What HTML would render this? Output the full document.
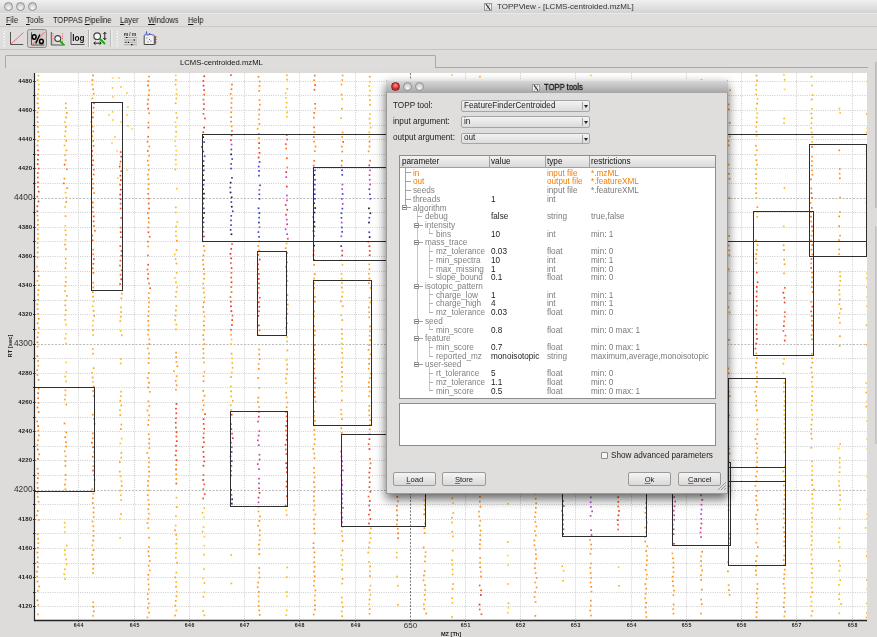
<!DOCTYPE html>
<html><head><meta charset="utf-8"><style>
*{margin:0;padding:0;box-sizing:border-box}
html,body{width:877px;height:637px;overflow:hidden;background:#dddcdb;font-family:"Liberation Sans",sans-serif;color:#222;position:relative}
.abs{position:absolute}
#titlebar{left:0;top:0;width:877px;height:13px;background:linear-gradient(#f0f0f0,#d3d3d3)}
.tl{position:absolute;width:9px;height:9px;border-radius:50%;background:radial-gradient(circle at 50% 75%,#f6f6f6 0,#dadada 45%,#bababa 100%);border:1px solid #929292}
#title{will-change:transform;left:497px;top:2px;font-size:8px;color:#333;white-space:pre}
#xicon{left:484px;top:2px;width:8px;height:8px;border:1px solid #777;background:#f4f4f4;font-size:8px;line-height:7px;text-align:center;font-family:"Liberation Serif",serif;color:#222}
#menubar{left:0;top:13px;width:877px;height:14px;background:#dfdedd;border-top:1px solid #e8e8e8;border-bottom:1px solid #c9c8c7}
.mi{position:absolute;will-change:transform;top:2.4px;font-size:8.2px;color:#151515;white-space:pre;transform:scaleX(0.915);transform-origin:0 0}
.mi u{text-decoration:underline}
#toolbar{left:0;top:27px;width:877px;height:23px;background:#dfdedd;border-bottom:1px solid #c4c3c2}
#tabarea{left:0;top:50px;width:877px;height:23px;background:#dddcdb}
.dt{position:absolute;will-change:transform;font-size:8.2px;color:#222;white-space:pre;line-height:10px}
.tlr{width:9px;height:9px;border-radius:50%;background:radial-gradient(circle at 50% 35%,#ff9b9b 0,#e23a3a 45%,#a51414 100%);border:1px solid #8a2020}
.xi{width:8px;height:8px;background:#f2f2f2;border:1px solid #888}
.combo{position:absolute;width:128.5px;height:11.5px;border:1px solid #a5a5a5;border-radius:2px;background:linear-gradient(#f3f3f3,#dcdcdc)}
.combo span{position:absolute;will-change:transform;font-size:8.2px;color:#222;white-space:pre;line-height:10px}
.combo i{position:absolute;left:119.5px;top:1px;width:1px;height:8px;background:#a5a5a5}
.combo b{position:absolute;left:121.5px;top:4px;width:0;height:0;border-left:2.5px solid transparent;border-right:2.5px solid transparent;border-top:3px solid #222}
.hdr{background:linear-gradient(#f2f2f2,#dadada);border-bottom:1px solid #a0a0a0}
.tb{width:5px;height:5px;border:1px solid #9a9a9a;background:#fff}
.tb:after{content:"";position:absolute;left:0;top:1px;width:3px;height:1px;background:#666}
.btn{position:absolute;border:1px solid #9a9a9a;border-radius:2px;background:linear-gradient(#f4f4f4,#d9d9d9)}
.btn span{position:absolute;will-change:transform;left:0;right:0;top:2.3px;text-align:center;font-size:7.6px;color:#222;line-height:10px}
.btn u{text-decoration:underline;text-decoration-color:#777}

#plot{will-change:transform}
.tabl{will-change:transform}

</style></head><body>
<div id="titlebar" class="abs">
 <div class="tl" style="left:4px;top:2px"></div>
 <div class="tl" style="left:16px;top:2px"></div>
 <div class="tl" style="left:28px;top:2px"></div>
 <svg class="abs" style="left:483.5px;top:2.5px" width="8" height="8"><rect x="0.5" y="0.5" width="7" height="7" fill="#f4f4f4" stroke="#9a9a9a"/><path d="M2 1.2 L6.2 6.8" stroke="#333" stroke-width="1.1"/><path d="M6 1.2 L2 6.8" stroke="#555" stroke-width="0.6"/></svg>
 <div id="title" class="abs">TOPPView - [LCMS-centroided.mzML]</div>
</div>
<div id="menubar" class="abs">
 <span class="mi" style="left:5.6px"><u>F</u>ile</span>
 <span class="mi" style="left:26.3px"><u>T</u>ools</span>
 <span class="mi" style="left:53.2px">TOPPAS <u>P</u>ipeline</span>
 <span class="mi" style="left:119.8px"><u>L</u>ayer</span>
 <span class="mi" style="left:147.8px"><u>W</u>indows</span>
 <span class="mi" style="left:187.8px"><u>H</u>elp</span>
</div>
<div id="toolbar" class="abs"></div>
<svg class="abs" style="left:0;top:0;will-change:transform" width="170" height="52">
 <path d="M4 31 l2 1.5 l-2 1.5 l2 1.5 l-2 1.5 l2 1.5 l-2 1.5 l2 1.5 l-2 1.5 l2 1.5 l-2 1.5 l2 1.5" fill="none" stroke="#fbfbfb" stroke-width="1.2"/><path d="M4.6 31.5 l2 1.5 l-2 1.5 l2 1.5 l-2 1.5 l2 1.5 l-2 1.5 l2 1.5 l-2 1.5 l2 1.5 l-2 1.5 l2 1.5" fill="none" stroke="#c4c4c4" stroke-width="0.6"/>
 <path d="M117 31 l2 1.5 l-2 1.5 l2 1.5 l-2 1.5 l2 1.5 l-2 1.5 l2 1.5 l-2 1.5 l2 1.5 l-2 1.5 l2 1.5" fill="none" stroke="#fbfbfb" stroke-width="1.2"/><path d="M117.6 31.5 l2 1.5 l-2 1.5 l2 1.5 l-2 1.5 l2 1.5 l-2 1.5 l2 1.5 l-2 1.5 l2 1.5 l-2 1.5 l2 1.5" fill="none" stroke="#c4c4c4" stroke-width="0.6"/>
 <!-- icon1 linear -->
 <path d="M10.5 32 V44.5 H23.3" stroke="#555" stroke-width="1" fill="none"/>
 <path d="M11 44 L23.5 32.5" stroke="#f06060" stroke-width="0.9"/>
 <!-- pressed button -->
 <rect x="27.5" y="29.5" width="19" height="18" rx="2" fill="#d1d0cf" stroke="#8e8e8e"/>
 <path d="M31.5 32.3 V45 H44.3" stroke="#555" stroke-width="1" fill="none"/>
 <path d="M32 44.8 L44.8 32" stroke="#f06060" stroke-width="0.9"/>
 <ellipse cx="34.2" cy="37" rx="1.9" ry="2.2" fill="none" stroke="#000" stroke-width="1.5"/>
 <ellipse cx="41.4" cy="41.4" rx="1.9" ry="2.2" fill="none" stroke="#000" stroke-width="1.5"/>
 <path d="M39.8 34.5 L35.8 43.5" stroke="#000" stroke-width="1.4"/>
 <!-- icon3 zoom axes -->
 <path d="M51.3 32 V45 H63" stroke="#555" stroke-width="1" fill="none"/>
 <path d="M53 33 V45 M62.5 33 V45" stroke="#f07070" stroke-width="0.9" stroke-dasharray="1.5 1"/>
 <circle cx="57.8" cy="38.6" r="3" fill="#f4f4f4" stroke="#444" stroke-width="1.1"/>
 <path d="M60.5 41.5 L64 44.8" stroke="#10b010" stroke-width="1.8" stroke-linecap="round"/>
 <!-- icon4 log -->
 <path d="M71 32 V44.5 H84.5" stroke="#555" stroke-width="1" fill="none"/>
 <text x="72.3" y="41.3" font-family="Liberation Sans" font-weight="bold" font-size="8.2" fill="#111">log</text>
 <!-- separators -->
 <path d="M88.5 30 V47 M110.8 30 V47" stroke="#b0b0b0"/>
 <path d="M89.5 30 V47 M111.8 30 V47" stroke="#f4f4f4"/>
 <!-- icon5 zoom -->
 <circle cx="97.2" cy="36.2" r="3.3" fill="#f6f6f6" stroke="#444" stroke-width="1.2"/>
 <path d="M100.5 39.5 L104.5 43.5" stroke="#10b010" stroke-width="1.9" stroke-linecap="round"/>
 <path d="M104.8 32.5 V39.5 M103.3 34 L104.8 32.3 L106.3 34 M103.3 38 L104.8 39.7 L106.3 38" stroke="#111" stroke-width="0.9" fill="none"/>
 <path d="M94 43.2 H101 M95.5 41.7 L93.8 43.2 L95.5 44.7 M99.5 41.7 L101.2 43.2 L99.5 44.7" stroke="#111" stroke-width="0.9" fill="none"/>
 <!-- icon6 m/m -->
 <text x="124" y="36" font-family="Liberation Sans" font-size="4.6" font-weight="bold" fill="#222" textLength="12">m/m</text>
 <path d="M124 37.5 H137 M124 40 H137 M124 42.3 H137 M124 44.7 H137" stroke="#888" stroke-width="0.6"/>
 <path d="M126 37.5 h1.5 M133.5 40 h1.5 M125.5 42.3 h1 M128 42.3 h1 M131 44.7 h1.5" stroke="#111" stroke-width="1.2"/>
 <!-- icon7 chart -->
 <path d="M144.2 35.5 V44.5 H154.3 V35.5" stroke="#444" fill="#f0f0f0" stroke-width="1"/>
 <path d="M144 35 L146 35 L146.5 31.5 L147 35 L149 35 L149.5 33 L150 35 L151 34 L152 35 L154 35" stroke="#4a5ad0" stroke-width="0.9" fill="none"/>
 <path d="M155.5 36 V44.5 M155.5 37 h1.2 M155.5 39.5 h1.2 M155.5 42 h1.2" stroke="#c04040" stroke-width="0.9"/>
 <path d="M146.5 38 h0.8 M149 39.5 h0.8 M150.5 41 h0.8 M147.5 42 h0.8" stroke="#333" stroke-width="0.9"/>
</svg>
<div id="tabarea" class="abs">
 <div class="abs" style="left:5px;top:5px;width:431px;height:13px;border:1px solid #a9a8a7;border-bottom:none;border-radius:2px 2px 0 0;background:#dedddc"></div>
 <div class="abs" style="left:435px;top:16.5px;width:433px;height:1px;background:#a9a8a7"></div>
 <div class="abs tabl" style="left:180px;top:8px;font-size:7.7px;color:#151515;white-space:pre">LCMS-centroided.mzML</div>
 <div class="abs" style="left:875px;top:12px;width:2px;height:146px;background:linear-gradient(90deg,#b4b3b2,#cfcecd)"></div><div class="abs" style="left:875px;top:176px;width:2px;height:218px;background:linear-gradient(90deg,#bdbcbb,#d3d2d1)"></div>
</div>

<svg id="plot" width="877" height="637" viewBox="0 0 877 637" style="position:absolute;left:0;top:0;font-family:'Liberation Sans',sans-serif"><rect x="34" y="73" width="833" height="547" fill="#fff"/><line x1="34" y1="81.5" x2="867" y2="81.5" stroke="#cdcdcd" stroke-width="1" stroke-dasharray="1 1.3"/><line x1="34" y1="95.5" x2="867" y2="95.5" stroke="#cdcdcd" stroke-width="1" stroke-dasharray="1 1.3"/><line x1="34" y1="110.5" x2="867" y2="110.5" stroke="#cdcdcd" stroke-width="1" stroke-dasharray="1 1.3"/><line x1="34" y1="125.5" x2="867" y2="125.5" stroke="#cdcdcd" stroke-width="1" stroke-dasharray="1 1.3"/><line x1="34" y1="139.5" x2="867" y2="139.5" stroke="#cdcdcd" stroke-width="1" stroke-dasharray="1 1.3"/><line x1="34" y1="154.5" x2="867" y2="154.5" stroke="#cdcdcd" stroke-width="1" stroke-dasharray="1 1.3"/><line x1="34" y1="168.5" x2="867" y2="168.5" stroke="#cdcdcd" stroke-width="1" stroke-dasharray="1 1.3"/><line x1="34" y1="183.5" x2="867" y2="183.5" stroke="#cdcdcd" stroke-width="1" stroke-dasharray="1 1.3"/><line x1="34" y1="198.5" x2="867" y2="198.5" stroke="#bababa" stroke-width="1" stroke-dasharray="2 1.5"/><line x1="34" y1="212.5" x2="867" y2="212.5" stroke="#cdcdcd" stroke-width="1" stroke-dasharray="1 1.3"/><line x1="34" y1="227.5" x2="867" y2="227.5" stroke="#cdcdcd" stroke-width="1" stroke-dasharray="1 1.3"/><line x1="34" y1="241.5" x2="867" y2="241.5" stroke="#cdcdcd" stroke-width="1" stroke-dasharray="1 1.3"/><line x1="34" y1="256.5" x2="867" y2="256.5" stroke="#cdcdcd" stroke-width="1" stroke-dasharray="1 1.3"/><line x1="34" y1="271.5" x2="867" y2="271.5" stroke="#cdcdcd" stroke-width="1" stroke-dasharray="1 1.3"/><line x1="34" y1="285.5" x2="867" y2="285.5" stroke="#cdcdcd" stroke-width="1" stroke-dasharray="1 1.3"/><line x1="34" y1="300.5" x2="867" y2="300.5" stroke="#cdcdcd" stroke-width="1" stroke-dasharray="1 1.3"/><line x1="34" y1="314.5" x2="867" y2="314.5" stroke="#cdcdcd" stroke-width="1" stroke-dasharray="1 1.3"/><line x1="34" y1="329.5" x2="867" y2="329.5" stroke="#cdcdcd" stroke-width="1" stroke-dasharray="1 1.3"/><line x1="34" y1="344.5" x2="867" y2="344.5" stroke="#bababa" stroke-width="1" stroke-dasharray="2 1.5"/><line x1="34" y1="358.5" x2="867" y2="358.5" stroke="#cdcdcd" stroke-width="1" stroke-dasharray="1 1.3"/><line x1="34" y1="373.5" x2="867" y2="373.5" stroke="#cdcdcd" stroke-width="1" stroke-dasharray="1 1.3"/><line x1="34" y1="387.5" x2="867" y2="387.5" stroke="#cdcdcd" stroke-width="1" stroke-dasharray="1 1.3"/><line x1="34" y1="402.5" x2="867" y2="402.5" stroke="#cdcdcd" stroke-width="1" stroke-dasharray="1 1.3"/><line x1="34" y1="417.5" x2="867" y2="417.5" stroke="#cdcdcd" stroke-width="1" stroke-dasharray="1 1.3"/><line x1="34" y1="431.5" x2="867" y2="431.5" stroke="#cdcdcd" stroke-width="1" stroke-dasharray="1 1.3"/><line x1="34" y1="446.5" x2="867" y2="446.5" stroke="#cdcdcd" stroke-width="1" stroke-dasharray="1 1.3"/><line x1="34" y1="460.5" x2="867" y2="460.5" stroke="#cdcdcd" stroke-width="1" stroke-dasharray="1 1.3"/><line x1="34" y1="475.5" x2="867" y2="475.5" stroke="#cdcdcd" stroke-width="1" stroke-dasharray="1 1.3"/><line x1="34" y1="490.5" x2="867" y2="490.5" stroke="#bababa" stroke-width="1" stroke-dasharray="2 1.5"/><line x1="34" y1="504.5" x2="867" y2="504.5" stroke="#cdcdcd" stroke-width="1" stroke-dasharray="1 1.3"/><line x1="34" y1="519.5" x2="867" y2="519.5" stroke="#cdcdcd" stroke-width="1" stroke-dasharray="1 1.3"/><line x1="34" y1="533.5" x2="867" y2="533.5" stroke="#cdcdcd" stroke-width="1" stroke-dasharray="1 1.3"/><line x1="34" y1="548.5" x2="867" y2="548.5" stroke="#cdcdcd" stroke-width="1" stroke-dasharray="1 1.3"/><line x1="34" y1="563.5" x2="867" y2="563.5" stroke="#cdcdcd" stroke-width="1" stroke-dasharray="1 1.3"/><line x1="34" y1="577.5" x2="867" y2="577.5" stroke="#cdcdcd" stroke-width="1" stroke-dasharray="1 1.3"/><line x1="34" y1="592.5" x2="867" y2="592.5" stroke="#cdcdcd" stroke-width="1" stroke-dasharray="1 1.3"/><line x1="34" y1="606.5" x2="867" y2="606.5" stroke="#cdcdcd" stroke-width="1" stroke-dasharray="1 1.3"/><line x1="78.5" y1="73" x2="78.5" y2="620" stroke="#cdcdcd" stroke-width="1" stroke-dasharray="1 1.3"/><line x1="134.5" y1="73" x2="134.5" y2="620" stroke="#cdcdcd" stroke-width="1" stroke-dasharray="1 1.3"/><line x1="189.5" y1="73" x2="189.5" y2="620" stroke="#cdcdcd" stroke-width="1" stroke-dasharray="1 1.3"/><line x1="244.5" y1="73" x2="244.5" y2="620" stroke="#cdcdcd" stroke-width="1" stroke-dasharray="1 1.3"/><line x1="299.5" y1="73" x2="299.5" y2="620" stroke="#cdcdcd" stroke-width="1" stroke-dasharray="1 1.3"/><line x1="355.5" y1="73" x2="355.5" y2="620" stroke="#cdcdcd" stroke-width="1" stroke-dasharray="1 1.3"/><line x1="410.5" y1="73" x2="410.5" y2="620" stroke="#7a7a7a" stroke-width="1" stroke-dasharray="2 1.5"/><line x1="465.5" y1="73" x2="465.5" y2="620" stroke="#cdcdcd" stroke-width="1" stroke-dasharray="1 1.3"/><line x1="520.5" y1="73" x2="520.5" y2="620" stroke="#cdcdcd" stroke-width="1" stroke-dasharray="1 1.3"/><line x1="575.5" y1="73" x2="575.5" y2="620" stroke="#cdcdcd" stroke-width="1" stroke-dasharray="1 1.3"/><line x1="631.5" y1="73" x2="631.5" y2="620" stroke="#cdcdcd" stroke-width="1" stroke-dasharray="1 1.3"/><line x1="686.5" y1="73" x2="686.5" y2="620" stroke="#cdcdcd" stroke-width="1" stroke-dasharray="1 1.3"/><line x1="741.5" y1="73" x2="741.5" y2="620" stroke="#cdcdcd" stroke-width="1" stroke-dasharray="1 1.3"/><line x1="796.5" y1="73" x2="796.5" y2="620" stroke="#cdcdcd" stroke-width="1" stroke-dasharray="1 1.3"/><line x1="852.5" y1="73" x2="852.5" y2="620" stroke="#cdcdcd" stroke-width="1" stroke-dasharray="1 1.3"/><defs><clipPath id="pc"><rect x="34" y="73" width="833" height="547"/></clipPath></defs><g clip-path="url(#pc)"><rect x="37.6" y="74.8" width="1.7" height="1.7" fill="#f9b915"/><rect x="36.8" y="79.3" width="1.7" height="1.7" fill="#f9b915"/><rect x="37.9" y="83.7" width="1.7" height="1.7" fill="#fcc41e"/><rect x="37.6" y="88.5" width="1.7" height="1.7" fill="#ffb81a"/><rect x="37.1" y="93.3" width="1.7" height="1.7" fill="#fcc41e"/><rect x="37.1" y="97.7" width="1.7" height="1.7" fill="#f9b915"/><rect x="36.7" y="102.5" width="1.7" height="1.7" fill="#ff8a12"/><rect x="37.7" y="107.2" width="1.7" height="1.7" fill="#ff9416"/><rect x="36.7" y="111.6" width="1.7" height="1.7" fill="#ff9c1a"/><rect x="36.6" y="116.4" width="1.7" height="1.7" fill="#ff8a12"/><rect x="36.8" y="121.1" width="1.7" height="1.7" fill="#ff9c1a"/><rect x="36.9" y="126.0" width="1.7" height="1.7" fill="#ff9c1a"/><rect x="37.4" y="131.0" width="1.7" height="1.7" fill="#ff9416"/><rect x="38.2" y="135.6" width="1.7" height="1.7" fill="#ff9416"/><rect x="37.1" y="140.0" width="1.7" height="1.7" fill="#ff9c1a"/><rect x="36.6" y="144.6" width="1.7" height="1.7" fill="#ff9416"/><rect x="37.1" y="149.5" width="1.7" height="1.7" fill="#f5501e"/><rect x="37.3" y="154.1" width="1.7" height="1.7" fill="#e83424"/><rect x="37.0" y="158.8" width="1.7" height="1.7" fill="#ee4020"/><rect x="36.8" y="163.3" width="1.7" height="1.7" fill="#e83424"/><rect x="37.8" y="167.7" width="1.7" height="1.7" fill="#f5501e"/><rect x="36.9" y="172.2" width="1.7" height="1.7" fill="#f5501e"/><rect x="37.0" y="176.6" width="1.7" height="1.7" fill="#f5642a"/><rect x="37.1" y="181.5" width="1.7" height="1.7" fill="#f5501e"/><rect x="37.1" y="186.0" width="1.7" height="1.7" fill="#f5642a"/><rect x="37.8" y="190.8" width="1.7" height="1.7" fill="#ee4020"/><rect x="36.5" y="195.7" width="1.7" height="1.7" fill="#f5642a"/><rect x="37.6" y="200.6" width="1.7" height="1.7" fill="#e83424"/><rect x="36.6" y="205.4" width="1.7" height="1.7" fill="#ee4020"/><rect x="36.5" y="210.4" width="1.7" height="1.7" fill="#ee4020"/><rect x="36.6" y="214.8" width="1.7" height="1.7" fill="#ff9416"/><rect x="37.0" y="219.4" width="1.7" height="1.7" fill="#ff9416"/><rect x="37.0" y="223.9" width="1.7" height="1.7" fill="#ff8a12"/><rect x="36.8" y="228.6" width="1.7" height="1.7" fill="#ff9c1a"/><rect x="37.1" y="233.2" width="1.7" height="1.7" fill="#ffa51e"/><rect x="37.1" y="237.8" width="1.7" height="1.7" fill="#ff9c1a"/><rect x="36.8" y="242.3" width="1.7" height="1.7" fill="#ffa51e"/><rect x="36.9" y="246.8" width="1.7" height="1.7" fill="#ffa51e"/><rect x="36.8" y="251.6" width="1.7" height="1.7" fill="#ff9c1a"/><rect x="36.9" y="256.6" width="1.7" height="1.7" fill="#ffa51e"/><rect x="36.2" y="265.8" width="1.7" height="1.7" fill="#ffa51e"/><rect x="37.1" y="270.3" width="1.7" height="1.7" fill="#ff9416"/><rect x="37.8" y="275.0" width="1.7" height="1.7" fill="#ff8a12"/><rect x="36.5" y="279.9" width="1.7" height="1.7" fill="#ffa51e"/><rect x="38.0" y="284.3" width="1.7" height="1.7" fill="#ff9c1a"/><rect x="37.6" y="289.3" width="1.7" height="1.7" fill="#ff9416"/><rect x="37.3" y="293.9" width="1.7" height="1.7" fill="#ff9c1a"/><rect x="37.2" y="298.9" width="1.7" height="1.7" fill="#ffa51e"/><rect x="36.5" y="303.5" width="1.7" height="1.7" fill="#ff9c1a"/><rect x="36.8" y="308.2" width="1.7" height="1.7" fill="#ffa51e"/><rect x="37.2" y="313.0" width="1.7" height="1.7" fill="#ff9416"/><rect x="37.9" y="317.9" width="1.7" height="1.7" fill="#ff9416"/><rect x="36.8" y="322.4" width="1.7" height="1.7" fill="#ff8a12"/><rect x="37.8" y="327.1" width="1.7" height="1.7" fill="#ffa51e"/><rect x="37.4" y="331.9" width="1.7" height="1.7" fill="#ffa51e"/><rect x="36.7" y="336.4" width="1.7" height="1.7" fill="#ff8a12"/><rect x="36.6" y="341.4" width="1.7" height="1.7" fill="#ff8a12"/><rect x="36.8" y="345.8" width="1.7" height="1.7" fill="#ff9c1a"/><rect x="36.6" y="355.2" width="1.7" height="1.7" fill="#ff8a12"/><rect x="37.2" y="360.1" width="1.7" height="1.7" fill="#ff9416"/><rect x="37.5" y="364.9" width="1.7" height="1.7" fill="#ffa51e"/><rect x="36.4" y="369.4" width="1.7" height="1.7" fill="#ff9c1a"/><rect x="36.6" y="374.2" width="1.7" height="1.7" fill="#ff9c1a"/><rect x="37.7" y="379.0" width="1.7" height="1.7" fill="#ff8a12"/><rect x="37.8" y="387.9" width="1.7" height="1.7" fill="#ff9416"/><rect x="37.3" y="392.4" width="1.7" height="1.7" fill="#f5581e"/><rect x="37.2" y="397.4" width="1.7" height="1.7" fill="#f9701e"/><rect x="37.6" y="402.2" width="1.7" height="1.7" fill="#ff8a12"/><rect x="36.6" y="406.7" width="1.7" height="1.7" fill="#f9701e"/><rect x="37.8" y="411.3" width="1.7" height="1.7" fill="#f9701e"/><rect x="36.3" y="420.6" width="1.7" height="1.7" fill="#ff8a12"/><rect x="37.3" y="425.3" width="1.7" height="1.7" fill="#f5581e"/><rect x="37.3" y="429.9" width="1.7" height="1.7" fill="#ff8a12"/><rect x="37.9" y="434.5" width="1.7" height="1.7" fill="#ff8a12"/><rect x="37.2" y="439.4" width="1.7" height="1.7" fill="#ff8a12"/><rect x="36.6" y="444.1" width="1.7" height="1.7" fill="#ff9416"/><rect x="36.9" y="448.7" width="1.7" height="1.7" fill="#f9701e"/><rect x="38.3" y="453.5" width="1.7" height="1.7" fill="#ff8a12"/><rect x="37.1" y="458.1" width="1.7" height="1.7" fill="#f9701e"/><rect x="36.8" y="467.8" width="1.7" height="1.7" fill="#ff9416"/><rect x="37.3" y="472.7" width="1.7" height="1.7" fill="#f9701e"/><rect x="37.0" y="477.4" width="1.7" height="1.7" fill="#f9701e"/><rect x="36.6" y="482.1" width="1.7" height="1.7" fill="#ff9416"/><rect x="36.9" y="487.1" width="1.7" height="1.7" fill="#f9701e"/><rect x="36.6" y="491.7" width="1.7" height="1.7" fill="#ff9416"/><rect x="36.9" y="496.2" width="1.7" height="1.7" fill="#ff9c1a"/><rect x="37.7" y="500.9" width="1.7" height="1.7" fill="#ff9416"/><rect x="36.9" y="510.1" width="1.7" height="1.7" fill="#ff8a12"/><rect x="35.9" y="514.6" width="1.7" height="1.7" fill="#ff9416"/><rect x="37.8" y="519.1" width="1.7" height="1.7" fill="#ff8a12"/><rect x="36.9" y="533.4" width="1.7" height="1.7" fill="#ffa51e"/><rect x="37.1" y="537.9" width="1.7" height="1.7" fill="#ff9c1a"/><rect x="37.5" y="542.3" width="1.7" height="1.7" fill="#ffa51e"/><rect x="37.1" y="546.9" width="1.7" height="1.7" fill="#ff9416"/><rect x="36.6" y="551.7" width="1.7" height="1.7" fill="#ff8a12"/><rect x="37.0" y="556.5" width="1.7" height="1.7" fill="#ff9c1a"/><rect x="36.7" y="561.2" width="1.7" height="1.7" fill="#ff8a12"/><rect x="37.0" y="566.1" width="1.7" height="1.7" fill="#ff8a12"/><rect x="36.2" y="570.8" width="1.7" height="1.7" fill="#ff8a12"/><rect x="36.3" y="575.7" width="1.7" height="1.7" fill="#ffa51e"/><rect x="36.6" y="580.7" width="1.7" height="1.7" fill="#ff8a12"/><rect x="38.2" y="585.6" width="1.7" height="1.7" fill="#ff9c1a"/><rect x="37.0" y="590.0" width="1.7" height="1.7" fill="#ff9c1a"/><rect x="36.6" y="599.4" width="1.7" height="1.7" fill="#ff8a12"/><rect x="37.4" y="604.1" width="1.7" height="1.7" fill="#ffa51e"/><rect x="37.1" y="613.5" width="1.7" height="1.7" fill="#ffa51e"/><rect x="64.9" y="102.6" width="1.7" height="1.7" fill="#ffa51e"/><rect x="65.0" y="107.1" width="1.7" height="1.7" fill="#f9b915"/><rect x="65.9" y="112.1" width="1.7" height="1.7" fill="#ff9a1a"/><rect x="65.2" y="116.6" width="1.7" height="1.7" fill="#ff9a1a"/><rect x="64.0" y="121.2" width="1.7" height="1.7" fill="#fcc41e"/><rect x="65.0" y="126.0" width="1.7" height="1.7" fill="#ffa51e"/><rect x="64.7" y="130.5" width="1.7" height="1.7" fill="#ffa51e"/><rect x="64.1" y="135.3" width="1.7" height="1.7" fill="#fcc41e"/><rect x="65.3" y="139.9" width="1.7" height="1.7" fill="#ff9a1a"/><rect x="63.7" y="144.6" width="1.7" height="1.7" fill="#f9b915"/><rect x="65.5" y="149.5" width="1.7" height="1.7" fill="#ffa51e"/><rect x="64.2" y="154.4" width="1.7" height="1.7" fill="#f9b915"/><rect x="64.8" y="159.3" width="1.7" height="1.7" fill="#ff9416"/><rect x="63.8" y="163.8" width="1.7" height="1.7" fill="#f5581e"/><rect x="66.0" y="168.4" width="1.7" height="1.7" fill="#ff8a12"/><rect x="63.6" y="177.8" width="1.7" height="1.7" fill="#ff9416"/><rect x="62.9" y="182.5" width="1.7" height="1.7" fill="#f9701e"/><rect x="66.2" y="187.3" width="1.7" height="1.7" fill="#ff8a12"/><rect x="64.7" y="191.8" width="1.7" height="1.7" fill="#fcc41e"/><rect x="65.3" y="196.7" width="1.7" height="1.7" fill="#fcc41e"/><rect x="65.3" y="201.1" width="1.7" height="1.7" fill="#ff9a1a"/><rect x="64.3" y="206.1" width="1.7" height="1.7" fill="#fcc41e"/><rect x="64.7" y="215.3" width="1.7" height="1.7" fill="#ffa51e"/><rect x="64.5" y="224.9" width="1.7" height="1.7" fill="#fcc41e"/><rect x="64.6" y="229.5" width="1.7" height="1.7" fill="#f9b915"/><rect x="65.2" y="234.1" width="1.7" height="1.7" fill="#f9b915"/><rect x="64.6" y="238.9" width="1.7" height="1.7" fill="#fcc41e"/><rect x="64.2" y="243.7" width="1.7" height="1.7" fill="#ffa51e"/><rect x="65.1" y="248.4" width="1.7" height="1.7" fill="#ff9a1a"/><rect x="64.8" y="257.8" width="1.7" height="1.7" fill="#ffa51e"/><rect x="65.1" y="262.4" width="1.7" height="1.7" fill="#fcc41e"/><rect x="64.6" y="267.4" width="1.7" height="1.7" fill="#ff9a1a"/><rect x="65.2" y="276.4" width="1.7" height="1.7" fill="#fcc41e"/><rect x="64.9" y="281.0" width="1.7" height="1.7" fill="#ffa51e"/><rect x="64.4" y="285.4" width="1.7" height="1.7" fill="#f9b915"/><rect x="64.2" y="290.2" width="1.7" height="1.7" fill="#f9b915"/><rect x="66.0" y="295.1" width="1.7" height="1.7" fill="#ffa51e"/><rect x="64.7" y="299.6" width="1.7" height="1.7" fill="#f9b915"/><rect x="64.4" y="304.5" width="1.7" height="1.7" fill="#ffa51e"/><rect x="65.0" y="309.3" width="1.7" height="1.7" fill="#ffa51e"/><rect x="64.5" y="314.2" width="1.7" height="1.7" fill="#fcc41e"/><rect x="64.4" y="319.0" width="1.7" height="1.7" fill="#f9b915"/><rect x="65.2" y="323.7" width="1.7" height="1.7" fill="#fcc41e"/><rect x="65.1" y="333.0" width="1.7" height="1.7" fill="#ffcf36"/><rect x="64.4" y="337.7" width="1.7" height="1.7" fill="#f9b915"/><rect x="65.2" y="342.6" width="1.7" height="1.7" fill="#fcc41e"/><rect x="65.3" y="361.5" width="1.7" height="1.7" fill="#ffcf36"/><rect x="65.5" y="371.0" width="1.7" height="1.7" fill="#ffcf36"/><rect x="64.4" y="375.7" width="1.7" height="1.7" fill="#ffb81a"/><rect x="65.3" y="380.5" width="1.7" height="1.7" fill="#ffb81a"/><rect x="64.6" y="389.5" width="1.7" height="1.7" fill="#ffa51e"/><rect x="64.5" y="394.2" width="1.7" height="1.7" fill="#ffa51e"/><rect x="64.1" y="398.7" width="1.7" height="1.7" fill="#ffa51e"/><rect x="65.4" y="403.7" width="1.7" height="1.7" fill="#ff9416"/><rect x="63.7" y="422.6" width="1.7" height="1.7" fill="#ff8a12"/><rect x="65.4" y="431.5" width="1.7" height="1.7" fill="#ff9416"/><rect x="64.3" y="436.4" width="1.7" height="1.7" fill="#ff8a12"/><rect x="65.1" y="441.3" width="1.7" height="1.7" fill="#ff8a12"/><rect x="65.3" y="445.7" width="1.7" height="1.7" fill="#ff8a12"/><rect x="63.9" y="450.4" width="1.7" height="1.7" fill="#ffa51e"/><rect x="64.8" y="455.4" width="1.7" height="1.7" fill="#ffa51e"/><rect x="64.5" y="460.3" width="1.7" height="1.7" fill="#ff9c1a"/><rect x="64.6" y="464.9" width="1.7" height="1.7" fill="#ff8a12"/><rect x="64.8" y="474.0" width="1.7" height="1.7" fill="#ff9416"/><rect x="64.7" y="478.8" width="1.7" height="1.7" fill="#ffa51e"/><rect x="64.1" y="483.7" width="1.7" height="1.7" fill="#ff8a12"/><rect x="64.5" y="488.4" width="1.7" height="1.7" fill="#ff9c1a"/><rect x="63.8" y="521.9" width="1.7" height="1.7" fill="#f9b915"/><rect x="64.1" y="526.5" width="1.7" height="1.7" fill="#ffcf36"/><rect x="64.1" y="531.0" width="1.7" height="1.7" fill="#ffcf36"/><rect x="65.8" y="544.8" width="1.7" height="1.7" fill="#ffb81a"/><rect x="64.1" y="549.3" width="1.7" height="1.7" fill="#fcc41e"/><rect x="64.2" y="553.8" width="1.7" height="1.7" fill="#ffb81a"/><rect x="65.3" y="558.6" width="1.7" height="1.7" fill="#f9b915"/><rect x="65.8" y="563.5" width="1.7" height="1.7" fill="#ffb81a"/><rect x="64.0" y="568.4" width="1.7" height="1.7" fill="#ffb81a"/><rect x="63.4" y="573.4" width="1.7" height="1.7" fill="#ffb81a"/><rect x="64.3" y="578.3" width="1.7" height="1.7" fill="#f9b915"/><rect x="92.2" y="74.6" width="1.7" height="1.7" fill="#ff8a12"/><rect x="91.6" y="79.2" width="1.7" height="1.7" fill="#ff8a12"/><rect x="91.6" y="83.8" width="1.7" height="1.7" fill="#ffa51e"/><rect x="92.3" y="88.5" width="1.7" height="1.7" fill="#ff8a12"/><rect x="92.9" y="92.9" width="1.7" height="1.7" fill="#ff9c1a"/><rect x="91.5" y="97.5" width="1.7" height="1.7" fill="#ff9c1a"/><rect x="93.1" y="102.4" width="1.7" height="1.7" fill="#f5581e"/><rect x="92.8" y="106.9" width="1.7" height="1.7" fill="#f9701e"/><rect x="92.5" y="111.8" width="1.7" height="1.7" fill="#ff9416"/><rect x="92.0" y="116.5" width="1.7" height="1.7" fill="#f5581e"/><rect x="90.6" y="121.1" width="1.7" height="1.7" fill="#ff8a12"/><rect x="91.7" y="125.7" width="1.7" height="1.7" fill="#ff8a12"/><rect x="92.3" y="130.5" width="1.7" height="1.7" fill="#ff8a12"/><rect x="91.4" y="135.3" width="1.7" height="1.7" fill="#ff9416"/><rect x="92.3" y="140.1" width="1.7" height="1.7" fill="#ff8a12"/><rect x="92.6" y="145.1" width="1.7" height="1.7" fill="#f9701e"/><rect x="91.4" y="150.0" width="1.7" height="1.7" fill="#f5581e"/><rect x="91.4" y="155.0" width="1.7" height="1.7" fill="#ff8a12"/><rect x="92.3" y="159.5" width="1.7" height="1.7" fill="#f5581e"/><rect x="91.8" y="164.3" width="1.7" height="1.7" fill="#f5581e"/><rect x="92.9" y="168.9" width="1.7" height="1.7" fill="#f9701e"/><rect x="92.8" y="173.7" width="1.7" height="1.7" fill="#f9701e"/><rect x="91.5" y="178.3" width="1.7" height="1.7" fill="#ff8a12"/><rect x="92.5" y="182.8" width="1.7" height="1.7" fill="#ff8a12"/><rect x="91.8" y="187.4" width="1.7" height="1.7" fill="#f9701e"/><rect x="93.2" y="192.2" width="1.7" height="1.7" fill="#ff9416"/><rect x="92.0" y="201.7" width="1.7" height="1.7" fill="#f9701e"/><rect x="92.0" y="206.5" width="1.7" height="1.7" fill="#ff8a12"/><rect x="92.1" y="211.1" width="1.7" height="1.7" fill="#ff9416"/><rect x="92.9" y="215.6" width="1.7" height="1.7" fill="#f5581e"/><rect x="92.8" y="220.5" width="1.7" height="1.7" fill="#f5581e"/><rect x="93.1" y="225.2" width="1.7" height="1.7" fill="#f9701e"/><rect x="94.1" y="229.9" width="1.7" height="1.7" fill="#f9701e"/><rect x="91.5" y="234.7" width="1.7" height="1.7" fill="#f9701e"/><rect x="91.8" y="239.5" width="1.7" height="1.7" fill="#f5581e"/><rect x="92.4" y="248.8" width="1.7" height="1.7" fill="#ff8a12"/><rect x="92.4" y="253.4" width="1.7" height="1.7" fill="#ff8a12"/><rect x="93.0" y="258.2" width="1.7" height="1.7" fill="#f5581e"/><rect x="92.5" y="262.9" width="1.7" height="1.7" fill="#f5581e"/><rect x="91.9" y="267.5" width="1.7" height="1.7" fill="#f9701e"/><rect x="92.5" y="272.0" width="1.7" height="1.7" fill="#f9701e"/><rect x="92.4" y="281.9" width="1.7" height="1.7" fill="#ff9416"/><rect x="92.4" y="286.6" width="1.7" height="1.7" fill="#ff9416"/><rect x="92.0" y="291.3" width="1.7" height="1.7" fill="#ff9a1a"/><rect x="92.2" y="295.8" width="1.7" height="1.7" fill="#ffa51e"/><rect x="92.6" y="300.5" width="1.7" height="1.7" fill="#fcc41e"/><rect x="91.8" y="305.4" width="1.7" height="1.7" fill="#fcc41e"/><rect x="92.7" y="310.0" width="1.7" height="1.7" fill="#ff9a1a"/><rect x="93.4" y="314.9" width="1.7" height="1.7" fill="#ff9a1a"/><rect x="92.3" y="319.8" width="1.7" height="1.7" fill="#fcc41e"/><rect x="91.8" y="324.7" width="1.7" height="1.7" fill="#fcc41e"/><rect x="92.2" y="329.3" width="1.7" height="1.7" fill="#ff9a1a"/><rect x="92.3" y="334.2" width="1.7" height="1.7" fill="#fcc41e"/><rect x="91.9" y="348.2" width="1.7" height="1.7" fill="#fcc41e"/><rect x="92.1" y="352.9" width="1.7" height="1.7" fill="#ffa51e"/><rect x="92.8" y="367.3" width="1.7" height="1.7" fill="#ffa51e"/><rect x="91.2" y="371.9" width="1.7" height="1.7" fill="#fcc41e"/><rect x="91.8" y="376.6" width="1.7" height="1.7" fill="#ff9a1a"/><rect x="92.2" y="381.0" width="1.7" height="1.7" fill="#fcc41e"/><rect x="92.8" y="385.6" width="1.7" height="1.7" fill="#ff9a1a"/><rect x="92.4" y="390.1" width="1.7" height="1.7" fill="#ff9416"/><rect x="92.8" y="395.1" width="1.7" height="1.7" fill="#ff9416"/><rect x="91.9" y="413.8" width="1.7" height="1.7" fill="#ff9416"/><rect x="93.3" y="418.2" width="1.7" height="1.7" fill="#f9701e"/><rect x="93.8" y="422.9" width="1.7" height="1.7" fill="#ff8a12"/><rect x="91.9" y="432.4" width="1.7" height="1.7" fill="#ff9416"/><rect x="91.9" y="437.3" width="1.7" height="1.7" fill="#ff9416"/><rect x="91.1" y="441.9" width="1.7" height="1.7" fill="#f5581e"/><rect x="92.2" y="446.4" width="1.7" height="1.7" fill="#f5581e"/><rect x="93.2" y="451.3" width="1.7" height="1.7" fill="#ff8a12"/><rect x="91.9" y="456.0" width="1.7" height="1.7" fill="#f9701e"/><rect x="93.5" y="460.6" width="1.7" height="1.7" fill="#ff8a12"/><rect x="92.5" y="465.3" width="1.7" height="1.7" fill="#ff8a12"/><rect x="92.2" y="469.7" width="1.7" height="1.7" fill="#f5581e"/><rect x="93.2" y="474.3" width="1.7" height="1.7" fill="#f9701e"/><rect x="93.7" y="478.9" width="1.7" height="1.7" fill="#ff8a12"/><rect x="91.4" y="488.4" width="1.7" height="1.7" fill="#ff9416"/><rect x="92.5" y="492.8" width="1.7" height="1.7" fill="#ff9c1a"/><rect x="92.0" y="497.3" width="1.7" height="1.7" fill="#ff9416"/><rect x="91.9" y="502.2" width="1.7" height="1.7" fill="#ff8a12"/><rect x="92.8" y="506.9" width="1.7" height="1.7" fill="#ff9416"/><rect x="92.7" y="511.6" width="1.7" height="1.7" fill="#ff8a12"/><rect x="92.8" y="516.2" width="1.7" height="1.7" fill="#ffa51e"/><rect x="91.7" y="520.6" width="1.7" height="1.7" fill="#ff9c1a"/><rect x="92.5" y="525.4" width="1.7" height="1.7" fill="#ff9c1a"/><rect x="92.6" y="530.1" width="1.7" height="1.7" fill="#ff9416"/><rect x="92.6" y="535.0" width="1.7" height="1.7" fill="#ff8a12"/><rect x="92.4" y="539.7" width="1.7" height="1.7" fill="#ff8a12"/><rect x="91.6" y="544.5" width="1.7" height="1.7" fill="#ffa51e"/><rect x="92.7" y="549.3" width="1.7" height="1.7" fill="#ff8a12"/><rect x="91.5" y="554.0" width="1.7" height="1.7" fill="#ff9416"/><rect x="92.3" y="558.4" width="1.7" height="1.7" fill="#ffa51e"/><rect x="92.6" y="563.2" width="1.7" height="1.7" fill="#ff8a12"/><rect x="92.3" y="567.7" width="1.7" height="1.7" fill="#ff9c1a"/><rect x="92.1" y="572.1" width="1.7" height="1.7" fill="#ffa51e"/><rect x="92.3" y="601.4" width="1.7" height="1.7" fill="#ffa51e"/><rect x="92.4" y="605.9" width="1.7" height="1.7" fill="#ff8a12"/><rect x="92.9" y="610.5" width="1.7" height="1.7" fill="#ff8a12"/><rect x="92.2" y="615.0" width="1.7" height="1.7" fill="#ffa51e"/><rect x="119.8" y="151.2" width="1.7" height="1.7" fill="#f5501e"/><rect x="120.4" y="155.8" width="1.7" height="1.7" fill="#e83424"/><rect x="119.8" y="160.7" width="1.7" height="1.7" fill="#f5501e"/><rect x="118.9" y="165.7" width="1.7" height="1.7" fill="#ee4020"/><rect x="120.3" y="170.3" width="1.7" height="1.7" fill="#f5501e"/><rect x="119.6" y="174.8" width="1.7" height="1.7" fill="#e83424"/><rect x="120.0" y="179.3" width="1.7" height="1.7" fill="#ee4020"/><rect x="119.3" y="183.9" width="1.7" height="1.7" fill="#f5642a"/><rect x="119.9" y="188.8" width="1.7" height="1.7" fill="#e83424"/><rect x="119.4" y="193.7" width="1.7" height="1.7" fill="#e83424"/><rect x="119.8" y="198.3" width="1.7" height="1.7" fill="#e83424"/><rect x="119.7" y="202.8" width="1.7" height="1.7" fill="#f5501e"/><rect x="119.8" y="207.7" width="1.7" height="1.7" fill="#f5501e"/><rect x="120.3" y="217.1" width="1.7" height="1.7" fill="#f5642a"/><rect x="119.8" y="226.8" width="1.7" height="1.7" fill="#f5642a"/><rect x="119.8" y="231.3" width="1.7" height="1.7" fill="#ee4020"/><rect x="120.1" y="236.3" width="1.7" height="1.7" fill="#f5642a"/><rect x="119.5" y="245.3" width="1.7" height="1.7" fill="#f5501e"/><rect x="120.7" y="250.2" width="1.7" height="1.7" fill="#e83424"/><rect x="120.3" y="254.8" width="1.7" height="1.7" fill="#f5501e"/><rect x="119.6" y="259.8" width="1.7" height="1.7" fill="#f5501e"/><rect x="119.2" y="264.7" width="1.7" height="1.7" fill="#f5642a"/><rect x="120.7" y="269.4" width="1.7" height="1.7" fill="#f5642a"/><rect x="119.7" y="273.9" width="1.7" height="1.7" fill="#f5642a"/><rect x="120.4" y="278.4" width="1.7" height="1.7" fill="#e83424"/><rect x="119.3" y="283.2" width="1.7" height="1.7" fill="#f5501e"/><rect x="121.0" y="292.8" width="1.7" height="1.7" fill="#ff9a1a"/><rect x="120.5" y="297.6" width="1.7" height="1.7" fill="#ff9a1a"/><rect x="120.2" y="306.6" width="1.7" height="1.7" fill="#f9b915"/><rect x="120.3" y="311.2" width="1.7" height="1.7" fill="#ffa51e"/><rect x="119.9" y="315.8" width="1.7" height="1.7" fill="#ffa51e"/><rect x="119.4" y="320.3" width="1.7" height="1.7" fill="#ffa51e"/><rect x="119.8" y="329.9" width="1.7" height="1.7" fill="#f9b915"/><rect x="121.0" y="334.5" width="1.7" height="1.7" fill="#f9b915"/><rect x="120.1" y="358.1" width="1.7" height="1.7" fill="#ffb81a"/><rect x="119.8" y="362.6" width="1.7" height="1.7" fill="#f9b915"/><rect x="120.3" y="390.8" width="1.7" height="1.7" fill="#f9b915"/><rect x="120.1" y="395.3" width="1.7" height="1.7" fill="#f9b915"/><rect x="119.4" y="400.0" width="1.7" height="1.7" fill="#ffa51e"/><rect x="120.5" y="404.6" width="1.7" height="1.7" fill="#ff9a1a"/><rect x="119.1" y="409.3" width="1.7" height="1.7" fill="#f9b915"/><rect x="119.4" y="414.2" width="1.7" height="1.7" fill="#ffa51e"/><rect x="120.5" y="423.7" width="1.7" height="1.7" fill="#ffa51e"/><rect x="120.0" y="428.3" width="1.7" height="1.7" fill="#ff9a1a"/><rect x="120.8" y="437.7" width="1.7" height="1.7" fill="#fcc41e"/><rect x="119.5" y="442.6" width="1.7" height="1.7" fill="#fcc41e"/><rect x="120.5" y="452.1" width="1.7" height="1.7" fill="#ffa51e"/><rect x="120.3" y="456.7" width="1.7" height="1.7" fill="#f9b915"/><rect x="119.0" y="461.3" width="1.7" height="1.7" fill="#ff9a1a"/><rect x="119.0" y="470.8" width="1.7" height="1.7" fill="#ffa51e"/><rect x="119.7" y="475.4" width="1.7" height="1.7" fill="#f9b915"/><rect x="120.6" y="480.4" width="1.7" height="1.7" fill="#f9b915"/><rect x="120.9" y="485.1" width="1.7" height="1.7" fill="#ff9a1a"/><rect x="119.4" y="489.7" width="1.7" height="1.7" fill="#f9b915"/><rect x="120.0" y="494.4" width="1.7" height="1.7" fill="#fcc41e"/><rect x="120.3" y="499.3" width="1.7" height="1.7" fill="#ffb81a"/><rect x="120.1" y="513.2" width="1.7" height="1.7" fill="#ffb81a"/><rect x="119.2" y="518.0" width="1.7" height="1.7" fill="#ffcf36"/><rect x="119.3" y="537.0" width="1.7" height="1.7" fill="#fcc41e"/><rect x="148.2" y="75.7" width="1.7" height="1.7" fill="#ff9416"/><rect x="147.4" y="80.2" width="1.7" height="1.7" fill="#ff8a12"/><rect x="147.2" y="84.6" width="1.7" height="1.7" fill="#f5581e"/><rect x="148.4" y="89.5" width="1.7" height="1.7" fill="#ff9416"/><rect x="148.0" y="94.1" width="1.7" height="1.7" fill="#ff8a12"/><rect x="147.3" y="98.7" width="1.7" height="1.7" fill="#f9701e"/><rect x="146.8" y="103.2" width="1.7" height="1.7" fill="#f9701e"/><rect x="147.4" y="107.8" width="1.7" height="1.7" fill="#f5581e"/><rect x="148.3" y="112.4" width="1.7" height="1.7" fill="#ff9416"/><rect x="147.6" y="121.8" width="1.7" height="1.7" fill="#ff8a12"/><rect x="147.6" y="126.7" width="1.7" height="1.7" fill="#f5581e"/><rect x="147.3" y="135.9" width="1.7" height="1.7" fill="#f9701e"/><rect x="146.7" y="140.8" width="1.7" height="1.7" fill="#f9701e"/><rect x="148.4" y="145.6" width="1.7" height="1.7" fill="#ff8a12"/><rect x="147.0" y="150.1" width="1.7" height="1.7" fill="#f9701e"/><rect x="148.2" y="154.9" width="1.7" height="1.7" fill="#ff9416"/><rect x="146.9" y="159.8" width="1.7" height="1.7" fill="#ff8a12"/><rect x="147.6" y="164.3" width="1.7" height="1.7" fill="#ff9416"/><rect x="147.9" y="169.0" width="1.7" height="1.7" fill="#ff9416"/><rect x="147.1" y="173.7" width="1.7" height="1.7" fill="#ff8a12"/><rect x="147.6" y="178.4" width="1.7" height="1.7" fill="#ff8a12"/><rect x="147.8" y="183.4" width="1.7" height="1.7" fill="#ff9416"/><rect x="147.4" y="188.0" width="1.7" height="1.7" fill="#ff9416"/><rect x="147.4" y="193.0" width="1.7" height="1.7" fill="#f9701e"/><rect x="147.9" y="197.8" width="1.7" height="1.7" fill="#f9701e"/><rect x="147.8" y="202.7" width="1.7" height="1.7" fill="#f5581e"/><rect x="148.2" y="207.7" width="1.7" height="1.7" fill="#f5581e"/><rect x="147.0" y="212.4" width="1.7" height="1.7" fill="#f9701e"/><rect x="147.8" y="217.2" width="1.7" height="1.7" fill="#f9701e"/><rect x="148.0" y="221.6" width="1.7" height="1.7" fill="#ff9416"/><rect x="147.4" y="226.5" width="1.7" height="1.7" fill="#ff8a12"/><rect x="147.6" y="231.4" width="1.7" height="1.7" fill="#f5581e"/><rect x="148.8" y="235.9" width="1.7" height="1.7" fill="#f9701e"/><rect x="147.0" y="240.8" width="1.7" height="1.7" fill="#f9701e"/><rect x="147.4" y="245.6" width="1.7" height="1.7" fill="#ff9416"/><rect x="147.0" y="254.6" width="1.7" height="1.7" fill="#f9701e"/><rect x="147.3" y="263.9" width="1.7" height="1.7" fill="#f5581e"/><rect x="146.6" y="268.7" width="1.7" height="1.7" fill="#f9701e"/><rect x="147.4" y="273.2" width="1.7" height="1.7" fill="#f9701e"/><rect x="147.0" y="277.8" width="1.7" height="1.7" fill="#f5581e"/><rect x="148.2" y="282.6" width="1.7" height="1.7" fill="#f9701e"/><rect x="149.3" y="287.4" width="1.7" height="1.7" fill="#f5581e"/><rect x="148.0" y="292.3" width="1.7" height="1.7" fill="#ffa51e"/><rect x="147.8" y="297.1" width="1.7" height="1.7" fill="#ff9416"/><rect x="148.2" y="301.6" width="1.7" height="1.7" fill="#ff9416"/><rect x="148.0" y="306.2" width="1.7" height="1.7" fill="#ffa51e"/><rect x="147.8" y="310.6" width="1.7" height="1.7" fill="#ff9416"/><rect x="147.5" y="315.2" width="1.7" height="1.7" fill="#ff8a12"/><rect x="147.4" y="320.0" width="1.7" height="1.7" fill="#ff9416"/><rect x="147.7" y="324.6" width="1.7" height="1.7" fill="#ffa51e"/><rect x="147.4" y="329.2" width="1.7" height="1.7" fill="#ff9416"/><rect x="147.2" y="333.8" width="1.7" height="1.7" fill="#ffa51e"/><rect x="148.5" y="338.5" width="1.7" height="1.7" fill="#ff9c1a"/><rect x="148.3" y="343.2" width="1.7" height="1.7" fill="#ff8a12"/><rect x="147.0" y="347.6" width="1.7" height="1.7" fill="#ffa51e"/><rect x="148.2" y="352.6" width="1.7" height="1.7" fill="#ff9c1a"/><rect x="147.9" y="357.4" width="1.7" height="1.7" fill="#ffa51e"/><rect x="147.8" y="362.1" width="1.7" height="1.7" fill="#ff9c1a"/><rect x="148.0" y="372.1" width="1.7" height="1.7" fill="#ff9c1a"/><rect x="146.9" y="377.1" width="1.7" height="1.7" fill="#ff9416"/><rect x="148.2" y="381.9" width="1.7" height="1.7" fill="#ff8a12"/><rect x="147.3" y="386.6" width="1.7" height="1.7" fill="#ff9416"/><rect x="149.0" y="391.0" width="1.7" height="1.7" fill="#ffa51e"/><rect x="147.6" y="400.5" width="1.7" height="1.7" fill="#ff9416"/><rect x="148.5" y="405.2" width="1.7" height="1.7" fill="#ff9c1a"/><rect x="146.6" y="409.7" width="1.7" height="1.7" fill="#ff9c1a"/><rect x="148.3" y="414.5" width="1.7" height="1.7" fill="#ff9c1a"/><rect x="147.6" y="419.3" width="1.7" height="1.7" fill="#ff9c1a"/><rect x="147.4" y="424.0" width="1.7" height="1.7" fill="#ff9416"/><rect x="147.9" y="433.4" width="1.7" height="1.7" fill="#ff9c1a"/><rect x="148.5" y="438.1" width="1.7" height="1.7" fill="#ff8a12"/><rect x="148.3" y="442.6" width="1.7" height="1.7" fill="#ff8a12"/><rect x="148.5" y="447.2" width="1.7" height="1.7" fill="#ff9416"/><rect x="146.5" y="452.1" width="1.7" height="1.7" fill="#ff9c1a"/><rect x="148.0" y="457.0" width="1.7" height="1.7" fill="#ff9c1a"/><rect x="148.2" y="461.6" width="1.7" height="1.7" fill="#ff9c1a"/><rect x="147.8" y="466.2" width="1.7" height="1.7" fill="#ff9416"/><rect x="148.3" y="470.8" width="1.7" height="1.7" fill="#ff8a12"/><rect x="148.1" y="475.6" width="1.7" height="1.7" fill="#ffa51e"/><rect x="147.3" y="480.1" width="1.7" height="1.7" fill="#ff8a12"/><rect x="147.1" y="484.8" width="1.7" height="1.7" fill="#ff9416"/><rect x="147.7" y="489.4" width="1.7" height="1.7" fill="#ffa51e"/><rect x="146.9" y="494.3" width="1.7" height="1.7" fill="#ff9416"/><rect x="147.5" y="499.1" width="1.7" height="1.7" fill="#ffa51e"/><rect x="148.2" y="503.6" width="1.7" height="1.7" fill="#ff9416"/><rect x="147.4" y="508.4" width="1.7" height="1.7" fill="#ff9c1a"/><rect x="148.1" y="512.8" width="1.7" height="1.7" fill="#ffa51e"/><rect x="147.5" y="517.7" width="1.7" height="1.7" fill="#ff9c1a"/><rect x="146.7" y="522.3" width="1.7" height="1.7" fill="#ff9c1a"/><rect x="147.5" y="527.2" width="1.7" height="1.7" fill="#ffa51e"/><rect x="148.2" y="536.9" width="1.7" height="1.7" fill="#ff9c1a"/><rect x="148.0" y="546.2" width="1.7" height="1.7" fill="#ffa51e"/><rect x="147.5" y="550.7" width="1.7" height="1.7" fill="#ff9416"/><rect x="148.0" y="555.2" width="1.7" height="1.7" fill="#ff8a12"/><rect x="148.9" y="560.1" width="1.7" height="1.7" fill="#ff8a12"/><rect x="147.8" y="564.9" width="1.7" height="1.7" fill="#ff9416"/><rect x="148.8" y="569.5" width="1.7" height="1.7" fill="#ff9c1a"/><rect x="147.5" y="574.0" width="1.7" height="1.7" fill="#ff8a12"/><rect x="147.4" y="578.6" width="1.7" height="1.7" fill="#ffa51e"/><rect x="147.7" y="583.6" width="1.7" height="1.7" fill="#ff9c1a"/><rect x="148.0" y="588.6" width="1.7" height="1.7" fill="#ff9c1a"/><rect x="146.9" y="593.2" width="1.7" height="1.7" fill="#ff9c1a"/><rect x="147.0" y="598.2" width="1.7" height="1.7" fill="#ff9c1a"/><rect x="148.0" y="602.6" width="1.7" height="1.7" fill="#ff9416"/><rect x="147.0" y="607.1" width="1.7" height="1.7" fill="#ff9416"/><rect x="148.2" y="611.8" width="1.7" height="1.7" fill="#ff9416"/><rect x="146.6" y="616.5" width="1.7" height="1.7" fill="#ffa51e"/><rect x="174.9" y="74.5" width="1.7" height="1.7" fill="#ffcf36"/><rect x="175.0" y="79.1" width="1.7" height="1.7" fill="#ffb81a"/><rect x="174.7" y="83.8" width="1.7" height="1.7" fill="#ffb81a"/><rect x="175.8" y="88.6" width="1.7" height="1.7" fill="#ffcf36"/><rect x="175.6" y="93.2" width="1.7" height="1.7" fill="#fcc41e"/><rect x="175.5" y="97.7" width="1.7" height="1.7" fill="#f9b915"/><rect x="174.8" y="102.4" width="1.7" height="1.7" fill="#f9b915"/><rect x="175.4" y="112.1" width="1.7" height="1.7" fill="#fcc41e"/><rect x="176.2" y="116.9" width="1.7" height="1.7" fill="#f9b915"/><rect x="174.6" y="121.3" width="1.7" height="1.7" fill="#ffcf36"/><rect x="175.0" y="126.0" width="1.7" height="1.7" fill="#ffcf36"/><rect x="175.3" y="130.9" width="1.7" height="1.7" fill="#f9b915"/><rect x="174.9" y="135.8" width="1.7" height="1.7" fill="#ffcf36"/><rect x="174.2" y="140.3" width="1.7" height="1.7" fill="#ffcf36"/><rect x="174.7" y="145.1" width="1.7" height="1.7" fill="#ffcf36"/><rect x="175.5" y="149.8" width="1.7" height="1.7" fill="#ffcf36"/><rect x="175.2" y="154.2" width="1.7" height="1.7" fill="#ffcf36"/><rect x="174.9" y="159.0" width="1.7" height="1.7" fill="#fcc41e"/><rect x="175.1" y="163.6" width="1.7" height="1.7" fill="#ffcf36"/><rect x="174.5" y="168.6" width="1.7" height="1.7" fill="#f9b915"/><rect x="175.9" y="187.8" width="1.7" height="1.7" fill="#fcc41e"/><rect x="175.0" y="206.6" width="1.7" height="1.7" fill="#f9b915"/><rect x="174.9" y="211.5" width="1.7" height="1.7" fill="#fcc41e"/><rect x="176.5" y="221.1" width="1.7" height="1.7" fill="#fcc41e"/><rect x="175.3" y="225.6" width="1.7" height="1.7" fill="#f9b915"/><rect x="175.1" y="230.6" width="1.7" height="1.7" fill="#fcc41e"/><rect x="175.1" y="235.2" width="1.7" height="1.7" fill="#fcc41e"/><rect x="176.0" y="239.9" width="1.7" height="1.7" fill="#ff9a1a"/><rect x="175.7" y="249.3" width="1.7" height="1.7" fill="#ffa51e"/><rect x="173.9" y="253.7" width="1.7" height="1.7" fill="#fcc41e"/><rect x="174.7" y="258.2" width="1.7" height="1.7" fill="#f9b915"/><rect x="175.6" y="262.7" width="1.7" height="1.7" fill="#ffa51e"/><rect x="175.8" y="272.1" width="1.7" height="1.7" fill="#f9b915"/><rect x="173.9" y="277.0" width="1.7" height="1.7" fill="#fcc41e"/><rect x="175.1" y="281.5" width="1.7" height="1.7" fill="#f9b915"/><rect x="176.3" y="286.5" width="1.7" height="1.7" fill="#fcc41e"/><rect x="175.5" y="290.9" width="1.7" height="1.7" fill="#ffa51e"/><rect x="174.8" y="295.9" width="1.7" height="1.7" fill="#f9b915"/><rect x="175.5" y="305.0" width="1.7" height="1.7" fill="#f9b915"/><rect x="175.0" y="309.7" width="1.7" height="1.7" fill="#ffa51e"/><rect x="174.7" y="314.7" width="1.7" height="1.7" fill="#ffa51e"/><rect x="174.3" y="319.2" width="1.7" height="1.7" fill="#f9b915"/><rect x="175.4" y="323.7" width="1.7" height="1.7" fill="#f9b915"/><rect x="175.1" y="328.5" width="1.7" height="1.7" fill="#f9b915"/><rect x="175.2" y="351.8" width="1.7" height="1.7" fill="#ff9c1a"/><rect x="175.3" y="356.3" width="1.7" height="1.7" fill="#ff9416"/><rect x="175.6" y="361.0" width="1.7" height="1.7" fill="#ffa51e"/><rect x="176.5" y="365.4" width="1.7" height="1.7" fill="#ff9416"/><rect x="173.1" y="370.3" width="1.7" height="1.7" fill="#ffa51e"/><rect x="175.8" y="375.3" width="1.7" height="1.7" fill="#ff9c1a"/><rect x="174.9" y="380.0" width="1.7" height="1.7" fill="#ff9c1a"/><rect x="175.8" y="384.4" width="1.7" height="1.7" fill="#ff8a12"/><rect x="175.1" y="388.9" width="1.7" height="1.7" fill="#ff9416"/><rect x="175.6" y="403.0" width="1.7" height="1.7" fill="#e83424"/><rect x="175.1" y="407.8" width="1.7" height="1.7" fill="#ee4020"/><rect x="175.5" y="412.4" width="1.7" height="1.7" fill="#f5501e"/><rect x="175.1" y="417.4" width="1.7" height="1.7" fill="#f5501e"/><rect x="174.9" y="421.9" width="1.7" height="1.7" fill="#ee4020"/><rect x="175.0" y="426.7" width="1.7" height="1.7" fill="#f5501e"/><rect x="175.7" y="431.2" width="1.7" height="1.7" fill="#e83424"/><rect x="175.5" y="435.7" width="1.7" height="1.7" fill="#f5501e"/><rect x="175.9" y="440.3" width="1.7" height="1.7" fill="#ee4020"/><rect x="175.1" y="444.9" width="1.7" height="1.7" fill="#ee4020"/><rect x="175.3" y="449.9" width="1.7" height="1.7" fill="#f5501e"/><rect x="174.7" y="454.5" width="1.7" height="1.7" fill="#ee4020"/><rect x="175.6" y="459.3" width="1.7" height="1.7" fill="#ee4020"/><rect x="175.3" y="464.1" width="1.7" height="1.7" fill="#ff8a12"/><rect x="175.2" y="468.6" width="1.7" height="1.7" fill="#f5581e"/><rect x="175.4" y="473.5" width="1.7" height="1.7" fill="#ff9416"/><rect x="175.4" y="478.1" width="1.7" height="1.7" fill="#ff9416"/><rect x="175.5" y="482.7" width="1.7" height="1.7" fill="#f5581e"/><rect x="175.6" y="496.8" width="1.7" height="1.7" fill="#f9b915"/><rect x="175.8" y="506.2" width="1.7" height="1.7" fill="#ff9a1a"/><rect x="175.1" y="515.3" width="1.7" height="1.7" fill="#fcc41e"/><rect x="174.8" y="524.7" width="1.7" height="1.7" fill="#fcc41e"/><rect x="174.2" y="529.5" width="1.7" height="1.7" fill="#ff9a1a"/><rect x="175.3" y="533.9" width="1.7" height="1.7" fill="#ff9a1a"/><rect x="175.9" y="538.4" width="1.7" height="1.7" fill="#fcc41e"/><rect x="175.4" y="542.8" width="1.7" height="1.7" fill="#ffa51e"/><rect x="175.6" y="547.6" width="1.7" height="1.7" fill="#fcc41e"/><rect x="175.3" y="552.2" width="1.7" height="1.7" fill="#fcc41e"/><rect x="175.0" y="556.9" width="1.7" height="1.7" fill="#f9b915"/><rect x="176.3" y="561.9" width="1.7" height="1.7" fill="#ff9a1a"/><rect x="175.5" y="571.7" width="1.7" height="1.7" fill="#f9b915"/><rect x="174.4" y="576.6" width="1.7" height="1.7" fill="#ff9a1a"/><rect x="175.4" y="581.2" width="1.7" height="1.7" fill="#f9b915"/><rect x="175.2" y="585.9" width="1.7" height="1.7" fill="#ff9a1a"/><rect x="176.0" y="590.8" width="1.7" height="1.7" fill="#fcc41e"/><rect x="175.6" y="595.4" width="1.7" height="1.7" fill="#ff9a1a"/><rect x="174.9" y="600.0" width="1.7" height="1.7" fill="#ffa51e"/><rect x="174.4" y="604.8" width="1.7" height="1.7" fill="#ff9a1a"/><rect x="175.5" y="609.7" width="1.7" height="1.7" fill="#f9b915"/><rect x="174.2" y="614.7" width="1.7" height="1.7" fill="#ff9a1a"/><rect x="203.4" y="75.4" width="1.7" height="1.7" fill="#e83424"/><rect x="202.5" y="80.0" width="1.7" height="1.7" fill="#f5501e"/><rect x="202.7" y="84.8" width="1.7" height="1.7" fill="#e83424"/><rect x="203.3" y="89.2" width="1.7" height="1.7" fill="#f5501e"/><rect x="203.3" y="93.8" width="1.7" height="1.7" fill="#f5642a"/><rect x="202.6" y="98.8" width="1.7" height="1.7" fill="#f5642a"/><rect x="203.1" y="103.2" width="1.7" height="1.7" fill="#f5501e"/><rect x="202.9" y="108.2" width="1.7" height="1.7" fill="#ee4020"/><rect x="202.6" y="113.0" width="1.7" height="1.7" fill="#f5642a"/><rect x="204.1" y="117.6" width="1.7" height="1.7" fill="#f5501e"/><rect x="203.3" y="126.7" width="1.7" height="1.7" fill="#e83424"/><rect x="202.4" y="131.4" width="1.7" height="1.7" fill="#ee4020"/><rect x="202.3" y="136.3" width="1.7" height="1.7" fill="#202020"/><rect x="203.2" y="141.2" width="1.7" height="1.7" fill="#6040c0"/><rect x="201.1" y="146.1" width="1.7" height="1.7" fill="#6040c0"/><rect x="202.4" y="150.6" width="1.7" height="1.7" fill="#3040d8"/><rect x="203.8" y="155.4" width="1.7" height="1.7" fill="#6040c0"/><rect x="202.7" y="160.2" width="1.7" height="1.7" fill="#3040d8"/><rect x="202.7" y="165.0" width="1.7" height="1.7" fill="#202020"/><rect x="203.0" y="169.5" width="1.7" height="1.7" fill="#3040d8"/><rect x="202.1" y="174.3" width="1.7" height="1.7" fill="#1a1a70"/><rect x="203.1" y="179.3" width="1.7" height="1.7" fill="#1a1a70"/><rect x="202.6" y="183.9" width="1.7" height="1.7" fill="#3040d8"/><rect x="202.2" y="188.3" width="1.7" height="1.7" fill="#1a1a70"/><rect x="203.1" y="192.8" width="1.7" height="1.7" fill="#202020"/><rect x="202.9" y="197.6" width="1.7" height="1.7" fill="#1a1a70"/><rect x="202.2" y="202.6" width="1.7" height="1.7" fill="#5040d8"/><rect x="203.0" y="207.5" width="1.7" height="1.7" fill="#5040d8"/><rect x="203.3" y="212.1" width="1.7" height="1.7" fill="#202020"/><rect x="202.4" y="217.0" width="1.7" height="1.7" fill="#1a1a70"/><rect x="202.7" y="221.5" width="1.7" height="1.7" fill="#5040d8"/><rect x="202.3" y="226.3" width="1.7" height="1.7" fill="#e83050"/><rect x="202.5" y="230.9" width="1.7" height="1.7" fill="#c040d0"/><rect x="203.1" y="235.6" width="1.7" height="1.7" fill="#e83050"/><rect x="201.9" y="240.4" width="1.7" height="1.7" fill="#ff9416"/><rect x="202.9" y="245.3" width="1.7" height="1.7" fill="#ff8a12"/><rect x="203.7" y="249.9" width="1.7" height="1.7" fill="#ff9416"/><rect x="202.6" y="254.6" width="1.7" height="1.7" fill="#ff8a12"/><rect x="202.1" y="259.3" width="1.7" height="1.7" fill="#ff9416"/><rect x="202.4" y="263.7" width="1.7" height="1.7" fill="#ff9416"/><rect x="203.0" y="268.3" width="1.7" height="1.7" fill="#ff8a12"/><rect x="203.4" y="273.1" width="1.7" height="1.7" fill="#ff9416"/><rect x="203.2" y="277.9" width="1.7" height="1.7" fill="#ffa51e"/><rect x="202.4" y="282.7" width="1.7" height="1.7" fill="#ffa51e"/><rect x="202.6" y="287.3" width="1.7" height="1.7" fill="#ff9c1a"/><rect x="203.1" y="291.8" width="1.7" height="1.7" fill="#ffa51e"/><rect x="203.8" y="296.6" width="1.7" height="1.7" fill="#ffa51e"/><rect x="203.0" y="301.4" width="1.7" height="1.7" fill="#ff8a12"/><rect x="202.3" y="306.3" width="1.7" height="1.7" fill="#ff9416"/><rect x="202.9" y="311.1" width="1.7" height="1.7" fill="#ff9c1a"/><rect x="203.6" y="315.8" width="1.7" height="1.7" fill="#ffa51e"/><rect x="202.9" y="320.4" width="1.7" height="1.7" fill="#ff9c1a"/><rect x="203.1" y="324.8" width="1.7" height="1.7" fill="#ff8a12"/><rect x="203.3" y="329.4" width="1.7" height="1.7" fill="#ffa51e"/><rect x="202.4" y="334.2" width="1.7" height="1.7" fill="#ff9416"/><rect x="202.8" y="338.7" width="1.7" height="1.7" fill="#ff8a12"/><rect x="203.6" y="343.2" width="1.7" height="1.7" fill="#ff9c1a"/><rect x="202.5" y="348.0" width="1.7" height="1.7" fill="#ff9416"/><rect x="202.7" y="352.5" width="1.7" height="1.7" fill="#ffa51e"/><rect x="202.5" y="357.0" width="1.7" height="1.7" fill="#ffa51e"/><rect x="203.0" y="361.6" width="1.7" height="1.7" fill="#ffa51e"/><rect x="203.5" y="370.9" width="1.7" height="1.7" fill="#ffa51e"/><rect x="202.7" y="375.4" width="1.7" height="1.7" fill="#ffa51e"/><rect x="202.7" y="380.3" width="1.7" height="1.7" fill="#ff8a12"/><rect x="202.4" y="390.0" width="1.7" height="1.7" fill="#ff8a12"/><rect x="203.6" y="394.9" width="1.7" height="1.7" fill="#ff8a12"/><rect x="202.1" y="399.6" width="1.7" height="1.7" fill="#ff9c1a"/><rect x="202.9" y="404.4" width="1.7" height="1.7" fill="#ff9c1a"/><rect x="201.9" y="408.9" width="1.7" height="1.7" fill="#ff9416"/><rect x="204.2" y="413.3" width="1.7" height="1.7" fill="#f5501e"/><rect x="202.7" y="418.3" width="1.7" height="1.7" fill="#e83424"/><rect x="202.8" y="423.1" width="1.7" height="1.7" fill="#ee4020"/><rect x="203.3" y="427.9" width="1.7" height="1.7" fill="#f5501e"/><rect x="202.9" y="432.5" width="1.7" height="1.7" fill="#f5642a"/><rect x="202.6" y="436.9" width="1.7" height="1.7" fill="#e83424"/><rect x="203.1" y="441.4" width="1.7" height="1.7" fill="#ee4020"/><rect x="201.8" y="446.2" width="1.7" height="1.7" fill="#ee4020"/><rect x="202.6" y="451.0" width="1.7" height="1.7" fill="#ee4020"/><rect x="202.8" y="455.9" width="1.7" height="1.7" fill="#e83424"/><rect x="203.5" y="460.5" width="1.7" height="1.7" fill="#ee4020"/><rect x="202.6" y="464.9" width="1.7" height="1.7" fill="#e83424"/><rect x="202.6" y="474.2" width="1.7" height="1.7" fill="#f5642a"/><rect x="202.3" y="479.1" width="1.7" height="1.7" fill="#e83424"/><rect x="203.3" y="483.5" width="1.7" height="1.7" fill="#f5642a"/><rect x="202.5" y="488.2" width="1.7" height="1.7" fill="#f5642a"/><rect x="203.9" y="493.2" width="1.7" height="1.7" fill="#f5501e"/><rect x="202.3" y="497.6" width="1.7" height="1.7" fill="#f5501e"/><rect x="203.4" y="507.3" width="1.7" height="1.7" fill="#fcc41e"/><rect x="201.7" y="512.0" width="1.7" height="1.7" fill="#ffb81a"/><rect x="203.2" y="516.5" width="1.7" height="1.7" fill="#ffcf36"/><rect x="202.7" y="526.3" width="1.7" height="1.7" fill="#fcc41e"/><rect x="201.7" y="530.8" width="1.7" height="1.7" fill="#f9b915"/><rect x="203.5" y="535.8" width="1.7" height="1.7" fill="#ffcf36"/><rect x="203.4" y="544.9" width="1.7" height="1.7" fill="#ffcf36"/><rect x="203.2" y="553.8" width="1.7" height="1.7" fill="#ffb81a"/><rect x="203.0" y="568.3" width="1.7" height="1.7" fill="#fcc41e"/><rect x="202.1" y="577.5" width="1.7" height="1.7" fill="#ffcf36"/><rect x="203.6" y="582.1" width="1.7" height="1.7" fill="#ffb81a"/><rect x="203.6" y="591.4" width="1.7" height="1.7" fill="#fcc41e"/><rect x="202.5" y="595.9" width="1.7" height="1.7" fill="#ffb81a"/><rect x="202.2" y="610.1" width="1.7" height="1.7" fill="#ffb81a"/><rect x="203.5" y="614.5" width="1.7" height="1.7" fill="#ffb81a"/><rect x="230.1" y="74.3" width="1.7" height="1.7" fill="#f5581e"/><rect x="231.1" y="83.7" width="1.7" height="1.7" fill="#f9701e"/><rect x="230.6" y="88.4" width="1.7" height="1.7" fill="#f9701e"/><rect x="229.8" y="93.1" width="1.7" height="1.7" fill="#ff8a12"/><rect x="230.9" y="97.5" width="1.7" height="1.7" fill="#ff9416"/><rect x="230.6" y="102.1" width="1.7" height="1.7" fill="#ff9416"/><rect x="230.5" y="106.9" width="1.7" height="1.7" fill="#ff8a12"/><rect x="230.4" y="111.4" width="1.7" height="1.7" fill="#ff8a12"/><rect x="230.3" y="116.3" width="1.7" height="1.7" fill="#ff8a12"/><rect x="230.3" y="120.8" width="1.7" height="1.7" fill="#ff8a12"/><rect x="230.8" y="125.6" width="1.7" height="1.7" fill="#ff9416"/><rect x="231.1" y="130.1" width="1.7" height="1.7" fill="#f9701e"/><rect x="230.7" y="134.5" width="1.7" height="1.7" fill="#e83050"/><rect x="230.0" y="139.3" width="1.7" height="1.7" fill="#e83050"/><rect x="230.7" y="143.7" width="1.7" height="1.7" fill="#a050e0"/><rect x="230.5" y="148.6" width="1.7" height="1.7" fill="#6040c0"/><rect x="230.3" y="153.5" width="1.7" height="1.7" fill="#1a1a70"/><rect x="231.3" y="158.2" width="1.7" height="1.7" fill="#5040d8"/><rect x="230.3" y="163.1" width="1.7" height="1.7" fill="#5040d8"/><rect x="230.2" y="167.7" width="1.7" height="1.7" fill="#3040d8"/><rect x="231.1" y="177.0" width="1.7" height="1.7" fill="#3040d8"/><rect x="229.8" y="181.8" width="1.7" height="1.7" fill="#202020"/><rect x="229.4" y="186.7" width="1.7" height="1.7" fill="#6040c0"/><rect x="229.7" y="191.6" width="1.7" height="1.7" fill="#1a1a70"/><rect x="230.8" y="196.5" width="1.7" height="1.7" fill="#202020"/><rect x="230.5" y="201.2" width="1.7" height="1.7" fill="#3040d8"/><rect x="230.9" y="205.9" width="1.7" height="1.7" fill="#202020"/><rect x="231.9" y="210.4" width="1.7" height="1.7" fill="#3040d8"/><rect x="230.4" y="215.0" width="1.7" height="1.7" fill="#5040d8"/><rect x="230.2" y="219.5" width="1.7" height="1.7" fill="#5040d8"/><rect x="230.2" y="224.3" width="1.7" height="1.7" fill="#5040d8"/><rect x="229.8" y="229.0" width="1.7" height="1.7" fill="#3040d8"/><rect x="230.6" y="233.4" width="1.7" height="1.7" fill="#202020"/><rect x="231.2" y="243.3" width="1.7" height="1.7" fill="#f5642a"/><rect x="230.4" y="248.1" width="1.7" height="1.7" fill="#e83424"/><rect x="229.6" y="253.0" width="1.7" height="1.7" fill="#e83424"/><rect x="230.3" y="257.5" width="1.7" height="1.7" fill="#e83424"/><rect x="230.0" y="262.2" width="1.7" height="1.7" fill="#f5642a"/><rect x="230.7" y="267.2" width="1.7" height="1.7" fill="#ee4020"/><rect x="230.6" y="272.0" width="1.7" height="1.7" fill="#f5642a"/><rect x="230.3" y="276.7" width="1.7" height="1.7" fill="#f5501e"/><rect x="230.7" y="281.4" width="1.7" height="1.7" fill="#e83424"/><rect x="230.4" y="286.3" width="1.7" height="1.7" fill="#f5642a"/><rect x="230.7" y="291.3" width="1.7" height="1.7" fill="#f5642a"/><rect x="229.6" y="296.2" width="1.7" height="1.7" fill="#f5642a"/><rect x="230.0" y="300.8" width="1.7" height="1.7" fill="#ee4020"/><rect x="230.1" y="305.5" width="1.7" height="1.7" fill="#e83424"/><rect x="230.6" y="310.2" width="1.7" height="1.7" fill="#e83424"/><rect x="231.7" y="314.8" width="1.7" height="1.7" fill="#f5642a"/><rect x="231.3" y="319.2" width="1.7" height="1.7" fill="#ee4020"/><rect x="231.1" y="324.1" width="1.7" height="1.7" fill="#ee4020"/><rect x="230.2" y="328.9" width="1.7" height="1.7" fill="#f5501e"/><rect x="230.3" y="333.9" width="1.7" height="1.7" fill="#ffa51e"/><rect x="230.7" y="338.6" width="1.7" height="1.7" fill="#fcc41e"/><rect x="230.1" y="343.3" width="1.7" height="1.7" fill="#f9b915"/><rect x="230.7" y="352.8" width="1.7" height="1.7" fill="#ffa51e"/><rect x="231.3" y="357.5" width="1.7" height="1.7" fill="#fcc41e"/><rect x="231.4" y="362.2" width="1.7" height="1.7" fill="#f9b915"/><rect x="231.8" y="366.9" width="1.7" height="1.7" fill="#f9b915"/><rect x="230.9" y="371.7" width="1.7" height="1.7" fill="#fcc41e"/><rect x="230.2" y="376.2" width="1.7" height="1.7" fill="#ffa51e"/><rect x="230.0" y="385.6" width="1.7" height="1.7" fill="#f9b915"/><rect x="230.4" y="390.5" width="1.7" height="1.7" fill="#ffa51e"/><rect x="230.4" y="395.5" width="1.7" height="1.7" fill="#f9b915"/><rect x="231.9" y="399.9" width="1.7" height="1.7" fill="#ffa51e"/><rect x="229.9" y="404.4" width="1.7" height="1.7" fill="#f9b915"/><rect x="230.4" y="409.0" width="1.7" height="1.7" fill="#f9b915"/><rect x="230.8" y="413.8" width="1.7" height="1.7" fill="#e83050"/><rect x="230.1" y="423.3" width="1.7" height="1.7" fill="#e04090"/><rect x="230.5" y="428.2" width="1.7" height="1.7" fill="#e83050"/><rect x="231.2" y="432.8" width="1.7" height="1.7" fill="#e04090"/><rect x="231.9" y="437.3" width="1.7" height="1.7" fill="#e83050"/><rect x="230.1" y="441.9" width="1.7" height="1.7" fill="#a050e0"/><rect x="230.9" y="446.4" width="1.7" height="1.7" fill="#c040c0"/><rect x="230.8" y="451.0" width="1.7" height="1.7" fill="#5040d8"/><rect x="229.7" y="455.6" width="1.7" height="1.7" fill="#5040d8"/><rect x="230.9" y="460.3" width="1.7" height="1.7" fill="#5040d8"/><rect x="230.5" y="465.0" width="1.7" height="1.7" fill="#a040e0"/><rect x="230.1" y="470.0" width="1.7" height="1.7" fill="#c040c0"/><rect x="230.0" y="474.6" width="1.7" height="1.7" fill="#5040d8"/><rect x="230.2" y="489.1" width="1.7" height="1.7" fill="#2a2a90"/><rect x="230.6" y="494.0" width="1.7" height="1.7" fill="#a040e0"/><rect x="231.3" y="498.4" width="1.7" height="1.7" fill="#2a2a90"/><rect x="231.0" y="502.8" width="1.7" height="1.7" fill="#2a2a90"/><rect x="230.4" y="554.1" width="1.7" height="1.7" fill="#f9b915"/><rect x="230.6" y="582.6" width="1.7" height="1.7" fill="#f9b915"/><rect x="257.7" y="75.9" width="1.7" height="1.7" fill="#ff8a12"/><rect x="258.8" y="80.6" width="1.7" height="1.7" fill="#ff8a12"/><rect x="258.7" y="85.2" width="1.7" height="1.7" fill="#ff8a12"/><rect x="258.4" y="90.0" width="1.7" height="1.7" fill="#ff9416"/><rect x="258.7" y="99.3" width="1.7" height="1.7" fill="#ff9416"/><rect x="259.0" y="103.8" width="1.7" height="1.7" fill="#ff9416"/><rect x="258.4" y="108.7" width="1.7" height="1.7" fill="#ff8a12"/><rect x="258.4" y="113.7" width="1.7" height="1.7" fill="#ff9c1a"/><rect x="257.9" y="118.4" width="1.7" height="1.7" fill="#ffa51e"/><rect x="258.5" y="123.0" width="1.7" height="1.7" fill="#ff9416"/><rect x="256.8" y="127.9" width="1.7" height="1.7" fill="#ffa51e"/><rect x="258.1" y="132.9" width="1.7" height="1.7" fill="#ff8a12"/><rect x="258.1" y="137.3" width="1.7" height="1.7" fill="#ff9c1a"/><rect x="258.3" y="142.3" width="1.7" height="1.7" fill="#e83424"/><rect x="258.0" y="147.2" width="1.7" height="1.7" fill="#f5642a"/><rect x="258.7" y="152.0" width="1.7" height="1.7" fill="#ee4020"/><rect x="257.8" y="156.6" width="1.7" height="1.7" fill="#e83424"/><rect x="258.7" y="161.1" width="1.7" height="1.7" fill="#3040d8"/><rect x="257.9" y="165.7" width="1.7" height="1.7" fill="#5040d8"/><rect x="258.2" y="170.1" width="1.7" height="1.7" fill="#3040d8"/><rect x="258.1" y="174.8" width="1.7" height="1.7" fill="#5040d8"/><rect x="259.2" y="184.5" width="1.7" height="1.7" fill="#5040d8"/><rect x="258.5" y="189.0" width="1.7" height="1.7" fill="#c040c0"/><rect x="258.5" y="193.5" width="1.7" height="1.7" fill="#5040d8"/><rect x="258.6" y="198.0" width="1.7" height="1.7" fill="#3040d8"/><rect x="257.7" y="207.4" width="1.7" height="1.7" fill="#3040d8"/><rect x="258.5" y="212.2" width="1.7" height="1.7" fill="#2a2a90"/><rect x="258.3" y="216.8" width="1.7" height="1.7" fill="#3040d8"/><rect x="258.1" y="221.7" width="1.7" height="1.7" fill="#2a2a90"/><rect x="258.6" y="226.4" width="1.7" height="1.7" fill="#c040c0"/><rect x="257.6" y="231.2" width="1.7" height="1.7" fill="#5040d8"/><rect x="258.2" y="236.0" width="1.7" height="1.7" fill="#5040d8"/><rect x="258.4" y="240.5" width="1.7" height="1.7" fill="#ff9c1a"/><rect x="257.5" y="245.1" width="1.7" height="1.7" fill="#ff8a12"/><rect x="258.3" y="249.5" width="1.7" height="1.7" fill="#ff9416"/><rect x="257.5" y="254.0" width="1.7" height="1.7" fill="#f5642a"/><rect x="258.8" y="258.7" width="1.7" height="1.7" fill="#e83424"/><rect x="257.2" y="263.5" width="1.7" height="1.7" fill="#f5501e"/><rect x="257.5" y="268.4" width="1.7" height="1.7" fill="#f5501e"/><rect x="258.0" y="273.1" width="1.7" height="1.7" fill="#f5501e"/><rect x="257.9" y="278.1" width="1.7" height="1.7" fill="#ee4020"/><rect x="258.1" y="282.6" width="1.7" height="1.7" fill="#ee4020"/><rect x="258.1" y="287.0" width="1.7" height="1.7" fill="#f5642a"/><rect x="257.0" y="291.9" width="1.7" height="1.7" fill="#ee4020"/><rect x="258.8" y="296.8" width="1.7" height="1.7" fill="#f5501e"/><rect x="257.9" y="301.4" width="1.7" height="1.7" fill="#e83424"/><rect x="258.4" y="305.9" width="1.7" height="1.7" fill="#ee4020"/><rect x="258.1" y="310.4" width="1.7" height="1.7" fill="#f5501e"/><rect x="257.5" y="314.9" width="1.7" height="1.7" fill="#e83424"/><rect x="258.1" y="324.6" width="1.7" height="1.7" fill="#e83424"/><rect x="258.7" y="329.4" width="1.7" height="1.7" fill="#f5642a"/><rect x="257.8" y="334.2" width="1.7" height="1.7" fill="#ff9c1a"/><rect x="258.4" y="348.7" width="1.7" height="1.7" fill="#ff9c1a"/><rect x="258.3" y="353.6" width="1.7" height="1.7" fill="#ff9c1a"/><rect x="258.8" y="358.3" width="1.7" height="1.7" fill="#ff8a12"/><rect x="257.8" y="363.1" width="1.7" height="1.7" fill="#ffa51e"/><rect x="257.9" y="368.1" width="1.7" height="1.7" fill="#ff8a12"/><rect x="257.3" y="377.1" width="1.7" height="1.7" fill="#ff9c1a"/><rect x="258.5" y="387.0" width="1.7" height="1.7" fill="#ff9c1a"/><rect x="257.5" y="396.8" width="1.7" height="1.7" fill="#ff9416"/><rect x="257.0" y="401.2" width="1.7" height="1.7" fill="#ff9416"/><rect x="258.3" y="406.1" width="1.7" height="1.7" fill="#ffa51e"/><rect x="258.0" y="410.9" width="1.7" height="1.7" fill="#e83050"/><rect x="258.0" y="415.8" width="1.7" height="1.7" fill="#e83050"/><rect x="257.2" y="420.7" width="1.7" height="1.7" fill="#c040d0"/><rect x="258.5" y="430.2" width="1.7" height="1.7" fill="#e04090"/><rect x="257.8" y="434.7" width="1.7" height="1.7" fill="#c040d0"/><rect x="257.0" y="439.5" width="1.7" height="1.7" fill="#e04090"/><rect x="257.9" y="444.3" width="1.7" height="1.7" fill="#c040d0"/><rect x="258.6" y="453.9" width="1.7" height="1.7" fill="#c040d0"/><rect x="258.7" y="458.7" width="1.7" height="1.7" fill="#e83050"/><rect x="256.9" y="463.3" width="1.7" height="1.7" fill="#e04090"/><rect x="258.1" y="468.3" width="1.7" height="1.7" fill="#a050e0"/><rect x="258.2" y="477.8" width="1.7" height="1.7" fill="#e04090"/><rect x="258.1" y="482.5" width="1.7" height="1.7" fill="#a050e0"/><rect x="258.2" y="487.4" width="1.7" height="1.7" fill="#e83050"/><rect x="258.7" y="492.0" width="1.7" height="1.7" fill="#e83050"/><rect x="257.7" y="496.8" width="1.7" height="1.7" fill="#e83050"/><rect x="257.6" y="501.5" width="1.7" height="1.7" fill="#a050e0"/><rect x="257.6" y="506.0" width="1.7" height="1.7" fill="#ffa51e"/><rect x="257.6" y="510.6" width="1.7" height="1.7" fill="#ffa51e"/><rect x="259.1" y="515.5" width="1.7" height="1.7" fill="#ff9416"/><rect x="258.5" y="520.1" width="1.7" height="1.7" fill="#ff8a12"/><rect x="257.3" y="525.0" width="1.7" height="1.7" fill="#ff9c1a"/><rect x="259.0" y="529.6" width="1.7" height="1.7" fill="#ff8a12"/><rect x="258.8" y="534.5" width="1.7" height="1.7" fill="#ff9416"/><rect x="258.8" y="539.3" width="1.7" height="1.7" fill="#ffa51e"/><rect x="258.0" y="543.7" width="1.7" height="1.7" fill="#ff9c1a"/><rect x="258.4" y="548.5" width="1.7" height="1.7" fill="#ff9416"/><rect x="258.4" y="553.3" width="1.7" height="1.7" fill="#ff8a12"/><rect x="258.4" y="567.2" width="1.7" height="1.7" fill="#ff8a12"/><rect x="258.3" y="571.8" width="1.7" height="1.7" fill="#ff9c1a"/><rect x="258.7" y="576.7" width="1.7" height="1.7" fill="#ff9416"/><rect x="257.4" y="581.6" width="1.7" height="1.7" fill="#ff9416"/><rect x="256.9" y="586.4" width="1.7" height="1.7" fill="#ff9c1a"/><rect x="258.0" y="591.0" width="1.7" height="1.7" fill="#ff9416"/><rect x="257.7" y="595.6" width="1.7" height="1.7" fill="#ffa51e"/><rect x="257.9" y="600.5" width="1.7" height="1.7" fill="#ffa51e"/><rect x="257.9" y="605.1" width="1.7" height="1.7" fill="#ff9c1a"/><rect x="258.4" y="609.6" width="1.7" height="1.7" fill="#ff9416"/><rect x="258.9" y="614.0" width="1.7" height="1.7" fill="#ff9416"/><rect x="286.0" y="74.4" width="1.7" height="1.7" fill="#f9b915"/><rect x="286.2" y="78.8" width="1.7" height="1.7" fill="#ffb81a"/><rect x="286.4" y="88.0" width="1.7" height="1.7" fill="#ffb81a"/><rect x="284.9" y="92.5" width="1.7" height="1.7" fill="#fcc41e"/><rect x="285.1" y="97.0" width="1.7" height="1.7" fill="#ffcf36"/><rect x="285.8" y="101.8" width="1.7" height="1.7" fill="#f9b915"/><rect x="285.4" y="106.5" width="1.7" height="1.7" fill="#fcc41e"/><rect x="286.3" y="111.5" width="1.7" height="1.7" fill="#f9b915"/><rect x="286.0" y="115.9" width="1.7" height="1.7" fill="#fcc41e"/><rect x="285.9" y="134.2" width="1.7" height="1.7" fill="#f5581e"/><rect x="286.3" y="138.7" width="1.7" height="1.7" fill="#f5581e"/><rect x="284.9" y="143.3" width="1.7" height="1.7" fill="#f5581e"/><rect x="285.3" y="147.7" width="1.7" height="1.7" fill="#f9701e"/><rect x="286.0" y="157.4" width="1.7" height="1.7" fill="#f5581e"/><rect x="286.4" y="166.6" width="1.7" height="1.7" fill="#ff8a12"/><rect x="285.4" y="171.3" width="1.7" height="1.7" fill="#e83050"/><rect x="285.4" y="176.3" width="1.7" height="1.7" fill="#c040d0"/><rect x="286.0" y="185.7" width="1.7" height="1.7" fill="#e83050"/><rect x="286.0" y="194.7" width="1.7" height="1.7" fill="#c040d0"/><rect x="286.1" y="199.5" width="1.7" height="1.7" fill="#e04090"/><rect x="284.8" y="204.2" width="1.7" height="1.7" fill="#e83050"/><rect x="286.4" y="208.9" width="1.7" height="1.7" fill="#e83050"/><rect x="285.2" y="213.9" width="1.7" height="1.7" fill="#e83050"/><rect x="285.9" y="218.8" width="1.7" height="1.7" fill="#c040d0"/><rect x="286.3" y="223.4" width="1.7" height="1.7" fill="#e83050"/><rect x="284.8" y="228.4" width="1.7" height="1.7" fill="#a050e0"/><rect x="286.3" y="233.3" width="1.7" height="1.7" fill="#a050e0"/><rect x="287.0" y="237.9" width="1.7" height="1.7" fill="#e04090"/><rect x="285.7" y="242.6" width="1.7" height="1.7" fill="#ffa51e"/><rect x="284.9" y="247.3" width="1.7" height="1.7" fill="#ff9c1a"/><rect x="286.3" y="252.2" width="1.7" height="1.7" fill="#ff9416"/><rect x="286.2" y="261.5" width="1.7" height="1.7" fill="#ff9c1a"/><rect x="285.1" y="266.0" width="1.7" height="1.7" fill="#ff9416"/><rect x="286.0" y="270.5" width="1.7" height="1.7" fill="#ff9416"/><rect x="285.9" y="275.2" width="1.7" height="1.7" fill="#ffa51e"/><rect x="286.5" y="280.2" width="1.7" height="1.7" fill="#ff9c1a"/><rect x="285.6" y="284.6" width="1.7" height="1.7" fill="#ff9c1a"/><rect x="286.5" y="294.2" width="1.7" height="1.7" fill="#ff9416"/><rect x="286.0" y="299.1" width="1.7" height="1.7" fill="#ff9416"/><rect x="286.8" y="303.7" width="1.7" height="1.7" fill="#ff9416"/><rect x="286.0" y="308.2" width="1.7" height="1.7" fill="#ffa51e"/><rect x="286.6" y="312.7" width="1.7" height="1.7" fill="#ffa51e"/><rect x="285.3" y="317.5" width="1.7" height="1.7" fill="#ffa51e"/><rect x="286.4" y="322.4" width="1.7" height="1.7" fill="#ffa51e"/><rect x="285.2" y="326.9" width="1.7" height="1.7" fill="#ff9c1a"/><rect x="285.7" y="331.5" width="1.7" height="1.7" fill="#ff9c1a"/><rect x="286.1" y="336.2" width="1.7" height="1.7" fill="#fcc41e"/><rect x="286.4" y="340.7" width="1.7" height="1.7" fill="#f9b915"/><rect x="286.5" y="349.6" width="1.7" height="1.7" fill="#ffa51e"/><rect x="285.6" y="359.1" width="1.7" height="1.7" fill="#f9b915"/><rect x="286.3" y="363.7" width="1.7" height="1.7" fill="#ffa51e"/><rect x="286.3" y="368.5" width="1.7" height="1.7" fill="#ff9a1a"/><rect x="285.9" y="373.0" width="1.7" height="1.7" fill="#f9b915"/><rect x="285.0" y="377.7" width="1.7" height="1.7" fill="#ffa51e"/><rect x="285.5" y="382.3" width="1.7" height="1.7" fill="#f9b915"/><rect x="285.2" y="391.8" width="1.7" height="1.7" fill="#ffa51e"/><rect x="285.7" y="396.7" width="1.7" height="1.7" fill="#ffa51e"/><rect x="286.6" y="401.6" width="1.7" height="1.7" fill="#ffa51e"/><rect x="285.8" y="406.3" width="1.7" height="1.7" fill="#ff9a1a"/><rect x="285.1" y="410.9" width="1.7" height="1.7" fill="#e83424"/><rect x="285.8" y="415.5" width="1.7" height="1.7" fill="#f5642a"/><rect x="285.9" y="420.3" width="1.7" height="1.7" fill="#f5642a"/><rect x="285.4" y="425.1" width="1.7" height="1.7" fill="#e83424"/><rect x="285.1" y="429.8" width="1.7" height="1.7" fill="#f5642a"/><rect x="285.8" y="434.5" width="1.7" height="1.7" fill="#f5501e"/><rect x="285.8" y="439.0" width="1.7" height="1.7" fill="#e83424"/><rect x="284.7" y="443.9" width="1.7" height="1.7" fill="#ee4020"/><rect x="285.0" y="448.6" width="1.7" height="1.7" fill="#f5642a"/><rect x="285.6" y="453.1" width="1.7" height="1.7" fill="#f5501e"/><rect x="285.3" y="462.4" width="1.7" height="1.7" fill="#e83424"/><rect x="285.8" y="466.8" width="1.7" height="1.7" fill="#e83424"/><rect x="286.0" y="471.3" width="1.7" height="1.7" fill="#ee4020"/><rect x="285.8" y="480.7" width="1.7" height="1.7" fill="#ee4020"/><rect x="285.5" y="485.7" width="1.7" height="1.7" fill="#f5501e"/><rect x="286.1" y="495.3" width="1.7" height="1.7" fill="#ee4020"/><rect x="284.8" y="504.7" width="1.7" height="1.7" fill="#f5501e"/><rect x="285.5" y="509.6" width="1.7" height="1.7" fill="#ffcf36"/><rect x="285.9" y="514.2" width="1.7" height="1.7" fill="#ffb81a"/><rect x="286.4" y="566.6" width="1.7" height="1.7" fill="#ffb81a"/><rect x="285.9" y="576.2" width="1.7" height="1.7" fill="#fcc41e"/><rect x="285.8" y="591.1" width="1.7" height="1.7" fill="#ffb81a"/><rect x="286.0" y="595.5" width="1.7" height="1.7" fill="#ffcf36"/><rect x="285.8" y="609.5" width="1.7" height="1.7" fill="#fcc41e"/><rect x="285.4" y="614.3" width="1.7" height="1.7" fill="#fcc41e"/><rect x="313.9" y="74.7" width="1.7" height="1.7" fill="#f9701e"/><rect x="313.3" y="79.4" width="1.7" height="1.7" fill="#ff8a12"/><rect x="314.2" y="84.2" width="1.7" height="1.7" fill="#f5581e"/><rect x="313.6" y="88.9" width="1.7" height="1.7" fill="#f5581e"/><rect x="314.3" y="103.0" width="1.7" height="1.7" fill="#f9701e"/><rect x="314.5" y="107.6" width="1.7" height="1.7" fill="#ff8a12"/><rect x="313.4" y="112.0" width="1.7" height="1.7" fill="#f9701e"/><rect x="313.0" y="116.9" width="1.7" height="1.7" fill="#ff9416"/><rect x="313.2" y="126.5" width="1.7" height="1.7" fill="#f9701e"/><rect x="313.5" y="131.3" width="1.7" height="1.7" fill="#ff8a12"/><rect x="313.0" y="136.3" width="1.7" height="1.7" fill="#f9701e"/><rect x="313.2" y="140.8" width="1.7" height="1.7" fill="#ff9416"/><rect x="314.7" y="145.7" width="1.7" height="1.7" fill="#ff9416"/><rect x="313.9" y="150.3" width="1.7" height="1.7" fill="#ff9416"/><rect x="313.4" y="159.9" width="1.7" height="1.7" fill="#f5642a"/><rect x="312.9" y="164.8" width="1.7" height="1.7" fill="#f5642a"/><rect x="314.2" y="169.5" width="1.7" height="1.7" fill="#6040c0"/><rect x="313.5" y="174.1" width="1.7" height="1.7" fill="#202020"/><rect x="314.2" y="178.9" width="1.7" height="1.7" fill="#6040c0"/><rect x="314.0" y="183.8" width="1.7" height="1.7" fill="#5040d8"/><rect x="313.8" y="188.6" width="1.7" height="1.7" fill="#6040c0"/><rect x="313.9" y="193.3" width="1.7" height="1.7" fill="#3040d8"/><rect x="314.1" y="197.9" width="1.7" height="1.7" fill="#3040d8"/><rect x="313.2" y="202.4" width="1.7" height="1.7" fill="#202020"/><rect x="314.3" y="207.2" width="1.7" height="1.7" fill="#202020"/><rect x="313.6" y="211.7" width="1.7" height="1.7" fill="#1a1a70"/><rect x="312.5" y="216.3" width="1.7" height="1.7" fill="#6040c0"/><rect x="313.5" y="221.1" width="1.7" height="1.7" fill="#1a1a70"/><rect x="313.6" y="225.7" width="1.7" height="1.7" fill="#202020"/><rect x="312.7" y="230.3" width="1.7" height="1.7" fill="#202020"/><rect x="313.1" y="235.0" width="1.7" height="1.7" fill="#5040d8"/><rect x="313.2" y="244.8" width="1.7" height="1.7" fill="#1a1a70"/><rect x="312.8" y="249.6" width="1.7" height="1.7" fill="#f5642a"/><rect x="312.7" y="254.1" width="1.7" height="1.7" fill="#ee4020"/><rect x="313.2" y="259.1" width="1.7" height="1.7" fill="#f5501e"/><rect x="313.2" y="264.0" width="1.7" height="1.7" fill="#ff9416"/><rect x="314.0" y="273.2" width="1.7" height="1.7" fill="#ff9416"/><rect x="313.2" y="277.8" width="1.7" height="1.7" fill="#ffa51e"/><rect x="313.1" y="282.5" width="1.7" height="1.7" fill="#ff9416"/><rect x="313.3" y="287.1" width="1.7" height="1.7" fill="#ff8a12"/><rect x="314.1" y="296.0" width="1.7" height="1.7" fill="#ff9c1a"/><rect x="313.9" y="300.8" width="1.7" height="1.7" fill="#ff8a12"/><rect x="313.3" y="310.6" width="1.7" height="1.7" fill="#ffa51e"/><rect x="313.3" y="315.5" width="1.7" height="1.7" fill="#ffa51e"/><rect x="313.2" y="325.1" width="1.7" height="1.7" fill="#ff9416"/><rect x="314.1" y="329.8" width="1.7" height="1.7" fill="#ff8a12"/><rect x="313.7" y="334.5" width="1.7" height="1.7" fill="#ff8a12"/><rect x="314.0" y="344.1" width="1.7" height="1.7" fill="#f9701e"/><rect x="313.2" y="349.0" width="1.7" height="1.7" fill="#f9701e"/><rect x="313.4" y="353.9" width="1.7" height="1.7" fill="#ff9416"/><rect x="314.1" y="358.3" width="1.7" height="1.7" fill="#ff9416"/><rect x="313.5" y="362.8" width="1.7" height="1.7" fill="#ff9416"/><rect x="313.5" y="367.7" width="1.7" height="1.7" fill="#f9701e"/><rect x="313.2" y="372.4" width="1.7" height="1.7" fill="#f5581e"/><rect x="314.6" y="377.3" width="1.7" height="1.7" fill="#f9701e"/><rect x="313.8" y="382.2" width="1.7" height="1.7" fill="#f9701e"/><rect x="314.3" y="386.8" width="1.7" height="1.7" fill="#f9701e"/><rect x="313.7" y="391.4" width="1.7" height="1.7" fill="#ff8a12"/><rect x="313.9" y="396.0" width="1.7" height="1.7" fill="#f5581e"/><rect x="314.6" y="400.8" width="1.7" height="1.7" fill="#ff9416"/><rect x="313.3" y="410.7" width="1.7" height="1.7" fill="#ff9416"/><rect x="313.1" y="415.1" width="1.7" height="1.7" fill="#ff8a12"/><rect x="314.1" y="420.1" width="1.7" height="1.7" fill="#ff9416"/><rect x="313.7" y="424.5" width="1.7" height="1.7" fill="#ffa51e"/><rect x="313.5" y="429.1" width="1.7" height="1.7" fill="#ff9416"/><rect x="313.5" y="433.8" width="1.7" height="1.7" fill="#ffa51e"/><rect x="314.1" y="438.4" width="1.7" height="1.7" fill="#ff9c1a"/><rect x="313.6" y="443.3" width="1.7" height="1.7" fill="#ff9c1a"/><rect x="312.4" y="448.1" width="1.7" height="1.7" fill="#ff9416"/><rect x="313.4" y="452.7" width="1.7" height="1.7" fill="#ff9c1a"/><rect x="313.7" y="457.5" width="1.7" height="1.7" fill="#ff8a12"/><rect x="313.3" y="467.0" width="1.7" height="1.7" fill="#ff9416"/><rect x="313.2" y="471.8" width="1.7" height="1.7" fill="#ffa51e"/><rect x="313.7" y="476.5" width="1.7" height="1.7" fill="#ff9c1a"/><rect x="313.0" y="481.3" width="1.7" height="1.7" fill="#ff8a12"/><rect x="313.7" y="486.1" width="1.7" height="1.7" fill="#ff9416"/><rect x="313.1" y="490.8" width="1.7" height="1.7" fill="#ff8a12"/><rect x="313.1" y="495.5" width="1.7" height="1.7" fill="#ff9c1a"/><rect x="313.0" y="499.9" width="1.7" height="1.7" fill="#ff9416"/><rect x="313.6" y="504.6" width="1.7" height="1.7" fill="#ffa51e"/><rect x="312.8" y="509.2" width="1.7" height="1.7" fill="#ffa51e"/><rect x="314.5" y="513.6" width="1.7" height="1.7" fill="#ff9c1a"/><rect x="313.2" y="518.4" width="1.7" height="1.7" fill="#ff9c1a"/><rect x="313.3" y="523.1" width="1.7" height="1.7" fill="#ffa51e"/><rect x="313.3" y="527.8" width="1.7" height="1.7" fill="#ff9416"/><rect x="313.9" y="532.5" width="1.7" height="1.7" fill="#ff8a12"/><rect x="312.7" y="542.3" width="1.7" height="1.7" fill="#ff9416"/><rect x="312.6" y="546.9" width="1.7" height="1.7" fill="#ff8a12"/><rect x="313.7" y="551.5" width="1.7" height="1.7" fill="#ff8a12"/><rect x="313.4" y="556.4" width="1.7" height="1.7" fill="#ff9c1a"/><rect x="313.2" y="561.4" width="1.7" height="1.7" fill="#ff9416"/><rect x="313.8" y="565.9" width="1.7" height="1.7" fill="#ff9416"/><rect x="313.2" y="570.7" width="1.7" height="1.7" fill="#ff9416"/><rect x="313.8" y="575.4" width="1.7" height="1.7" fill="#ff8a12"/><rect x="313.3" y="580.1" width="1.7" height="1.7" fill="#ffa51e"/><rect x="313.0" y="584.8" width="1.7" height="1.7" fill="#ff9c1a"/><rect x="314.5" y="589.6" width="1.7" height="1.7" fill="#ff9416"/><rect x="314.0" y="594.6" width="1.7" height="1.7" fill="#ffa51e"/><rect x="313.9" y="599.6" width="1.7" height="1.7" fill="#ff9c1a"/><rect x="314.1" y="604.4" width="1.7" height="1.7" fill="#ff8a12"/><rect x="314.1" y="608.8" width="1.7" height="1.7" fill="#ff8a12"/><rect x="312.9" y="613.6" width="1.7" height="1.7" fill="#ff9c1a"/><rect x="341.8" y="74.6" width="1.7" height="1.7" fill="#ffa51e"/><rect x="341.4" y="79.2" width="1.7" height="1.7" fill="#ffa51e"/><rect x="340.7" y="83.8" width="1.7" height="1.7" fill="#ffa51e"/><rect x="340.8" y="93.7" width="1.7" height="1.7" fill="#ff9a1a"/><rect x="341.4" y="98.2" width="1.7" height="1.7" fill="#fcc41e"/><rect x="341.0" y="107.9" width="1.7" height="1.7" fill="#ff9a1a"/><rect x="340.3" y="117.3" width="1.7" height="1.7" fill="#f9b915"/><rect x="341.8" y="131.6" width="1.7" height="1.7" fill="#ffa51e"/><rect x="341.2" y="136.1" width="1.7" height="1.7" fill="#ff9416"/><rect x="342.3" y="141.0" width="1.7" height="1.7" fill="#f5581e"/><rect x="340.9" y="145.8" width="1.7" height="1.7" fill="#ff8a12"/><rect x="341.4" y="150.7" width="1.7" height="1.7" fill="#ff8a12"/><rect x="341.0" y="159.9" width="1.7" height="1.7" fill="#f9701e"/><rect x="340.7" y="164.7" width="1.7" height="1.7" fill="#ff8a12"/><rect x="341.2" y="169.4" width="1.7" height="1.7" fill="#3040d8"/><rect x="341.4" y="174.0" width="1.7" height="1.7" fill="#5040d8"/><rect x="341.6" y="183.7" width="1.7" height="1.7" fill="#c040c0"/><rect x="341.3" y="188.2" width="1.7" height="1.7" fill="#c040c0"/><rect x="341.8" y="193.1" width="1.7" height="1.7" fill="#5040d8"/><rect x="341.0" y="198.0" width="1.7" height="1.7" fill="#a040e0"/><rect x="341.9" y="203.0" width="1.7" height="1.7" fill="#c040c0"/><rect x="341.5" y="207.8" width="1.7" height="1.7" fill="#5040d8"/><rect x="340.6" y="212.4" width="1.7" height="1.7" fill="#3040d8"/><rect x="340.6" y="217.0" width="1.7" height="1.7" fill="#5040d8"/><rect x="340.8" y="221.7" width="1.7" height="1.7" fill="#c040c0"/><rect x="341.0" y="226.6" width="1.7" height="1.7" fill="#5040d8"/><rect x="341.3" y="231.0" width="1.7" height="1.7" fill="#5040d8"/><rect x="340.5" y="235.4" width="1.7" height="1.7" fill="#c040c0"/><rect x="340.4" y="245.3" width="1.7" height="1.7" fill="#3040d8"/><rect x="341.4" y="249.8" width="1.7" height="1.7" fill="#ee4020"/><rect x="341.3" y="254.6" width="1.7" height="1.7" fill="#e83424"/><rect x="340.4" y="259.3" width="1.7" height="1.7" fill="#fcc41e"/><rect x="341.6" y="264.0" width="1.7" height="1.7" fill="#fcc41e"/><rect x="340.6" y="273.0" width="1.7" height="1.7" fill="#f9b915"/><rect x="340.8" y="277.8" width="1.7" height="1.7" fill="#f9b915"/><rect x="341.1" y="282.2" width="1.7" height="1.7" fill="#f9b915"/><rect x="340.9" y="286.7" width="1.7" height="1.7" fill="#ff9a1a"/><rect x="341.7" y="291.2" width="1.7" height="1.7" fill="#fcc41e"/><rect x="341.2" y="295.8" width="1.7" height="1.7" fill="#ffa51e"/><rect x="340.1" y="300.5" width="1.7" height="1.7" fill="#ff9a1a"/><rect x="341.8" y="305.4" width="1.7" height="1.7" fill="#ffa51e"/><rect x="340.3" y="314.4" width="1.7" height="1.7" fill="#fcc41e"/><rect x="341.4" y="319.2" width="1.7" height="1.7" fill="#ffa51e"/><rect x="341.1" y="328.5" width="1.7" height="1.7" fill="#ffa51e"/><rect x="341.1" y="333.0" width="1.7" height="1.7" fill="#ffa51e"/><rect x="341.3" y="337.9" width="1.7" height="1.7" fill="#f9b915"/><rect x="340.8" y="342.7" width="1.7" height="1.7" fill="#f9b915"/><rect x="341.1" y="347.5" width="1.7" height="1.7" fill="#fcc41e"/><rect x="341.3" y="352.0" width="1.7" height="1.7" fill="#ffa51e"/><rect x="341.8" y="357.0" width="1.7" height="1.7" fill="#fcc41e"/><rect x="340.9" y="361.7" width="1.7" height="1.7" fill="#ffa51e"/><rect x="341.1" y="366.3" width="1.7" height="1.7" fill="#ff9a1a"/><rect x="341.2" y="371.0" width="1.7" height="1.7" fill="#ff9a1a"/><rect x="341.3" y="376.0" width="1.7" height="1.7" fill="#f9b915"/><rect x="340.6" y="380.8" width="1.7" height="1.7" fill="#ffa51e"/><rect x="340.9" y="385.4" width="1.7" height="1.7" fill="#fcc41e"/><rect x="341.2" y="390.0" width="1.7" height="1.7" fill="#fcc41e"/><rect x="341.0" y="399.6" width="1.7" height="1.7" fill="#ff9a1a"/><rect x="340.2" y="408.9" width="1.7" height="1.7" fill="#f9b915"/><rect x="340.6" y="413.4" width="1.7" height="1.7" fill="#ffa51e"/><rect x="341.1" y="418.2" width="1.7" height="1.7" fill="#ff9a1a"/><rect x="340.5" y="427.4" width="1.7" height="1.7" fill="#ff8a12"/><rect x="340.9" y="432.1" width="1.7" height="1.7" fill="#ff9416"/><rect x="340.3" y="450.7" width="1.7" height="1.7" fill="#e83050"/><rect x="340.6" y="455.7" width="1.7" height="1.7" fill="#e04090"/><rect x="341.3" y="460.4" width="1.7" height="1.7" fill="#c040d0"/><rect x="341.0" y="465.0" width="1.7" height="1.7" fill="#e83050"/><rect x="341.9" y="469.6" width="1.7" height="1.7" fill="#c040d0"/><rect x="340.5" y="474.5" width="1.7" height="1.7" fill="#a050e0"/><rect x="341.0" y="479.5" width="1.7" height="1.7" fill="#e04090"/><rect x="341.3" y="484.0" width="1.7" height="1.7" fill="#a050e0"/><rect x="340.6" y="488.7" width="1.7" height="1.7" fill="#e04090"/><rect x="341.5" y="493.1" width="1.7" height="1.7" fill="#a050e0"/><rect x="341.1" y="497.8" width="1.7" height="1.7" fill="#a050e0"/><rect x="341.0" y="502.2" width="1.7" height="1.7" fill="#c040d0"/><rect x="342.1" y="506.9" width="1.7" height="1.7" fill="#e04090"/><rect x="340.7" y="511.9" width="1.7" height="1.7" fill="#e04090"/><rect x="341.4" y="516.7" width="1.7" height="1.7" fill="#a050e0"/><rect x="341.2" y="521.5" width="1.7" height="1.7" fill="#c040d0"/><rect x="341.7" y="526.0" width="1.7" height="1.7" fill="#fcc41e"/><rect x="340.8" y="530.4" width="1.7" height="1.7" fill="#ffa51e"/><rect x="341.4" y="535.1" width="1.7" height="1.7" fill="#ffa51e"/><rect x="341.9" y="540.0" width="1.7" height="1.7" fill="#ff9a1a"/><rect x="341.5" y="549.5" width="1.7" height="1.7" fill="#ff9a1a"/><rect x="340.4" y="554.5" width="1.7" height="1.7" fill="#f9b915"/><rect x="341.7" y="559.0" width="1.7" height="1.7" fill="#fcc41e"/><rect x="341.6" y="564.0" width="1.7" height="1.7" fill="#fcc41e"/><rect x="341.0" y="568.7" width="1.7" height="1.7" fill="#ff9a1a"/><rect x="341.7" y="578.1" width="1.7" height="1.7" fill="#ffa51e"/><rect x="341.2" y="582.7" width="1.7" height="1.7" fill="#f9b915"/><rect x="341.1" y="596.7" width="1.7" height="1.7" fill="#f9b915"/><rect x="341.1" y="601.6" width="1.7" height="1.7" fill="#ffa51e"/><rect x="342.0" y="606.1" width="1.7" height="1.7" fill="#f9b915"/><rect x="340.8" y="610.5" width="1.7" height="1.7" fill="#f9b915"/><rect x="341.3" y="615.3" width="1.7" height="1.7" fill="#ffa51e"/><rect x="368.9" y="75.9" width="1.7" height="1.7" fill="#ff9a1a"/><rect x="369.2" y="80.8" width="1.7" height="1.7" fill="#fcc41e"/><rect x="368.4" y="85.2" width="1.7" height="1.7" fill="#fcc41e"/><rect x="369.2" y="89.8" width="1.7" height="1.7" fill="#fcc41e"/><rect x="368.6" y="94.7" width="1.7" height="1.7" fill="#f9b915"/><rect x="369.0" y="99.2" width="1.7" height="1.7" fill="#ffa51e"/><rect x="369.1" y="104.0" width="1.7" height="1.7" fill="#f9b915"/><rect x="369.1" y="113.2" width="1.7" height="1.7" fill="#fcc41e"/><rect x="368.7" y="117.8" width="1.7" height="1.7" fill="#ffa51e"/><rect x="369.1" y="122.3" width="1.7" height="1.7" fill="#fcc41e"/><rect x="369.7" y="126.7" width="1.7" height="1.7" fill="#f9b915"/><rect x="368.5" y="131.5" width="1.7" height="1.7" fill="#f9b915"/><rect x="368.5" y="136.1" width="1.7" height="1.7" fill="#fcc41e"/><rect x="368.7" y="140.7" width="1.7" height="1.7" fill="#f9701e"/><rect x="368.6" y="145.7" width="1.7" height="1.7" fill="#ff8a12"/><rect x="367.8" y="150.5" width="1.7" height="1.7" fill="#ff9416"/><rect x="369.2" y="159.8" width="1.7" height="1.7" fill="#f9701e"/><rect x="368.4" y="164.5" width="1.7" height="1.7" fill="#a050e0"/><rect x="369.2" y="169.4" width="1.7" height="1.7" fill="#c040d0"/><rect x="368.7" y="174.3" width="1.7" height="1.7" fill="#e04090"/><rect x="368.9" y="178.9" width="1.7" height="1.7" fill="#a050e0"/><rect x="369.3" y="183.6" width="1.7" height="1.7" fill="#e83050"/><rect x="368.5" y="188.4" width="1.7" height="1.7" fill="#3040d8"/><rect x="369.0" y="193.4" width="1.7" height="1.7" fill="#5040d8"/><rect x="369.5" y="197.9" width="1.7" height="1.7" fill="#5040d8"/><rect x="368.1" y="207.5" width="1.7" height="1.7" fill="#202020"/><rect x="369.5" y="212.4" width="1.7" height="1.7" fill="#202020"/><rect x="368.5" y="216.9" width="1.7" height="1.7" fill="#5040d8"/><rect x="368.1" y="221.7" width="1.7" height="1.7" fill="#1a1a70"/><rect x="368.4" y="231.4" width="1.7" height="1.7" fill="#3040d8"/><rect x="368.8" y="236.2" width="1.7" height="1.7" fill="#1a1a70"/><rect x="367.5" y="240.9" width="1.7" height="1.7" fill="#f5501e"/><rect x="368.6" y="245.3" width="1.7" height="1.7" fill="#e83424"/><rect x="368.9" y="250.0" width="1.7" height="1.7" fill="#f5501e"/><rect x="368.8" y="254.4" width="1.7" height="1.7" fill="#e83424"/><rect x="368.4" y="263.5" width="1.7" height="1.7" fill="#ffa51e"/><rect x="368.6" y="268.4" width="1.7" height="1.7" fill="#ff9c1a"/><rect x="368.1" y="272.9" width="1.7" height="1.7" fill="#ffa51e"/><rect x="368.6" y="277.7" width="1.7" height="1.7" fill="#ff8a12"/><rect x="368.1" y="282.3" width="1.7" height="1.7" fill="#ff9416"/><rect x="369.9" y="287.1" width="1.7" height="1.7" fill="#ff8a12"/><rect x="368.6" y="296.8" width="1.7" height="1.7" fill="#ff9416"/><rect x="369.5" y="301.7" width="1.7" height="1.7" fill="#ffa51e"/><rect x="368.0" y="306.5" width="1.7" height="1.7" fill="#ff9416"/><rect x="368.4" y="311.4" width="1.7" height="1.7" fill="#ff9c1a"/><rect x="368.4" y="316.4" width="1.7" height="1.7" fill="#ffa51e"/><rect x="369.2" y="325.6" width="1.7" height="1.7" fill="#ff9416"/><rect x="369.0" y="330.4" width="1.7" height="1.7" fill="#ffa51e"/><rect x="368.8" y="334.9" width="1.7" height="1.7" fill="#ff9c1a"/><rect x="369.3" y="339.3" width="1.7" height="1.7" fill="#ff9416"/><rect x="368.5" y="344.3" width="1.7" height="1.7" fill="#ff9c1a"/><rect x="367.7" y="349.0" width="1.7" height="1.7" fill="#ff9416"/><rect x="369.7" y="353.5" width="1.7" height="1.7" fill="#ffa51e"/><rect x="368.2" y="358.0" width="1.7" height="1.7" fill="#ff9416"/><rect x="368.3" y="362.9" width="1.7" height="1.7" fill="#ff8a12"/><rect x="367.9" y="367.8" width="1.7" height="1.7" fill="#ff9c1a"/><rect x="369.6" y="372.7" width="1.7" height="1.7" fill="#ff9c1a"/><rect x="369.0" y="377.2" width="1.7" height="1.7" fill="#ff9c1a"/><rect x="368.1" y="381.6" width="1.7" height="1.7" fill="#ff8a12"/><rect x="368.0" y="386.0" width="1.7" height="1.7" fill="#ff8a12"/><rect x="368.9" y="390.7" width="1.7" height="1.7" fill="#ffa51e"/><rect x="368.1" y="395.2" width="1.7" height="1.7" fill="#ffa51e"/><rect x="368.6" y="405.0" width="1.7" height="1.7" fill="#ff9416"/><rect x="368.2" y="409.7" width="1.7" height="1.7" fill="#ff9416"/><rect x="368.6" y="414.5" width="1.7" height="1.7" fill="#ff9416"/><rect x="369.3" y="419.3" width="1.7" height="1.7" fill="#ff9c1a"/><rect x="368.9" y="424.0" width="1.7" height="1.7" fill="#ff9c1a"/><rect x="368.9" y="428.6" width="1.7" height="1.7" fill="#ff8a12"/><rect x="368.8" y="433.4" width="1.7" height="1.7" fill="#f5501e"/><rect x="368.6" y="438.3" width="1.7" height="1.7" fill="#ee4020"/><rect x="367.8" y="443.3" width="1.7" height="1.7" fill="#f5501e"/><rect x="368.6" y="448.2" width="1.7" height="1.7" fill="#e83424"/><rect x="369.1" y="458.0" width="1.7" height="1.7" fill="#f5642a"/><rect x="369.7" y="462.5" width="1.7" height="1.7" fill="#f5642a"/><rect x="369.1" y="467.3" width="1.7" height="1.7" fill="#f5501e"/><rect x="368.5" y="471.7" width="1.7" height="1.7" fill="#ee4020"/><rect x="368.4" y="476.7" width="1.7" height="1.7" fill="#f5501e"/><rect x="368.9" y="481.3" width="1.7" height="1.7" fill="#f5501e"/><rect x="368.5" y="486.2" width="1.7" height="1.7" fill="#f5501e"/><rect x="369.5" y="490.8" width="1.7" height="1.7" fill="#ee4020"/><rect x="367.7" y="495.7" width="1.7" height="1.7" fill="#f5642a"/><rect x="368.9" y="500.1" width="1.7" height="1.7" fill="#e83424"/><rect x="368.4" y="504.6" width="1.7" height="1.7" fill="#f5501e"/><rect x="369.2" y="509.2" width="1.7" height="1.7" fill="#e83424"/><rect x="368.1" y="513.7" width="1.7" height="1.7" fill="#f5501e"/><rect x="369.5" y="518.2" width="1.7" height="1.7" fill="#ee4020"/><rect x="368.1" y="522.7" width="1.7" height="1.7" fill="#ee4020"/><rect x="370.1" y="527.6" width="1.7" height="1.7" fill="#ffa51e"/><rect x="369.1" y="532.3" width="1.7" height="1.7" fill="#ff9a1a"/><rect x="369.8" y="537.3" width="1.7" height="1.7" fill="#f9b915"/><rect x="368.7" y="541.8" width="1.7" height="1.7" fill="#ffa51e"/><rect x="368.0" y="546.7" width="1.7" height="1.7" fill="#ffa51e"/><rect x="367.4" y="551.6" width="1.7" height="1.7" fill="#f9b915"/><rect x="368.2" y="561.1" width="1.7" height="1.7" fill="#f9b915"/><rect x="369.2" y="565.6" width="1.7" height="1.7" fill="#ff9a1a"/><rect x="369.0" y="570.4" width="1.7" height="1.7" fill="#f9b915"/><rect x="369.1" y="575.2" width="1.7" height="1.7" fill="#ff9a1a"/><rect x="369.5" y="584.8" width="1.7" height="1.7" fill="#fcc41e"/><rect x="368.7" y="589.2" width="1.7" height="1.7" fill="#ff9a1a"/><rect x="369.5" y="594.0" width="1.7" height="1.7" fill="#f9b915"/><rect x="368.7" y="598.7" width="1.7" height="1.7" fill="#ff9a1a"/><rect x="368.4" y="603.4" width="1.7" height="1.7" fill="#fcc41e"/><rect x="368.8" y="608.3" width="1.7" height="1.7" fill="#ff9a1a"/><rect x="368.7" y="613.0" width="1.7" height="1.7" fill="#ffa51e"/><rect x="396.4" y="496.0" width="1.7" height="1.7" fill="#f5581e"/><rect x="397.1" y="500.5" width="1.7" height="1.7" fill="#ff9416"/><rect x="396.1" y="505.1" width="1.7" height="1.7" fill="#ff8a12"/><rect x="396.0" y="509.5" width="1.7" height="1.7" fill="#f9701e"/><rect x="396.4" y="514.5" width="1.7" height="1.7" fill="#f9701e"/><rect x="396.3" y="519.2" width="1.7" height="1.7" fill="#f9701e"/><rect x="395.9" y="523.6" width="1.7" height="1.7" fill="#ff9416"/><rect x="396.9" y="528.1" width="1.7" height="1.7" fill="#ff9416"/><rect x="397.3" y="532.5" width="1.7" height="1.7" fill="#f9701e"/><rect x="397.2" y="537.4" width="1.7" height="1.7" fill="#f9701e"/><rect x="396.0" y="551.7" width="1.7" height="1.7" fill="#fcc41e"/><rect x="395.8" y="556.5" width="1.7" height="1.7" fill="#ffb81a"/><rect x="396.3" y="575.7" width="1.7" height="1.7" fill="#ffb81a"/><rect x="397.1" y="584.8" width="1.7" height="1.7" fill="#f9b915"/><rect x="397.2" y="604.0" width="1.7" height="1.7" fill="#f9b915"/><rect x="423.4" y="499.6" width="1.7" height="1.7" fill="#ffa51e"/><rect x="423.9" y="504.2" width="1.7" height="1.7" fill="#ffa51e"/><rect x="423.8" y="508.8" width="1.7" height="1.7" fill="#ffa51e"/><rect x="423.3" y="513.4" width="1.7" height="1.7" fill="#ff8a12"/><rect x="424.1" y="522.6" width="1.7" height="1.7" fill="#ffa51e"/><rect x="423.5" y="527.3" width="1.7" height="1.7" fill="#ff8a12"/><rect x="423.9" y="532.2" width="1.7" height="1.7" fill="#ff9c1a"/><rect x="422.8" y="546.6" width="1.7" height="1.7" fill="#ff9416"/><rect x="424.8" y="551.3" width="1.7" height="1.7" fill="#ffa51e"/><rect x="424.4" y="555.7" width="1.7" height="1.7" fill="#ff9c1a"/><rect x="424.0" y="560.6" width="1.7" height="1.7" fill="#ff9c1a"/><rect x="423.9" y="570.2" width="1.7" height="1.7" fill="#ff9416"/><rect x="423.1" y="574.6" width="1.7" height="1.7" fill="#ff8a12"/><rect x="422.7" y="579.5" width="1.7" height="1.7" fill="#ff9c1a"/><rect x="424.1" y="584.3" width="1.7" height="1.7" fill="#ff9c1a"/><rect x="424.4" y="589.2" width="1.7" height="1.7" fill="#ff9c1a"/><rect x="423.8" y="594.0" width="1.7" height="1.7" fill="#ff9c1a"/><rect x="424.4" y="598.9" width="1.7" height="1.7" fill="#ffa51e"/><rect x="423.1" y="603.5" width="1.7" height="1.7" fill="#ffa51e"/><rect x="423.4" y="608.2" width="1.7" height="1.7" fill="#ff9416"/><rect x="425.4" y="612.7" width="1.7" height="1.7" fill="#ff9416"/><rect x="451.0" y="74.1" width="1.7" height="1.7" fill="#ffcf36"/><rect x="451.4" y="497.4" width="1.7" height="1.7" fill="#ffa51e"/><rect x="452.3" y="502.3" width="1.7" height="1.7" fill="#fcc41e"/><rect x="452.5" y="512.2" width="1.7" height="1.7" fill="#ffa51e"/><rect x="451.1" y="516.9" width="1.7" height="1.7" fill="#ffa51e"/><rect x="451.0" y="521.6" width="1.7" height="1.7" fill="#f9b915"/><rect x="451.3" y="530.9" width="1.7" height="1.7" fill="#ffa51e"/><rect x="452.1" y="535.5" width="1.7" height="1.7" fill="#f9b915"/><rect x="451.9" y="549.7" width="1.7" height="1.7" fill="#f9b915"/><rect x="451.2" y="559.3" width="1.7" height="1.7" fill="#f9b915"/><rect x="451.5" y="563.8" width="1.7" height="1.7" fill="#f9b915"/><rect x="451.7" y="568.6" width="1.7" height="1.7" fill="#f9b915"/><rect x="451.8" y="573.6" width="1.7" height="1.7" fill="#f9b915"/><rect x="452.2" y="583.2" width="1.7" height="1.7" fill="#ffa51e"/><rect x="451.7" y="588.1" width="1.7" height="1.7" fill="#ffa51e"/><rect x="451.4" y="597.3" width="1.7" height="1.7" fill="#f9b915"/><rect x="451.6" y="602.1" width="1.7" height="1.7" fill="#fcc41e"/><rect x="451.2" y="616.1" width="1.7" height="1.7" fill="#f9b915"/><rect x="479.1" y="75.8" width="1.7" height="1.7" fill="#ffb81a"/><rect x="478.6" y="491.2" width="1.7" height="1.7" fill="#ff9416"/><rect x="479.1" y="496.0" width="1.7" height="1.7" fill="#ff8a12"/><rect x="479.0" y="500.8" width="1.7" height="1.7" fill="#ff9416"/><rect x="479.6" y="505.8" width="1.7" height="1.7" fill="#ff8a12"/><rect x="478.1" y="510.8" width="1.7" height="1.7" fill="#ff9c1a"/><rect x="478.4" y="515.6" width="1.7" height="1.7" fill="#ff9c1a"/><rect x="479.5" y="520.1" width="1.7" height="1.7" fill="#ffa51e"/><rect x="478.7" y="524.8" width="1.7" height="1.7" fill="#ff8a12"/><rect x="479.8" y="529.8" width="1.7" height="1.7" fill="#ff9416"/><rect x="479.4" y="534.3" width="1.7" height="1.7" fill="#ff9c1a"/><rect x="479.5" y="539.0" width="1.7" height="1.7" fill="#ff8a12"/><rect x="479.0" y="543.4" width="1.7" height="1.7" fill="#ff8a12"/><rect x="479.0" y="547.8" width="1.7" height="1.7" fill="#ff9c1a"/><rect x="479.3" y="557.0" width="1.7" height="1.7" fill="#ff9416"/><rect x="479.2" y="561.8" width="1.7" height="1.7" fill="#ff9c1a"/><rect x="479.3" y="566.4" width="1.7" height="1.7" fill="#ff8a12"/><rect x="480.1" y="570.9" width="1.7" height="1.7" fill="#ff9c1a"/><rect x="480.2" y="575.7" width="1.7" height="1.7" fill="#ff8a12"/><rect x="478.8" y="584.6" width="1.7" height="1.7" fill="#f5642a"/><rect x="480.3" y="589.5" width="1.7" height="1.7" fill="#f5501e"/><rect x="480.0" y="594.2" width="1.7" height="1.7" fill="#e83424"/><rect x="478.7" y="603.7" width="1.7" height="1.7" fill="#e83424"/><rect x="478.8" y="608.6" width="1.7" height="1.7" fill="#f5642a"/><rect x="480.6" y="613.3" width="1.7" height="1.7" fill="#f5642a"/><rect x="507.0" y="503.0" width="1.7" height="1.7" fill="#fcc41e"/><rect x="506.9" y="541.1" width="1.7" height="1.7" fill="#f9b915"/><rect x="506.9" y="554.7" width="1.7" height="1.7" fill="#ffcf36"/><rect x="507.2" y="564.3" width="1.7" height="1.7" fill="#ffcf36"/><rect x="507.4" y="583.2" width="1.7" height="1.7" fill="#fcc41e"/><rect x="507.7" y="602.4" width="1.7" height="1.7" fill="#f9b915"/><rect x="507.6" y="607.0" width="1.7" height="1.7" fill="#ffcf36"/><rect x="507.0" y="611.9" width="1.7" height="1.7" fill="#ffcf36"/><rect x="534.8" y="492.9" width="1.7" height="1.7" fill="#ff9416"/><rect x="534.8" y="497.9" width="1.7" height="1.7" fill="#ff9416"/><rect x="535.3" y="502.5" width="1.7" height="1.7" fill="#ff9416"/><rect x="535.0" y="507.0" width="1.7" height="1.7" fill="#ff9416"/><rect x="534.7" y="511.5" width="1.7" height="1.7" fill="#ff8a12"/><rect x="534.1" y="516.1" width="1.7" height="1.7" fill="#ff9c1a"/><rect x="534.5" y="520.9" width="1.7" height="1.7" fill="#ff9c1a"/><rect x="535.5" y="525.6" width="1.7" height="1.7" fill="#ff9416"/><rect x="534.0" y="530.2" width="1.7" height="1.7" fill="#ff9c1a"/><rect x="535.0" y="534.7" width="1.7" height="1.7" fill="#ff9c1a"/><rect x="533.5" y="539.6" width="1.7" height="1.7" fill="#ff8a12"/><rect x="533.6" y="544.4" width="1.7" height="1.7" fill="#ff9416"/><rect x="534.9" y="548.9" width="1.7" height="1.7" fill="#ffa51e"/><rect x="535.0" y="553.4" width="1.7" height="1.7" fill="#ff9416"/><rect x="535.3" y="557.9" width="1.7" height="1.7" fill="#ff8a12"/><rect x="534.1" y="562.7" width="1.7" height="1.7" fill="#ff9c1a"/><rect x="534.1" y="567.3" width="1.7" height="1.7" fill="#ff9416"/><rect x="534.8" y="572.1" width="1.7" height="1.7" fill="#ff9c1a"/><rect x="535.8" y="577.0" width="1.7" height="1.7" fill="#ff8a12"/><rect x="534.4" y="581.6" width="1.7" height="1.7" fill="#ffa51e"/><rect x="535.8" y="586.6" width="1.7" height="1.7" fill="#ff9c1a"/><rect x="534.3" y="591.2" width="1.7" height="1.7" fill="#ffa51e"/><rect x="533.7" y="596.1" width="1.7" height="1.7" fill="#ff9c1a"/><rect x="534.7" y="601.0" width="1.7" height="1.7" fill="#ff9c1a"/><rect x="534.5" y="615.0" width="1.7" height="1.7" fill="#ff8a12"/><rect x="562.4" y="500.3" width="1.7" height="1.7" fill="#c040c0"/><rect x="563.0" y="505.2" width="1.7" height="1.7" fill="#c040c0"/><rect x="561.3" y="509.9" width="1.7" height="1.7" fill="#a040e0"/><rect x="561.9" y="514.4" width="1.7" height="1.7" fill="#5040d8"/><rect x="562.4" y="518.8" width="1.7" height="1.7" fill="#c040c0"/><rect x="562.1" y="523.6" width="1.7" height="1.7" fill="#c040c0"/><rect x="562.6" y="528.4" width="1.7" height="1.7" fill="#c040c0"/><rect x="562.3" y="533.1" width="1.7" height="1.7" fill="#2a2a90"/><rect x="561.4" y="565.4" width="1.7" height="1.7" fill="#ffb81a"/><rect x="562.8" y="569.9" width="1.7" height="1.7" fill="#fcc41e"/><rect x="562.1" y="579.9" width="1.7" height="1.7" fill="#ffb81a"/><rect x="590.2" y="74.6" width="1.7" height="1.7" fill="#ffcf36"/><rect x="589.7" y="491.7" width="1.7" height="1.7" fill="#c040d0"/><rect x="589.9" y="496.5" width="1.7" height="1.7" fill="#a050e0"/><rect x="589.8" y="501.4" width="1.7" height="1.7" fill="#c040d0"/><rect x="590.1" y="506.0" width="1.7" height="1.7" fill="#a050e0"/><rect x="591.3" y="510.5" width="1.7" height="1.7" fill="#c040d0"/><rect x="589.7" y="515.0" width="1.7" height="1.7" fill="#c040d0"/><rect x="590.3" y="529.3" width="1.7" height="1.7" fill="#e04090"/><rect x="590.7" y="534.2" width="1.7" height="1.7" fill="#c040d0"/><rect x="589.1" y="539.1" width="1.7" height="1.7" fill="#ff9c1a"/><rect x="590.3" y="543.7" width="1.7" height="1.7" fill="#ff8a12"/><rect x="590.5" y="548.2" width="1.7" height="1.7" fill="#ffa51e"/><rect x="589.6" y="552.9" width="1.7" height="1.7" fill="#ff9416"/><rect x="590.2" y="562.6" width="1.7" height="1.7" fill="#ff9c1a"/><rect x="589.4" y="567.0" width="1.7" height="1.7" fill="#ff9416"/><rect x="589.8" y="572.0" width="1.7" height="1.7" fill="#ff8a12"/><rect x="590.3" y="577.0" width="1.7" height="1.7" fill="#ff9c1a"/><rect x="589.7" y="581.6" width="1.7" height="1.7" fill="#ff8a12"/><rect x="590.4" y="586.0" width="1.7" height="1.7" fill="#ff8a12"/><rect x="590.6" y="590.7" width="1.7" height="1.7" fill="#ff9c1a"/><rect x="590.0" y="599.8" width="1.7" height="1.7" fill="#ff9416"/><rect x="589.9" y="604.8" width="1.7" height="1.7" fill="#ff9416"/><rect x="589.4" y="609.7" width="1.7" height="1.7" fill="#ff9416"/><rect x="590.2" y="614.7" width="1.7" height="1.7" fill="#ff9c1a"/><rect x="617.6" y="491.3" width="1.7" height="1.7" fill="#f5642a"/><rect x="617.3" y="496.3" width="1.7" height="1.7" fill="#ee4020"/><rect x="617.4" y="501.1" width="1.7" height="1.7" fill="#f5501e"/><rect x="617.3" y="505.6" width="1.7" height="1.7" fill="#f5642a"/><rect x="618.2" y="510.1" width="1.7" height="1.7" fill="#ee4020"/><rect x="617.6" y="514.5" width="1.7" height="1.7" fill="#e83424"/><rect x="616.9" y="519.3" width="1.7" height="1.7" fill="#e83424"/><rect x="617.2" y="523.8" width="1.7" height="1.7" fill="#f5501e"/><rect x="617.2" y="528.6" width="1.7" height="1.7" fill="#f5642a"/><rect x="617.8" y="566.3" width="1.7" height="1.7" fill="#ffcf36"/><rect x="618.1" y="585.0" width="1.7" height="1.7" fill="#f9b915"/><rect x="645.2" y="502.1" width="1.7" height="1.7" fill="#ff9416"/><rect x="644.8" y="507.0" width="1.7" height="1.7" fill="#ff9c1a"/><rect x="644.5" y="511.9" width="1.7" height="1.7" fill="#ff9416"/><rect x="645.4" y="516.7" width="1.7" height="1.7" fill="#ff8a12"/><rect x="646.0" y="521.7" width="1.7" height="1.7" fill="#ff9c1a"/><rect x="644.3" y="526.7" width="1.7" height="1.7" fill="#ffa51e"/><rect x="645.4" y="531.2" width="1.7" height="1.7" fill="#ff9c1a"/><rect x="644.2" y="536.0" width="1.7" height="1.7" fill="#ff8a12"/><rect x="644.4" y="540.7" width="1.7" height="1.7" fill="#ff9416"/><rect x="646.4" y="545.4" width="1.7" height="1.7" fill="#ff9c1a"/><rect x="645.3" y="550.1" width="1.7" height="1.7" fill="#ff8a12"/><rect x="646.1" y="554.9" width="1.7" height="1.7" fill="#ffa51e"/><rect x="646.0" y="559.4" width="1.7" height="1.7" fill="#ff9416"/><rect x="645.8" y="564.2" width="1.7" height="1.7" fill="#ff9416"/><rect x="644.8" y="569.1" width="1.7" height="1.7" fill="#ff9416"/><rect x="646.0" y="573.8" width="1.7" height="1.7" fill="#ffa51e"/><rect x="645.6" y="578.2" width="1.7" height="1.7" fill="#ffa51e"/><rect x="644.5" y="583.2" width="1.7" height="1.7" fill="#ff9416"/><rect x="645.4" y="587.8" width="1.7" height="1.7" fill="#ff8a12"/><rect x="644.8" y="592.8" width="1.7" height="1.7" fill="#ff9c1a"/><rect x="644.2" y="597.5" width="1.7" height="1.7" fill="#ffa51e"/><rect x="645.3" y="602.0" width="1.7" height="1.7" fill="#ff8a12"/><rect x="644.7" y="606.6" width="1.7" height="1.7" fill="#ff8a12"/><rect x="645.2" y="611.5" width="1.7" height="1.7" fill="#ff9416"/><rect x="645.6" y="616.2" width="1.7" height="1.7" fill="#ff9c1a"/><rect x="673.2" y="491.4" width="1.7" height="1.7" fill="#e04090"/><rect x="673.3" y="496.3" width="1.7" height="1.7" fill="#e04090"/><rect x="674.3" y="500.7" width="1.7" height="1.7" fill="#e04090"/><rect x="673.7" y="505.4" width="1.7" height="1.7" fill="#e04090"/><rect x="672.9" y="509.8" width="1.7" height="1.7" fill="#e04090"/><rect x="673.3" y="514.4" width="1.7" height="1.7" fill="#e04090"/><rect x="673.4" y="518.9" width="1.7" height="1.7" fill="#c040d0"/><rect x="671.9" y="523.9" width="1.7" height="1.7" fill="#a050e0"/><rect x="672.8" y="528.4" width="1.7" height="1.7" fill="#e04090"/><rect x="672.7" y="533.3" width="1.7" height="1.7" fill="#a050e0"/><rect x="673.1" y="542.9" width="1.7" height="1.7" fill="#e83050"/><rect x="671.6" y="552.6" width="1.7" height="1.7" fill="#ffa51e"/><rect x="672.1" y="557.5" width="1.7" height="1.7" fill="#ff9416"/><rect x="672.6" y="561.9" width="1.7" height="1.7" fill="#ff9416"/><rect x="672.5" y="566.7" width="1.7" height="1.7" fill="#ff8a12"/><rect x="672.7" y="571.3" width="1.7" height="1.7" fill="#ffa51e"/><rect x="671.8" y="575.8" width="1.7" height="1.7" fill="#ff8a12"/><rect x="671.9" y="580.4" width="1.7" height="1.7" fill="#ff8a12"/><rect x="672.4" y="585.1" width="1.7" height="1.7" fill="#ff8a12"/><rect x="673.1" y="589.8" width="1.7" height="1.7" fill="#ff9416"/><rect x="672.6" y="594.3" width="1.7" height="1.7" fill="#ff9c1a"/><rect x="672.8" y="603.6" width="1.7" height="1.7" fill="#ff8a12"/><rect x="672.3" y="608.3" width="1.7" height="1.7" fill="#ffa51e"/><rect x="672.6" y="612.8" width="1.7" height="1.7" fill="#ff9c1a"/><rect x="700.6" y="79.1" width="1.7" height="1.7" fill="#ffb81a"/><rect x="700.1" y="494.5" width="1.7" height="1.7" fill="#a050e0"/><rect x="701.4" y="499.0" width="1.7" height="1.7" fill="#e83050"/><rect x="700.6" y="503.9" width="1.7" height="1.7" fill="#c040d0"/><rect x="700.7" y="508.7" width="1.7" height="1.7" fill="#a050e0"/><rect x="700.2" y="513.2" width="1.7" height="1.7" fill="#a050e0"/><rect x="700.5" y="518.0" width="1.7" height="1.7" fill="#c040d0"/><rect x="700.6" y="522.7" width="1.7" height="1.7" fill="#e83050"/><rect x="699.9" y="527.2" width="1.7" height="1.7" fill="#e04090"/><rect x="699.6" y="531.6" width="1.7" height="1.7" fill="#e04090"/><rect x="700.2" y="536.2" width="1.7" height="1.7" fill="#a050e0"/><rect x="701.3" y="550.9" width="1.7" height="1.7" fill="#ff8a12"/><rect x="700.2" y="555.6" width="1.7" height="1.7" fill="#ffa51e"/><rect x="700.2" y="560.3" width="1.7" height="1.7" fill="#ff8a12"/><rect x="700.3" y="565.1" width="1.7" height="1.7" fill="#ff9c1a"/><rect x="701.3" y="569.6" width="1.7" height="1.7" fill="#ff9416"/><rect x="700.1" y="574.4" width="1.7" height="1.7" fill="#ff9416"/><rect x="700.3" y="579.0" width="1.7" height="1.7" fill="#ff8a12"/><rect x="701.0" y="588.8" width="1.7" height="1.7" fill="#ff8a12"/><rect x="700.3" y="598.7" width="1.7" height="1.7" fill="#ff9c1a"/><rect x="700.9" y="603.3" width="1.7" height="1.7" fill="#ff9416"/><rect x="700.2" y="612.7" width="1.7" height="1.7" fill="#ff9416"/><rect x="729.3" y="89.4" width="1.7" height="1.7" fill="#ffa51e"/><rect x="727.7" y="103.6" width="1.7" height="1.7" fill="#ff8a12"/><rect x="728.0" y="108.4" width="1.7" height="1.7" fill="#ff9c1a"/><rect x="728.9" y="122.0" width="1.7" height="1.7" fill="#ff8a12"/><rect x="728.9" y="135.6" width="1.7" height="1.7" fill="#ffa51e"/><rect x="727.7" y="140.1" width="1.7" height="1.7" fill="#ff9c1a"/><rect x="728.0" y="144.6" width="1.7" height="1.7" fill="#ff9416"/><rect x="727.7" y="163.8" width="1.7" height="1.7" fill="#ff9c1a"/><rect x="728.2" y="173.0" width="1.7" height="1.7" fill="#ff8a12"/><rect x="728.6" y="177.9" width="1.7" height="1.7" fill="#ff8a12"/><rect x="728.6" y="197.3" width="1.7" height="1.7" fill="#ffa51e"/><rect x="728.3" y="235.2" width="1.7" height="1.7" fill="#ff9416"/><rect x="727.8" y="244.7" width="1.7" height="1.7" fill="#ff9c1a"/><rect x="728.4" y="249.5" width="1.7" height="1.7" fill="#ff9416"/><rect x="728.5" y="254.2" width="1.7" height="1.7" fill="#ff9c1a"/><rect x="727.7" y="268.5" width="1.7" height="1.7" fill="#ff9416"/><rect x="729.1" y="292.5" width="1.7" height="1.7" fill="#ff9c1a"/><rect x="727.4" y="306.5" width="1.7" height="1.7" fill="#ff9416"/><rect x="728.7" y="311.5" width="1.7" height="1.7" fill="#ffa51e"/><rect x="728.2" y="339.0" width="1.7" height="1.7" fill="#ff8a12"/><rect x="727.3" y="367.6" width="1.7" height="1.7" fill="#ff8a12"/><rect x="727.9" y="372.4" width="1.7" height="1.7" fill="#ff8a12"/><rect x="728.2" y="390.8" width="1.7" height="1.7" fill="#ffa51e"/><rect x="728.8" y="395.3" width="1.7" height="1.7" fill="#ff8a12"/><rect x="728.3" y="414.6" width="1.7" height="1.7" fill="#ff9416"/><rect x="728.3" y="447.9" width="1.7" height="1.7" fill="#ffa51e"/><rect x="728.9" y="452.7" width="1.7" height="1.7" fill="#ff9416"/><rect x="727.4" y="471.0" width="1.7" height="1.7" fill="#ff9416"/><rect x="727.4" y="475.9" width="1.7" height="1.7" fill="#ffa51e"/><rect x="728.5" y="485.3" width="1.7" height="1.7" fill="#ff9c1a"/><rect x="727.7" y="504.5" width="1.7" height="1.7" fill="#ff8a12"/><rect x="727.8" y="509.3" width="1.7" height="1.7" fill="#ff9416"/><rect x="728.4" y="533.1" width="1.7" height="1.7" fill="#ff9416"/><rect x="728.6" y="537.7" width="1.7" height="1.7" fill="#ff8a12"/><rect x="728.1" y="542.4" width="1.7" height="1.7" fill="#ffa51e"/><rect x="727.2" y="561.2" width="1.7" height="1.7" fill="#ff9c1a"/><rect x="727.1" y="570.5" width="1.7" height="1.7" fill="#ff9416"/><rect x="727.8" y="584.3" width="1.7" height="1.7" fill="#ffa51e"/><rect x="728.2" y="589.2" width="1.7" height="1.7" fill="#ff9416"/><rect x="728.7" y="594.0" width="1.7" height="1.7" fill="#ff9c1a"/><rect x="755.6" y="74.7" width="1.7" height="1.7" fill="#ff9a1a"/><rect x="756.3" y="79.6" width="1.7" height="1.7" fill="#ffa51e"/><rect x="755.3" y="84.4" width="1.7" height="1.7" fill="#fcc41e"/><rect x="755.4" y="88.9" width="1.7" height="1.7" fill="#fcc41e"/><rect x="755.4" y="93.6" width="1.7" height="1.7" fill="#f9b915"/><rect x="756.7" y="98.1" width="1.7" height="1.7" fill="#fcc41e"/><rect x="756.3" y="102.8" width="1.7" height="1.7" fill="#ff9a1a"/><rect x="755.3" y="107.7" width="1.7" height="1.7" fill="#fcc41e"/><rect x="756.4" y="112.4" width="1.7" height="1.7" fill="#fcc41e"/><rect x="755.8" y="116.8" width="1.7" height="1.7" fill="#f9b915"/><rect x="755.9" y="121.4" width="1.7" height="1.7" fill="#ff9a1a"/><rect x="755.3" y="126.1" width="1.7" height="1.7" fill="#fcc41e"/><rect x="755.6" y="130.7" width="1.7" height="1.7" fill="#ffa51e"/><rect x="755.7" y="135.1" width="1.7" height="1.7" fill="#fcc41e"/><rect x="755.2" y="144.9" width="1.7" height="1.7" fill="#ff9a1a"/><rect x="755.9" y="149.4" width="1.7" height="1.7" fill="#ffa51e"/><rect x="754.6" y="154.3" width="1.7" height="1.7" fill="#f9b915"/><rect x="755.5" y="159.3" width="1.7" height="1.7" fill="#ff9a1a"/><rect x="756.2" y="163.9" width="1.7" height="1.7" fill="#ffa51e"/><rect x="755.0" y="168.3" width="1.7" height="1.7" fill="#fcc41e"/><rect x="755.1" y="173.3" width="1.7" height="1.7" fill="#ff9a1a"/><rect x="755.4" y="177.9" width="1.7" height="1.7" fill="#f9b915"/><rect x="755.3" y="182.9" width="1.7" height="1.7" fill="#ffa51e"/><rect x="755.0" y="187.4" width="1.7" height="1.7" fill="#f9b915"/><rect x="755.4" y="192.3" width="1.7" height="1.7" fill="#ff9a1a"/><rect x="755.7" y="196.9" width="1.7" height="1.7" fill="#fcc41e"/><rect x="756.5" y="206.3" width="1.7" height="1.7" fill="#ff9a1a"/><rect x="756.1" y="211.2" width="1.7" height="1.7" fill="#ffcf36"/><rect x="756.4" y="216.0" width="1.7" height="1.7" fill="#f9b915"/><rect x="755.1" y="239.6" width="1.7" height="1.7" fill="#ff8a12"/><rect x="756.6" y="244.3" width="1.7" height="1.7" fill="#ffa51e"/><rect x="756.0" y="248.9" width="1.7" height="1.7" fill="#ffa51e"/><rect x="755.4" y="253.3" width="1.7" height="1.7" fill="#ff8a12"/><rect x="755.1" y="257.9" width="1.7" height="1.7" fill="#ff9416"/><rect x="755.6" y="262.3" width="1.7" height="1.7" fill="#ff9416"/><rect x="756.0" y="271.7" width="1.7" height="1.7" fill="#f5501e"/><rect x="756.7" y="281.4" width="1.7" height="1.7" fill="#ee4020"/><rect x="755.9" y="286.1" width="1.7" height="1.7" fill="#e83424"/><rect x="755.9" y="290.7" width="1.7" height="1.7" fill="#ee4020"/><rect x="755.6" y="295.7" width="1.7" height="1.7" fill="#ee4020"/><rect x="755.9" y="300.1" width="1.7" height="1.7" fill="#f5501e"/><rect x="756.1" y="305.0" width="1.7" height="1.7" fill="#f5642a"/><rect x="755.3" y="309.8" width="1.7" height="1.7" fill="#f5501e"/><rect x="755.8" y="314.5" width="1.7" height="1.7" fill="#f5642a"/><rect x="755.9" y="324.0" width="1.7" height="1.7" fill="#f5501e"/><rect x="755.5" y="328.5" width="1.7" height="1.7" fill="#e83424"/><rect x="755.8" y="333.1" width="1.7" height="1.7" fill="#ee4020"/><rect x="756.2" y="338.0" width="1.7" height="1.7" fill="#ee4020"/><rect x="755.4" y="342.7" width="1.7" height="1.7" fill="#e83424"/><rect x="754.6" y="347.7" width="1.7" height="1.7" fill="#f5501e"/><rect x="755.4" y="352.5" width="1.7" height="1.7" fill="#ffa51e"/><rect x="756.0" y="357.2" width="1.7" height="1.7" fill="#ff9416"/><rect x="755.5" y="362.0" width="1.7" height="1.7" fill="#ff9416"/><rect x="755.0" y="366.8" width="1.7" height="1.7" fill="#ff9416"/><rect x="756.2" y="371.5" width="1.7" height="1.7" fill="#ff8a12"/><rect x="756.0" y="376.0" width="1.7" height="1.7" fill="#ffa51e"/><rect x="756.2" y="381.0" width="1.7" height="1.7" fill="#ff9416"/><rect x="755.6" y="385.9" width="1.7" height="1.7" fill="#ff8a12"/><rect x="754.3" y="390.9" width="1.7" height="1.7" fill="#ff9416"/><rect x="755.4" y="395.4" width="1.7" height="1.7" fill="#ff9c1a"/><rect x="755.6" y="400.0" width="1.7" height="1.7" fill="#ffa51e"/><rect x="755.1" y="404.6" width="1.7" height="1.7" fill="#ff8a12"/><rect x="756.0" y="409.5" width="1.7" height="1.7" fill="#ff8a12"/><rect x="756.7" y="418.7" width="1.7" height="1.7" fill="#ffa51e"/><rect x="755.9" y="423.7" width="1.7" height="1.7" fill="#ff9c1a"/><rect x="756.5" y="428.4" width="1.7" height="1.7" fill="#ff9c1a"/><rect x="756.4" y="433.3" width="1.7" height="1.7" fill="#ff9c1a"/><rect x="754.7" y="438.2" width="1.7" height="1.7" fill="#ff8a12"/><rect x="756.1" y="442.9" width="1.7" height="1.7" fill="#ff9416"/><rect x="756.5" y="447.4" width="1.7" height="1.7" fill="#ff9c1a"/><rect x="755.4" y="452.0" width="1.7" height="1.7" fill="#ff9416"/><rect x="756.5" y="456.8" width="1.7" height="1.7" fill="#ffa51e"/><rect x="756.3" y="461.2" width="1.7" height="1.7" fill="#ff9c1a"/><rect x="755.7" y="465.8" width="1.7" height="1.7" fill="#ff8a12"/><rect x="756.3" y="470.7" width="1.7" height="1.7" fill="#ffa51e"/><rect x="755.2" y="475.6" width="1.7" height="1.7" fill="#ff9416"/><rect x="755.6" y="480.5" width="1.7" height="1.7" fill="#ff9416"/><rect x="754.5" y="485.0" width="1.7" height="1.7" fill="#ffa51e"/><rect x="756.5" y="490.0" width="1.7" height="1.7" fill="#ff9c1a"/><rect x="755.4" y="495.0" width="1.7" height="1.7" fill="#ff8a12"/><rect x="755.5" y="499.5" width="1.7" height="1.7" fill="#ff9416"/><rect x="756.1" y="504.2" width="1.7" height="1.7" fill="#ff8a12"/><rect x="756.9" y="509.1" width="1.7" height="1.7" fill="#ff9416"/><rect x="755.5" y="514.0" width="1.7" height="1.7" fill="#ff9c1a"/><rect x="754.8" y="518.6" width="1.7" height="1.7" fill="#ff8a12"/><rect x="756.4" y="523.2" width="1.7" height="1.7" fill="#ff9c1a"/><rect x="756.5" y="528.1" width="1.7" height="1.7" fill="#ff8a12"/><rect x="756.4" y="532.6" width="1.7" height="1.7" fill="#ffa51e"/><rect x="755.5" y="541.8" width="1.7" height="1.7" fill="#ffa51e"/><rect x="757.0" y="546.2" width="1.7" height="1.7" fill="#ff8a12"/><rect x="756.0" y="555.3" width="1.7" height="1.7" fill="#ff9c1a"/><rect x="755.0" y="560.3" width="1.7" height="1.7" fill="#ff9416"/><rect x="755.3" y="565.1" width="1.7" height="1.7" fill="#ffa51e"/><rect x="754.9" y="569.7" width="1.7" height="1.7" fill="#ff8a12"/><rect x="755.3" y="574.1" width="1.7" height="1.7" fill="#ffa51e"/><rect x="756.6" y="583.1" width="1.7" height="1.7" fill="#ffa51e"/><rect x="756.5" y="588.0" width="1.7" height="1.7" fill="#ff9416"/><rect x="755.9" y="592.6" width="1.7" height="1.7" fill="#ff9416"/><rect x="756.9" y="597.5" width="1.7" height="1.7" fill="#ffa51e"/><rect x="755.8" y="602.0" width="1.7" height="1.7" fill="#ff9c1a"/><rect x="755.8" y="606.5" width="1.7" height="1.7" fill="#ff8a12"/><rect x="755.9" y="611.4" width="1.7" height="1.7" fill="#ff8a12"/><rect x="755.6" y="616.3" width="1.7" height="1.7" fill="#ff9c1a"/><rect x="783.1" y="74.0" width="1.7" height="1.7" fill="#ffcf36"/><rect x="783.9" y="78.9" width="1.7" height="1.7" fill="#ffb81a"/><rect x="783.7" y="88.6" width="1.7" height="1.7" fill="#ffcf36"/><rect x="783.3" y="117.6" width="1.7" height="1.7" fill="#f9b915"/><rect x="783.2" y="122.4" width="1.7" height="1.7" fill="#fcc41e"/><rect x="783.7" y="187.3" width="1.7" height="1.7" fill="#ffb81a"/><rect x="782.8" y="225.5" width="1.7" height="1.7" fill="#fcc41e"/><rect x="782.8" y="244.4" width="1.7" height="1.7" fill="#ff9c1a"/><rect x="783.2" y="249.2" width="1.7" height="1.7" fill="#ff8a12"/><rect x="783.3" y="258.7" width="1.7" height="1.7" fill="#ff9c1a"/><rect x="783.7" y="263.4" width="1.7" height="1.7" fill="#ff9c1a"/><rect x="783.2" y="272.5" width="1.7" height="1.7" fill="#ffa51e"/><rect x="784.0" y="287.0" width="1.7" height="1.7" fill="#f5642a"/><rect x="782.5" y="291.9" width="1.7" height="1.7" fill="#e83424"/><rect x="783.5" y="296.9" width="1.7" height="1.7" fill="#ee4020"/><rect x="783.8" y="301.7" width="1.7" height="1.7" fill="#ee4020"/><rect x="783.9" y="311.3" width="1.7" height="1.7" fill="#f5642a"/><rect x="783.8" y="315.8" width="1.7" height="1.7" fill="#f5642a"/><rect x="783.3" y="320.5" width="1.7" height="1.7" fill="#f5642a"/><rect x="783.0" y="325.2" width="1.7" height="1.7" fill="#e83424"/><rect x="782.5" y="330.1" width="1.7" height="1.7" fill="#f5642a"/><rect x="784.6" y="334.8" width="1.7" height="1.7" fill="#f5642a"/><rect x="783.9" y="339.7" width="1.7" height="1.7" fill="#ee4020"/><rect x="783.3" y="358.0" width="1.7" height="1.7" fill="#ffb81a"/><rect x="782.5" y="362.9" width="1.7" height="1.7" fill="#f9b915"/><rect x="782.6" y="372.4" width="1.7" height="1.7" fill="#fcc41e"/><rect x="783.4" y="381.9" width="1.7" height="1.7" fill="#f9b915"/><rect x="783.0" y="386.4" width="1.7" height="1.7" fill="#f9b915"/><rect x="783.0" y="390.9" width="1.7" height="1.7" fill="#f9b915"/><rect x="784.3" y="395.5" width="1.7" height="1.7" fill="#f9b915"/><rect x="783.8" y="400.1" width="1.7" height="1.7" fill="#ffb81a"/><rect x="783.5" y="405.0" width="1.7" height="1.7" fill="#f9b915"/><rect x="783.4" y="409.4" width="1.7" height="1.7" fill="#fcc41e"/><rect x="783.5" y="413.9" width="1.7" height="1.7" fill="#f9b915"/><rect x="783.8" y="418.4" width="1.7" height="1.7" fill="#ffb81a"/><rect x="783.5" y="423.0" width="1.7" height="1.7" fill="#ffcf36"/><rect x="784.0" y="427.7" width="1.7" height="1.7" fill="#f9b915"/><rect x="783.1" y="432.2" width="1.7" height="1.7" fill="#ffcf36"/><rect x="783.7" y="436.7" width="1.7" height="1.7" fill="#fcc41e"/><rect x="783.1" y="441.5" width="1.7" height="1.7" fill="#ffcf36"/><rect x="784.2" y="446.2" width="1.7" height="1.7" fill="#ffcf36"/><rect x="783.6" y="450.9" width="1.7" height="1.7" fill="#ffcf36"/><rect x="784.1" y="465.6" width="1.7" height="1.7" fill="#fcc41e"/><rect x="782.4" y="470.6" width="1.7" height="1.7" fill="#f9b915"/><rect x="783.5" y="475.3" width="1.7" height="1.7" fill="#fcc41e"/><rect x="783.3" y="480.3" width="1.7" height="1.7" fill="#fcc41e"/><rect x="783.0" y="484.7" width="1.7" height="1.7" fill="#ffa51e"/><rect x="784.2" y="489.6" width="1.7" height="1.7" fill="#ff9c1a"/><rect x="783.9" y="494.0" width="1.7" height="1.7" fill="#ffa51e"/><rect x="783.6" y="498.5" width="1.7" height="1.7" fill="#ff9416"/><rect x="782.8" y="503.4" width="1.7" height="1.7" fill="#ff9416"/><rect x="783.4" y="508.3" width="1.7" height="1.7" fill="#ff9416"/><rect x="782.8" y="512.9" width="1.7" height="1.7" fill="#ff9c1a"/><rect x="782.9" y="517.6" width="1.7" height="1.7" fill="#ff9c1a"/><rect x="783.8" y="522.2" width="1.7" height="1.7" fill="#ffa51e"/><rect x="782.6" y="526.7" width="1.7" height="1.7" fill="#ff9416"/><rect x="783.3" y="531.4" width="1.7" height="1.7" fill="#ff8a12"/><rect x="784.1" y="535.9" width="1.7" height="1.7" fill="#ff8a12"/><rect x="783.3" y="540.7" width="1.7" height="1.7" fill="#ff9c1a"/><rect x="783.5" y="545.1" width="1.7" height="1.7" fill="#ff9c1a"/><rect x="783.5" y="554.6" width="1.7" height="1.7" fill="#ff9c1a"/><rect x="782.8" y="559.2" width="1.7" height="1.7" fill="#ff9c1a"/><rect x="783.2" y="564.2" width="1.7" height="1.7" fill="#ff9416"/><rect x="783.9" y="568.8" width="1.7" height="1.7" fill="#ff9416"/><rect x="783.5" y="573.5" width="1.7" height="1.7" fill="#ff9416"/><rect x="783.1" y="578.0" width="1.7" height="1.7" fill="#ff9c1a"/><rect x="782.7" y="583.0" width="1.7" height="1.7" fill="#ff9c1a"/><rect x="783.7" y="587.4" width="1.7" height="1.7" fill="#ffa51e"/><rect x="783.9" y="592.2" width="1.7" height="1.7" fill="#ff9416"/><rect x="783.7" y="597.0" width="1.7" height="1.7" fill="#ff9c1a"/><rect x="783.1" y="601.7" width="1.7" height="1.7" fill="#ff9c1a"/><rect x="782.9" y="606.3" width="1.7" height="1.7" fill="#ff8a12"/><rect x="784.2" y="610.8" width="1.7" height="1.7" fill="#ff9416"/><rect x="783.5" y="615.5" width="1.7" height="1.7" fill="#ffa51e"/><rect x="810.7" y="75.8" width="1.7" height="1.7" fill="#f9b915"/><rect x="811.0" y="84.8" width="1.7" height="1.7" fill="#fcc41e"/><rect x="811.8" y="94.1" width="1.7" height="1.7" fill="#f9b915"/><rect x="810.9" y="98.6" width="1.7" height="1.7" fill="#ffa51e"/><rect x="811.1" y="107.9" width="1.7" height="1.7" fill="#fcc41e"/><rect x="810.6" y="112.7" width="1.7" height="1.7" fill="#ff9a1a"/><rect x="810.9" y="117.3" width="1.7" height="1.7" fill="#ffa51e"/><rect x="810.6" y="122.3" width="1.7" height="1.7" fill="#f9b915"/><rect x="810.3" y="127.2" width="1.7" height="1.7" fill="#fcc41e"/><rect x="810.9" y="131.6" width="1.7" height="1.7" fill="#f9b915"/><rect x="811.5" y="136.3" width="1.7" height="1.7" fill="#ffa51e"/><rect x="811.4" y="141.1" width="1.7" height="1.7" fill="#fcc41e"/><rect x="811.2" y="145.9" width="1.7" height="1.7" fill="#f5581e"/><rect x="811.2" y="155.8" width="1.7" height="1.7" fill="#ff9416"/><rect x="811.2" y="160.3" width="1.7" height="1.7" fill="#ff9416"/><rect x="810.9" y="164.9" width="1.7" height="1.7" fill="#ff8a12"/><rect x="811.2" y="169.5" width="1.7" height="1.7" fill="#ff9416"/><rect x="811.6" y="173.9" width="1.7" height="1.7" fill="#ff8a12"/><rect x="810.2" y="178.5" width="1.7" height="1.7" fill="#f9701e"/><rect x="810.5" y="187.6" width="1.7" height="1.7" fill="#ff8a12"/><rect x="810.6" y="192.3" width="1.7" height="1.7" fill="#f5581e"/><rect x="811.2" y="197.1" width="1.7" height="1.7" fill="#f5581e"/><rect x="809.7" y="202.0" width="1.7" height="1.7" fill="#ff9416"/><rect x="811.0" y="207.0" width="1.7" height="1.7" fill="#f9701e"/><rect x="810.3" y="211.4" width="1.7" height="1.7" fill="#ff9416"/><rect x="810.1" y="215.8" width="1.7" height="1.7" fill="#f9701e"/><rect x="810.4" y="220.7" width="1.7" height="1.7" fill="#ff9416"/><rect x="811.1" y="225.7" width="1.7" height="1.7" fill="#f5581e"/><rect x="811.6" y="230.1" width="1.7" height="1.7" fill="#ff8a12"/><rect x="810.8" y="234.8" width="1.7" height="1.7" fill="#ff9416"/><rect x="810.3" y="239.6" width="1.7" height="1.7" fill="#ff9416"/><rect x="811.3" y="244.1" width="1.7" height="1.7" fill="#f9701e"/><rect x="810.6" y="248.8" width="1.7" height="1.7" fill="#ff8a12"/><rect x="811.4" y="253.6" width="1.7" height="1.7" fill="#ff9416"/><rect x="810.6" y="258.0" width="1.7" height="1.7" fill="#f5581e"/><rect x="810.4" y="262.5" width="1.7" height="1.7" fill="#ff8a12"/><rect x="810.3" y="267.0" width="1.7" height="1.7" fill="#f5581e"/><rect x="811.3" y="271.8" width="1.7" height="1.7" fill="#ff8a12"/><rect x="811.2" y="276.5" width="1.7" height="1.7" fill="#ff9416"/><rect x="811.0" y="281.4" width="1.7" height="1.7" fill="#ff9416"/><rect x="810.9" y="286.3" width="1.7" height="1.7" fill="#ff8a12"/><rect x="811.9" y="291.3" width="1.7" height="1.7" fill="#f9701e"/><rect x="810.4" y="301.1" width="1.7" height="1.7" fill="#ff9416"/><rect x="811.5" y="305.8" width="1.7" height="1.7" fill="#f5581e"/><rect x="810.3" y="310.6" width="1.7" height="1.7" fill="#f5581e"/><rect x="810.8" y="315.2" width="1.7" height="1.7" fill="#f5581e"/><rect x="811.0" y="319.9" width="1.7" height="1.7" fill="#ff9416"/><rect x="811.2" y="324.7" width="1.7" height="1.7" fill="#f9701e"/><rect x="812.1" y="329.4" width="1.7" height="1.7" fill="#f9701e"/><rect x="810.7" y="334.1" width="1.7" height="1.7" fill="#ff8a12"/><rect x="811.0" y="338.5" width="1.7" height="1.7" fill="#ff8a12"/><rect x="811.0" y="352.9" width="1.7" height="1.7" fill="#ffa51e"/><rect x="811.1" y="357.4" width="1.7" height="1.7" fill="#ff9a1a"/><rect x="811.5" y="361.8" width="1.7" height="1.7" fill="#ff9a1a"/><rect x="810.4" y="366.7" width="1.7" height="1.7" fill="#ff9a1a"/><rect x="810.9" y="371.6" width="1.7" height="1.7" fill="#f9b915"/><rect x="811.6" y="376.3" width="1.7" height="1.7" fill="#ff9a1a"/><rect x="810.9" y="380.9" width="1.7" height="1.7" fill="#fcc41e"/><rect x="811.6" y="385.6" width="1.7" height="1.7" fill="#f9b915"/><rect x="811.6" y="390.5" width="1.7" height="1.7" fill="#fcc41e"/><rect x="811.3" y="395.2" width="1.7" height="1.7" fill="#ff9a1a"/><rect x="811.3" y="399.8" width="1.7" height="1.7" fill="#ffa51e"/><rect x="810.6" y="404.3" width="1.7" height="1.7" fill="#fcc41e"/><rect x="810.9" y="409.1" width="1.7" height="1.7" fill="#ffa51e"/><rect x="811.5" y="413.9" width="1.7" height="1.7" fill="#fcc41e"/><rect x="811.2" y="418.8" width="1.7" height="1.7" fill="#ffa51e"/><rect x="810.5" y="423.8" width="1.7" height="1.7" fill="#ffa51e"/><rect x="810.5" y="428.4" width="1.7" height="1.7" fill="#ff9a1a"/><rect x="810.3" y="432.9" width="1.7" height="1.7" fill="#ffa51e"/><rect x="810.9" y="437.8" width="1.7" height="1.7" fill="#ffa51e"/><rect x="810.5" y="446.9" width="1.7" height="1.7" fill="#ffa51e"/><rect x="811.0" y="460.4" width="1.7" height="1.7" fill="#f9b915"/><rect x="811.3" y="465.3" width="1.7" height="1.7" fill="#fcc41e"/><rect x="811.4" y="469.8" width="1.7" height="1.7" fill="#fcc41e"/><rect x="811.1" y="474.3" width="1.7" height="1.7" fill="#f9b915"/><rect x="811.3" y="479.2" width="1.7" height="1.7" fill="#ff9a1a"/><rect x="811.5" y="484.1" width="1.7" height="1.7" fill="#ffa51e"/><rect x="813.1" y="488.7" width="1.7" height="1.7" fill="#ff9a1a"/><rect x="811.3" y="493.3" width="1.7" height="1.7" fill="#f9b915"/><rect x="811.5" y="497.8" width="1.7" height="1.7" fill="#f9b915"/><rect x="811.8" y="502.7" width="1.7" height="1.7" fill="#fcc41e"/><rect x="811.8" y="507.4" width="1.7" height="1.7" fill="#fcc41e"/><rect x="810.8" y="512.1" width="1.7" height="1.7" fill="#fcc41e"/><rect x="811.4" y="516.9" width="1.7" height="1.7" fill="#ffa51e"/><rect x="811.1" y="521.4" width="1.7" height="1.7" fill="#fcc41e"/><rect x="810.9" y="525.9" width="1.7" height="1.7" fill="#fcc41e"/><rect x="811.3" y="530.7" width="1.7" height="1.7" fill="#fcc41e"/><rect x="810.6" y="535.2" width="1.7" height="1.7" fill="#ffa51e"/><rect x="811.3" y="539.7" width="1.7" height="1.7" fill="#fcc41e"/><rect x="810.5" y="544.2" width="1.7" height="1.7" fill="#f9b915"/><rect x="811.3" y="548.8" width="1.7" height="1.7" fill="#fcc41e"/><rect x="810.5" y="553.7" width="1.7" height="1.7" fill="#ffa51e"/><rect x="811.4" y="558.5" width="1.7" height="1.7" fill="#fcc41e"/><rect x="810.5" y="562.9" width="1.7" height="1.7" fill="#ff9a1a"/><rect x="811.5" y="567.5" width="1.7" height="1.7" fill="#f9b915"/><rect x="810.9" y="572.1" width="1.7" height="1.7" fill="#ff9a1a"/><rect x="811.8" y="576.8" width="1.7" height="1.7" fill="#fcc41e"/><rect x="811.3" y="581.8" width="1.7" height="1.7" fill="#fcc41e"/><rect x="810.8" y="586.7" width="1.7" height="1.7" fill="#f9b915"/><rect x="811.4" y="591.4" width="1.7" height="1.7" fill="#ffa51e"/><rect x="809.9" y="596.0" width="1.7" height="1.7" fill="#fcc41e"/><rect x="810.7" y="600.7" width="1.7" height="1.7" fill="#fcc41e"/><rect x="810.5" y="605.3" width="1.7" height="1.7" fill="#f9b915"/><rect x="811.5" y="610.2" width="1.7" height="1.7" fill="#ffa51e"/><rect x="810.6" y="614.9" width="1.7" height="1.7" fill="#f9b915"/><rect x="838.6" y="107.7" width="1.7" height="1.7" fill="#f9b915"/><rect x="839.3" y="112.1" width="1.7" height="1.7" fill="#fcc41e"/><rect x="838.4" y="149.5" width="1.7" height="1.7" fill="#ff8a12"/><rect x="839.0" y="168.2" width="1.7" height="1.7" fill="#ff8a12"/><rect x="838.8" y="172.8" width="1.7" height="1.7" fill="#ff9416"/><rect x="839.0" y="177.4" width="1.7" height="1.7" fill="#ff8a12"/><rect x="839.3" y="196.7" width="1.7" height="1.7" fill="#ff9c1a"/><rect x="839.1" y="211.1" width="1.7" height="1.7" fill="#ff9c1a"/><rect x="838.4" y="215.6" width="1.7" height="1.7" fill="#ff8a12"/><rect x="838.3" y="225.3" width="1.7" height="1.7" fill="#ff9416"/><rect x="839.2" y="234.8" width="1.7" height="1.7" fill="#ff9c1a"/><rect x="838.1" y="239.2" width="1.7" height="1.7" fill="#ff9c1a"/><rect x="838.4" y="248.6" width="1.7" height="1.7" fill="#ff9c1a"/><rect x="838.2" y="253.2" width="1.7" height="1.7" fill="#ffa51e"/><rect x="839.0" y="271.0" width="1.7" height="1.7" fill="#f9b915"/><rect x="839.4" y="275.5" width="1.7" height="1.7" fill="#ffa51e"/><rect x="839.4" y="280.0" width="1.7" height="1.7" fill="#f9b915"/><rect x="838.6" y="284.6" width="1.7" height="1.7" fill="#f9b915"/><rect x="838.4" y="289.3" width="1.7" height="1.7" fill="#ffa51e"/><rect x="838.7" y="293.7" width="1.7" height="1.7" fill="#f9b915"/><rect x="839.0" y="298.6" width="1.7" height="1.7" fill="#ff9a1a"/><rect x="838.5" y="303.3" width="1.7" height="1.7" fill="#f9b915"/><rect x="840.1" y="308.0" width="1.7" height="1.7" fill="#ff9a1a"/><rect x="838.9" y="312.4" width="1.7" height="1.7" fill="#fcc41e"/><rect x="838.0" y="316.9" width="1.7" height="1.7" fill="#f9b915"/><rect x="839.1" y="321.9" width="1.7" height="1.7" fill="#f9b915"/><rect x="839.1" y="335.4" width="1.7" height="1.7" fill="#ff9a1a"/><rect x="838.8" y="345.0" width="1.7" height="1.7" fill="#f9b915"/><rect x="839.3" y="443.2" width="1.7" height="1.7" fill="#ffb81a"/><rect x="837.7" y="447.7" width="1.7" height="1.7" fill="#ffcf36"/><rect x="838.9" y="457.1" width="1.7" height="1.7" fill="#f9b915"/><rect x="838.7" y="461.8" width="1.7" height="1.7" fill="#ffb81a"/><rect x="839.0" y="466.5" width="1.7" height="1.7" fill="#fcc41e"/><rect x="838.7" y="471.3" width="1.7" height="1.7" fill="#f9b915"/><rect x="838.1" y="480.4" width="1.7" height="1.7" fill="#fcc41e"/><rect x="838.4" y="484.9" width="1.7" height="1.7" fill="#f9b915"/><rect x="838.8" y="489.5" width="1.7" height="1.7" fill="#ffb81a"/><rect x="839.2" y="494.3" width="1.7" height="1.7" fill="#ffb81a"/><rect x="839.3" y="499.0" width="1.7" height="1.7" fill="#fcc41e"/><rect x="838.2" y="503.9" width="1.7" height="1.7" fill="#f9b915"/><rect x="839.3" y="508.4" width="1.7" height="1.7" fill="#ffcf36"/><rect x="838.8" y="517.6" width="1.7" height="1.7" fill="#ffcf36"/><rect x="838.7" y="527.3" width="1.7" height="1.7" fill="#f9b915"/><rect x="838.3" y="536.8" width="1.7" height="1.7" fill="#ffcf36"/><rect x="837.9" y="541.4" width="1.7" height="1.7" fill="#ffb81a"/><rect x="839.0" y="546.2" width="1.7" height="1.7" fill="#ffcf36"/><rect x="837.9" y="560.1" width="1.7" height="1.7" fill="#f9b915"/><rect x="839.2" y="564.9" width="1.7" height="1.7" fill="#f9b915"/><rect x="838.6" y="569.8" width="1.7" height="1.7" fill="#f9b915"/><rect x="839.3" y="579.3" width="1.7" height="1.7" fill="#f9b915"/><rect x="838.0" y="584.0" width="1.7" height="1.7" fill="#fcc41e"/><rect x="838.5" y="593.3" width="1.7" height="1.7" fill="#f9b915"/><rect x="838.2" y="598.3" width="1.7" height="1.7" fill="#ffb81a"/><rect x="840.2" y="603.2" width="1.7" height="1.7" fill="#f9b915"/><rect x="838.5" y="612.4" width="1.7" height="1.7" fill="#ffb81a"/><rect x="866.6" y="80.1" width="1.7" height="1.7" fill="#fcc41e"/><rect x="867.0" y="94.3" width="1.7" height="1.7" fill="#f9b915"/><rect x="865.9" y="113.1" width="1.7" height="1.7" fill="#f9b915"/><rect x="866.5" y="127.2" width="1.7" height="1.7" fill="#f9b915"/><rect x="866.1" y="131.7" width="1.7" height="1.7" fill="#f9b915"/><rect x="865.7" y="150.3" width="1.7" height="1.7" fill="#f9b915"/><rect x="865.8" y="188.1" width="1.7" height="1.7" fill="#f9b915"/><rect x="866.9" y="192.6" width="1.7" height="1.7" fill="#f9b915"/><rect x="865.6" y="201.7" width="1.7" height="1.7" fill="#f9b915"/><rect x="866.1" y="211.2" width="1.7" height="1.7" fill="#ffb81a"/><rect x="866.9" y="220.9" width="1.7" height="1.7" fill="#ffb81a"/><rect x="866.5" y="225.6" width="1.7" height="1.7" fill="#ffcf36"/><rect x="866.7" y="234.9" width="1.7" height="1.7" fill="#fcc41e"/><rect x="865.5" y="244.3" width="1.7" height="1.7" fill="#f9b915"/><rect x="866.3" y="272.5" width="1.7" height="1.7" fill="#f9b915"/><rect x="865.8" y="277.5" width="1.7" height="1.7" fill="#fcc41e"/><rect x="867.0" y="281.9" width="1.7" height="1.7" fill="#ffcf36"/><rect x="866.1" y="286.6" width="1.7" height="1.7" fill="#f9b915"/><rect x="866.4" y="296.0" width="1.7" height="1.7" fill="#ffb81a"/><rect x="866.2" y="305.4" width="1.7" height="1.7" fill="#ffb81a"/><rect x="865.7" y="324.4" width="1.7" height="1.7" fill="#ffb81a"/><rect x="865.7" y="343.9" width="1.7" height="1.7" fill="#ffb81a"/><rect x="867.2" y="348.8" width="1.7" height="1.7" fill="#f9b915"/><rect x="867.0" y="367.7" width="1.7" height="1.7" fill="#ffb81a"/><rect x="865.3" y="382.2" width="1.7" height="1.7" fill="#ffcf36"/><rect x="866.7" y="387.2" width="1.7" height="1.7" fill="#fcc41e"/><rect x="865.4" y="391.7" width="1.7" height="1.7" fill="#ffb81a"/><rect x="866.0" y="400.8" width="1.7" height="1.7" fill="#ffcf36"/><rect x="865.4" y="405.8" width="1.7" height="1.7" fill="#ffb81a"/><rect x="867.4" y="410.6" width="1.7" height="1.7" fill="#fcc41e"/><rect x="866.2" y="420.1" width="1.7" height="1.7" fill="#ffcf36"/><rect x="866.4" y="438.4" width="1.7" height="1.7" fill="#ffb81a"/><rect x="866.5" y="448.0" width="1.7" height="1.7" fill="#fcc41e"/><rect x="866.4" y="475.6" width="1.7" height="1.7" fill="#fcc41e"/><rect x="866.5" y="498.7" width="1.7" height="1.7" fill="#f9b915"/><rect x="866.3" y="513.3" width="1.7" height="1.7" fill="#ffcf36"/><rect x="866.4" y="518.0" width="1.7" height="1.7" fill="#f9b915"/><rect x="864.8" y="527.0" width="1.7" height="1.7" fill="#ffcf36"/><rect x="866.4" y="550.7" width="1.7" height="1.7" fill="#ffcf36"/><rect x="865.9" y="555.3" width="1.7" height="1.7" fill="#f9b915"/><rect x="867.0" y="560.0" width="1.7" height="1.7" fill="#f9b915"/><rect x="865.9" y="578.9" width="1.7" height="1.7" fill="#f9b915"/><rect x="866.5" y="588.4" width="1.7" height="1.7" fill="#f9b915"/><rect x="865.8" y="602.6" width="1.7" height="1.7" fill="#fcc41e"/><rect x="866.0" y="612.2" width="1.7" height="1.7" fill="#ffb81a"/><rect x="865.6" y="616.6" width="1.7" height="1.7" fill="#ffb81a"/><rect x="111.8" y="77.2" width="1.5" height="1.5" fill="#ffcf36"/><rect x="111.8" y="87.2" width="1.5" height="1.5" fill="#f9b915"/><rect x="112.2" y="96.2" width="1.5" height="1.5" fill="#ffb81a"/><rect x="111.8" y="111.2" width="1.5" height="1.5" fill="#ffb81a"/><rect x="112.2" y="119.2" width="1.5" height="1.5" fill="#f9b915"/><rect x="118.2" y="77.2" width="1.5" height="1.5" fill="#fcc41e"/><rect x="120.2" y="86.2" width="1.5" height="1.5" fill="#f9b915"/><rect x="126.2" y="92.2" width="1.5" height="1.5" fill="#ffb81a"/><rect x="127.2" y="106.2" width="1.5" height="1.5" fill="#ffb81a"/><rect x="126.2" y="114.2" width="1.5" height="1.5" fill="#ffb81a"/><rect x="120.2" y="121.2" width="1.5" height="1.5" fill="#fcc41e"/><rect x="127.2" y="125.2" width="1.5" height="1.5" fill="#ffb81a"/><rect x="114.2" y="136.2" width="1.5" height="1.5" fill="#f9b915"/><rect x="116.2" y="150.2" width="1.5" height="1.5" fill="#fcc41e"/><rect x="111.2" y="142.2" width="1.5" height="1.5" fill="#fcc41e"/><rect x="119.2" y="163.2" width="1.5" height="1.5" fill="#fcc41e"/><rect x="126.2" y="169.2" width="1.5" height="1.5" fill="#fcc41e"/><rect x="117.2" y="177.2" width="1.5" height="1.5" fill="#fcc41e"/><rect x="131.2" y="128.2" width="1.5" height="1.5" fill="#ffcf36"/><rect x="108.2" y="114.2" width="1.5" height="1.5" fill="#f9b915"/><rect x="91.5" y="102.5" width="31" height="188" fill="none" stroke="#2e2e2e" stroke-width="1"/><rect x="202.5" y="134.5" width="698" height="107" fill="none" stroke="#2e2e2e" stroke-width="1"/><rect x="257.5" y="251.5" width="29" height="84" fill="none" stroke="#2e2e2e" stroke-width="1"/><rect x="313.5" y="167.5" width="387" height="93" fill="none" stroke="#2e2e2e" stroke-width="1"/><rect x="313.5" y="280.5" width="58" height="145" fill="none" stroke="#2e2e2e" stroke-width="1"/><rect x="34.5" y="387.5" width="60" height="104" fill="none" stroke="#2e2e2e" stroke-width="1"/><rect x="230.5" y="411.5" width="57" height="95" fill="none" stroke="#2e2e2e" stroke-width="1"/><rect x="341.5" y="434.5" width="84" height="92" fill="none" stroke="#2e2e2e" stroke-width="1"/><rect x="753.5" y="211.5" width="60" height="144" fill="none" stroke="#2e2e2e" stroke-width="1"/><rect x="809.5" y="144.5" width="57" height="112" fill="none" stroke="#2e2e2e" stroke-width="1"/><rect x="562.5" y="460.5" width="84" height="76" fill="none" stroke="#2e2e2e" stroke-width="1"/><rect x="672.5" y="462.5" width="58" height="83" fill="none" stroke="#2e2e2e" stroke-width="1"/><rect x="728.5" y="378.5" width="57" height="187" fill="none" stroke="#2e2e2e" stroke-width="1"/><path d="M728 467.5 H785.5 M728 481.5 H785.5" stroke="#2e2e2e"/></g><line x1="34.5" y1="73" x2="34.5" y2="621" stroke="#222" stroke-width="1.2"/><line x1="34" y1="620.5" x2="867" y2="620.5" stroke="#222" stroke-width="1.4"/><line x1="33" y1="81.5" x2="35.5" y2="81.5" stroke="#222"/><text x="32.2" y="83.1" text-anchor="end" font-size="6" font-weight="bold" letter-spacing="0.15" fill="#222">4480</text><line x1="33" y1="95.5" x2="35.5" y2="95.5" stroke="#222"/><line x1="33" y1="110.5" x2="35.5" y2="110.5" stroke="#222"/><text x="32.2" y="112.1" text-anchor="end" font-size="6" font-weight="bold" letter-spacing="0.15" fill="#222">4460</text><line x1="33" y1="125.5" x2="35.5" y2="125.5" stroke="#222"/><line x1="33" y1="139.5" x2="35.5" y2="139.5" stroke="#222"/><text x="32.2" y="141.1" text-anchor="end" font-size="6" font-weight="bold" letter-spacing="0.15" fill="#222">4440</text><line x1="33" y1="154.5" x2="35.5" y2="154.5" stroke="#222"/><line x1="33" y1="168.5" x2="35.5" y2="168.5" stroke="#222"/><text x="32.2" y="170.1" text-anchor="end" font-size="6" font-weight="bold" letter-spacing="0.15" fill="#222">4420</text><line x1="33" y1="183.5" x2="35.5" y2="183.5" stroke="#222"/><line x1="33" y1="198.5" x2="35.5" y2="198.5" stroke="#222"/><text x="32.6" y="199.8" text-anchor="end" font-size="8.4" fill="#333">4400</text><line x1="33" y1="212.5" x2="35.5" y2="212.5" stroke="#222"/><line x1="33" y1="227.5" x2="35.5" y2="227.5" stroke="#222"/><text x="32.2" y="229.1" text-anchor="end" font-size="6" font-weight="bold" letter-spacing="0.15" fill="#222">4380</text><line x1="33" y1="241.5" x2="35.5" y2="241.5" stroke="#222"/><line x1="33" y1="256.5" x2="35.5" y2="256.5" stroke="#222"/><text x="32.2" y="258.1" text-anchor="end" font-size="6" font-weight="bold" letter-spacing="0.15" fill="#222">4360</text><line x1="33" y1="271.5" x2="35.5" y2="271.5" stroke="#222"/><line x1="33" y1="285.5" x2="35.5" y2="285.5" stroke="#222"/><text x="32.2" y="287.1" text-anchor="end" font-size="6" font-weight="bold" letter-spacing="0.15" fill="#222">4340</text><line x1="33" y1="300.5" x2="35.5" y2="300.5" stroke="#222"/><line x1="33" y1="314.5" x2="35.5" y2="314.5" stroke="#222"/><text x="32.2" y="316.1" text-anchor="end" font-size="6" font-weight="bold" letter-spacing="0.15" fill="#222">4320</text><line x1="33" y1="329.5" x2="35.5" y2="329.5" stroke="#222"/><line x1="33" y1="344.5" x2="35.5" y2="344.5" stroke="#222"/><text x="32.6" y="345.8" text-anchor="end" font-size="8.4" fill="#333">4300</text><line x1="33" y1="358.5" x2="35.5" y2="358.5" stroke="#222"/><line x1="33" y1="373.5" x2="35.5" y2="373.5" stroke="#222"/><text x="32.2" y="375.1" text-anchor="end" font-size="6" font-weight="bold" letter-spacing="0.15" fill="#222">4280</text><line x1="33" y1="387.5" x2="35.5" y2="387.5" stroke="#222"/><line x1="33" y1="402.5" x2="35.5" y2="402.5" stroke="#222"/><text x="32.2" y="404.1" text-anchor="end" font-size="6" font-weight="bold" letter-spacing="0.15" fill="#222">4260</text><line x1="33" y1="417.5" x2="35.5" y2="417.5" stroke="#222"/><line x1="33" y1="431.5" x2="35.5" y2="431.5" stroke="#222"/><text x="32.2" y="433.1" text-anchor="end" font-size="6" font-weight="bold" letter-spacing="0.15" fill="#222">4240</text><line x1="33" y1="446.5" x2="35.5" y2="446.5" stroke="#222"/><line x1="33" y1="460.5" x2="35.5" y2="460.5" stroke="#222"/><text x="32.2" y="462.1" text-anchor="end" font-size="6" font-weight="bold" letter-spacing="0.15" fill="#222">4220</text><line x1="33" y1="475.5" x2="35.5" y2="475.5" stroke="#222"/><line x1="33" y1="490.5" x2="35.5" y2="490.5" stroke="#222"/><text x="32.6" y="491.8" text-anchor="end" font-size="8.4" fill="#333">4200</text><line x1="33" y1="504.5" x2="35.5" y2="504.5" stroke="#222"/><line x1="33" y1="519.5" x2="35.5" y2="519.5" stroke="#222"/><text x="32.2" y="521.1" text-anchor="end" font-size="6" font-weight="bold" letter-spacing="0.15" fill="#222">4180</text><line x1="33" y1="533.5" x2="35.5" y2="533.5" stroke="#222"/><line x1="33" y1="548.5" x2="35.5" y2="548.5" stroke="#222"/><text x="32.2" y="550.1" text-anchor="end" font-size="6" font-weight="bold" letter-spacing="0.15" fill="#222">4160</text><line x1="33" y1="563.5" x2="35.5" y2="563.5" stroke="#222"/><line x1="33" y1="577.5" x2="35.5" y2="577.5" stroke="#222"/><text x="32.2" y="579.1" text-anchor="end" font-size="6" font-weight="bold" letter-spacing="0.15" fill="#222">4140</text><line x1="33" y1="592.5" x2="35.5" y2="592.5" stroke="#222"/><line x1="33" y1="606.5" x2="35.5" y2="606.5" stroke="#222"/><text x="32.2" y="608.1" text-anchor="end" font-size="6" font-weight="bold" letter-spacing="0.15" fill="#222">4120</text><line x1="78.5" y1="620" x2="78.5" y2="622" stroke="#444"/><text x="78.8" y="627" text-anchor="middle" font-size="5.2" font-weight="bold" letter-spacing="0.5" fill="#222">644</text><line x1="134.5" y1="620" x2="134.5" y2="622" stroke="#444"/><text x="134.8" y="627" text-anchor="middle" font-size="5.2" font-weight="bold" letter-spacing="0.5" fill="#222">645</text><line x1="189.5" y1="620" x2="189.5" y2="622" stroke="#444"/><text x="189.8" y="627" text-anchor="middle" font-size="5.2" font-weight="bold" letter-spacing="0.5" fill="#222">646</text><line x1="244.5" y1="620" x2="244.5" y2="622" stroke="#444"/><text x="244.8" y="627" text-anchor="middle" font-size="5.2" font-weight="bold" letter-spacing="0.5" fill="#222">647</text><line x1="299.5" y1="620" x2="299.5" y2="622" stroke="#444"/><text x="299.8" y="627" text-anchor="middle" font-size="5.2" font-weight="bold" letter-spacing="0.5" fill="#222">648</text><line x1="355.5" y1="620" x2="355.5" y2="622" stroke="#444"/><text x="355.8" y="627" text-anchor="middle" font-size="5.2" font-weight="bold" letter-spacing="0.5" fill="#222">649</text><line x1="410.5" y1="620" x2="410.5" y2="622" stroke="#444"/><text x="410.5" y="628" text-anchor="middle" font-size="8" fill="#333">650</text><line x1="465.5" y1="620" x2="465.5" y2="622" stroke="#444"/><text x="465.8" y="627" text-anchor="middle" font-size="5.2" font-weight="bold" letter-spacing="0.5" fill="#222">651</text><line x1="520.5" y1="620" x2="520.5" y2="622" stroke="#444"/><text x="520.8" y="627" text-anchor="middle" font-size="5.2" font-weight="bold" letter-spacing="0.5" fill="#222">652</text><line x1="575.5" y1="620" x2="575.5" y2="622" stroke="#444"/><text x="575.8" y="627" text-anchor="middle" font-size="5.2" font-weight="bold" letter-spacing="0.5" fill="#222">653</text><line x1="631.5" y1="620" x2="631.5" y2="622" stroke="#444"/><text x="631.8" y="627" text-anchor="middle" font-size="5.2" font-weight="bold" letter-spacing="0.5" fill="#222">654</text><line x1="686.5" y1="620" x2="686.5" y2="622" stroke="#444"/><text x="686.8" y="627" text-anchor="middle" font-size="5.2" font-weight="bold" letter-spacing="0.5" fill="#222">655</text><line x1="741.5" y1="620" x2="741.5" y2="622" stroke="#444"/><text x="741.8" y="627" text-anchor="middle" font-size="5.2" font-weight="bold" letter-spacing="0.5" fill="#222">656</text><line x1="796.5" y1="620" x2="796.5" y2="622" stroke="#444"/><text x="796.8" y="627" text-anchor="middle" font-size="5.2" font-weight="bold" letter-spacing="0.5" fill="#222">657</text><line x1="852.5" y1="620" x2="852.5" y2="622" stroke="#444"/><text x="852.8" y="627" text-anchor="middle" font-size="5.2" font-weight="bold" letter-spacing="0.5" fill="#222">658</text><text x="451" y="636" text-anchor="middle" font-size="5.6" font-weight="bold" fill="#222">MZ [Th]</text><text transform="translate(11.6,346) rotate(-90)" text-anchor="middle" font-size="5.8" font-weight="bold" fill="#222">RT [sec]</text></svg>
<div class="abs" style="left:386px;top:80px;width:342px;height:414px;background:#dfdedd;box-shadow:0 5px 10px rgba(0,0,0,0.62);border:1px solid #9a9a9a;border-top:none"></div>
<div class="abs" style="left:386px;top:80px;width:342px;height:13px;background:linear-gradient(#d6d6d6,#c4c4c4 40%,#a6a6a6);border-top:1px solid #e4e4e4;border-radius:2px 2px 0 0"></div>
<div class="abs tlr" style="left:390.5px;top:82px"></div>
<div class="tl" style="left:402.5px;top:82px"></div>
<div class="tl" style="left:414.5px;top:82px"></div>
<svg class="abs" style="left:531.5px;top:83.5px" width="8" height="8"><rect x="0.5" y="0.5" width="7" height="7" fill="#f4f4f4" stroke="#9a9a9a"/><path d="M2 1.2 L6.2 6.8" stroke="#333" stroke-width="1.1"/><path d="M6 1.2 L2 6.8" stroke="#555" stroke-width="0.6"/></svg>
<div class="abs dt" style="left:544px;top:82px;font-size:8.3px;color:#151515;-webkit-text-stroke:0.3px #151515;transform:scaleX(0.92);transform-origin:0 0">TOPP tools</div>
<div class="abs dt" style="left:393px;top:100.6px">TOPP tool:</div>
<div class="abs combo" style="left:461px;top:100px"><span style="left:2px;top:-0.4px">FeatureFinderCentroided</span><i></i><b></b></div>
<div class="abs dt" style="left:393px;top:116.5px">input argument:</div>
<div class="abs combo" style="left:461px;top:116px"><span style="left:2px;top:-0.5px">in</span><i></i><b></b></div>
<div class="abs dt" style="left:393px;top:133.2px">output argument:</div>
<div class="abs combo" style="left:461px;top:132.5px"><span style="left:2px;top:-0.3px">out</span><i></i><b></b></div>
<div class="abs" style="left:398.5px;top:154.5px;width:317.5px;height:244px;background:#fff;border:1px solid #8c8c8c"></div>
<div class="abs hdr" style="left:399.5px;top:155.5px;width:315.5px;height:12px"></div>
<div class="abs dt" style="left:401.9px;top:157.0px;color:#111">parameter</div>
<div class="abs dt" style="left:490.6px;top:157.0px;color:#111">value</div>
<div class="abs dt" style="left:546.5px;top:157.0px;color:#111">type</div>
<div class="abs dt" style="left:590.9px;top:157.0px;color:#111">restrictions</div>
<div class="abs" style="left:488.5px;top:156px;width:1px;height:11px;background:#a0a0a0"></div>
<div class="abs" style="left:544.5px;top:156px;width:1px;height:11px;background:#a0a0a0"></div>
<div class="abs" style="left:588.5px;top:156px;width:1px;height:11px;background:#a0a0a0"></div>
<div class="abs" style="left:405px;top:168.0px;width:1px;height:37.3px;background:#a4a4a4"></div>
<div class="abs" style="left:406px;top:172.0px;width:5px;height:1px;background:#a4a4a4"></div>
<div class="abs" style="left:406px;top:181.0px;width:5px;height:1px;background:#a4a4a4"></div>
<div class="abs" style="left:406px;top:190.0px;width:5px;height:1px;background:#a4a4a4"></div>
<div class="abs" style="left:406px;top:199.0px;width:5px;height:1px;background:#a4a4a4"></div>
<div class="abs" style="left:416.5px;top:211.3px;width:1px;height:151.0px;background:#c8c8c8"></div>
<div class="abs" style="left:428.5px;top:227.7px;width:1px;height:6.3px;background:#c8c8c8"></div>
<div class="abs" style="left:429px;top:233.0px;width:4px;height:1px;background:#b0b0b0"></div>
<div class="abs" style="left:428.5px;top:245.2px;width:1px;height:32.8px;background:#c8c8c8"></div>
<div class="abs" style="left:429px;top:251.0px;width:4px;height:1px;background:#b0b0b0"></div>
<div class="abs" style="left:429px;top:260.0px;width:4px;height:1px;background:#b0b0b0"></div>
<div class="abs" style="left:429px;top:268.0px;width:4px;height:1px;background:#b0b0b0"></div>
<div class="abs" style="left:429px;top:277.0px;width:4px;height:1px;background:#b0b0b0"></div>
<div class="abs" style="left:428.5px;top:288.8px;width:1px;height:24.2px;background:#c8c8c8"></div>
<div class="abs" style="left:429px;top:294.0px;width:4px;height:1px;background:#b0b0b0"></div>
<div class="abs" style="left:429px;top:303.0px;width:4px;height:1px;background:#b0b0b0"></div>
<div class="abs" style="left:429px;top:312.0px;width:4px;height:1px;background:#b0b0b0"></div>
<div class="abs" style="left:428.5px;top:323.6px;width:1px;height:6.4px;background:#c8c8c8"></div>
<div class="abs" style="left:429px;top:329.0px;width:4px;height:1px;background:#b0b0b0"></div>
<div class="abs" style="left:428.5px;top:341.1px;width:1px;height:15.9px;background:#c8c8c8"></div>
<div class="abs" style="left:429px;top:347.0px;width:4px;height:1px;background:#b0b0b0"></div>
<div class="abs" style="left:429px;top:356.0px;width:4px;height:1px;background:#b0b0b0"></div>
<div class="abs" style="left:428.5px;top:367.2px;width:1px;height:23.8px;background:#c8c8c8"></div>
<div class="abs" style="left:429px;top:373.0px;width:4px;height:1px;background:#b0b0b0"></div>
<div class="abs" style="left:429px;top:382.0px;width:4px;height:1px;background:#b0b0b0"></div>
<div class="abs" style="left:429px;top:390.0px;width:4px;height:1px;background:#b0b0b0"></div>
<div class="abs dt" style="left:412.9px;top:168.6px;color:#f27d00">in</div>
<div class="abs dt" style="left:546.5px;top:168.6px;color:#f27d00">input file</div>
<div class="abs dt" style="left:590.9px;top:168.6px;color:#f27d00">*.mzML</div>
<div class="abs dt" style="left:412.9px;top:177.3px;color:#f27d00">out</div>
<div class="abs dt" style="left:546.5px;top:177.3px;color:#f27d00">output file</div>
<div class="abs dt" style="left:590.9px;top:177.3px;color:#f27d00">*.featureXML</div>
<div class="abs dt" style="left:412.9px;top:186.0px;color:#808080">seeds</div>
<div class="abs dt" style="left:546.5px;top:186.0px;color:#7a7a7a">input file</div>
<div class="abs dt" style="left:590.9px;top:186.0px;color:#7a7a7a">*.featureXML</div>
<div class="abs dt" style="left:412.9px;top:194.8px;color:#808080">threads</div>
<div class="abs dt" style="left:490.6px;top:194.8px;color:#1a1a1a">1</div>
<div class="abs dt" style="left:546.5px;top:194.8px;color:#7a7a7a">int</div>
<div class="abs tb" style="left:402px;top:204.5px"></div>
<div class="abs" style="left:407px;top:207.0px;width:4px;height:1px;background:#a0a0a0"></div>
<div class="abs dt" style="left:412.9px;top:203.5px;color:#808080">algorithm</div>
<div class="abs" style="left:417px;top:216.0px;width:5px;height:1px;background:#b0b0b0"></div>
<div class="abs dt" style="left:424.6px;top:212.2px;color:#808080">debug</div>
<div class="abs dt" style="left:490.6px;top:212.2px;color:#1a1a1a">false</div>
<div class="abs dt" style="left:546.5px;top:212.2px;color:#7a7a7a">string</div>
<div class="abs dt" style="left:590.9px;top:212.2px;color:#7a7a7a">true,false</div>
<div class="abs tb" style="left:414px;top:222.5px"></div>
<div class="abs" style="left:419px;top:225.0px;width:4px;height:1px;background:#a0a0a0"></div>
<div class="abs dt" style="left:424.6px;top:220.9px;color:#808080">intensity</div>
<div class="abs dt" style="left:435.8px;top:229.6px;color:#808080">bins</div>
<div class="abs dt" style="left:490.6px;top:229.6px;color:#1a1a1a">10</div>
<div class="abs dt" style="left:546.5px;top:229.6px;color:#7a7a7a">int</div>
<div class="abs dt" style="left:590.9px;top:229.6px;color:#7a7a7a">min: 1</div>
<div class="abs tb" style="left:414px;top:239.5px"></div>
<div class="abs" style="left:419px;top:242.0px;width:4px;height:1px;background:#a0a0a0"></div>
<div class="abs dt" style="left:424.6px;top:238.4px;color:#808080">mass_trace</div>
<div class="abs dt" style="left:435.8px;top:247.1px;color:#808080">mz_tolerance</div>
<div class="abs dt" style="left:490.6px;top:247.1px;color:#1a1a1a">0.03</div>
<div class="abs dt" style="left:546.5px;top:247.1px;color:#7a7a7a">float</div>
<div class="abs dt" style="left:590.9px;top:247.1px;color:#7a7a7a">min: 0</div>
<div class="abs dt" style="left:435.8px;top:255.8px;color:#808080">min_spectra</div>
<div class="abs dt" style="left:490.6px;top:255.8px;color:#1a1a1a">10</div>
<div class="abs dt" style="left:546.5px;top:255.8px;color:#7a7a7a">int</div>
<div class="abs dt" style="left:590.9px;top:255.8px;color:#7a7a7a">min: 1</div>
<div class="abs dt" style="left:435.8px;top:264.5px;color:#808080">max_missing</div>
<div class="abs dt" style="left:490.6px;top:264.5px;color:#1a1a1a">1</div>
<div class="abs dt" style="left:546.5px;top:264.5px;color:#7a7a7a">int</div>
<div class="abs dt" style="left:590.9px;top:264.5px;color:#7a7a7a">min: 0</div>
<div class="abs dt" style="left:435.8px;top:273.2px;color:#808080">slope_bound</div>
<div class="abs dt" style="left:490.6px;top:273.2px;color:#1a1a1a">0.1</div>
<div class="abs dt" style="left:546.5px;top:273.2px;color:#7a7a7a">float</div>
<div class="abs dt" style="left:590.9px;top:273.2px;color:#7a7a7a">min: 0</div>
<div class="abs tb" style="left:414px;top:283.5px"></div>
<div class="abs" style="left:419px;top:286.0px;width:4px;height:1px;background:#a0a0a0"></div>
<div class="abs dt" style="left:424.6px;top:282.0px;color:#808080">isotopic_pattern</div>
<div class="abs dt" style="left:435.8px;top:290.7px;color:#808080">charge_low</div>
<div class="abs dt" style="left:490.6px;top:290.7px;color:#1a1a1a">1</div>
<div class="abs dt" style="left:546.5px;top:290.7px;color:#7a7a7a">int</div>
<div class="abs dt" style="left:590.9px;top:290.7px;color:#7a7a7a">min: 1</div>
<div class="abs dt" style="left:435.8px;top:299.4px;color:#808080">charge_high</div>
<div class="abs dt" style="left:490.6px;top:299.4px;color:#1a1a1a">4</div>
<div class="abs dt" style="left:546.5px;top:299.4px;color:#7a7a7a">int</div>
<div class="abs dt" style="left:590.9px;top:299.4px;color:#7a7a7a">min: 1</div>
<div class="abs dt" style="left:435.8px;top:308.1px;color:#808080">mz_tolerance</div>
<div class="abs dt" style="left:490.6px;top:308.1px;color:#1a1a1a">0.03</div>
<div class="abs dt" style="left:546.5px;top:308.1px;color:#7a7a7a">float</div>
<div class="abs dt" style="left:590.9px;top:308.1px;color:#7a7a7a">min: 0</div>
<div class="abs tb" style="left:414px;top:318.5px"></div>
<div class="abs" style="left:419px;top:321.0px;width:4px;height:1px;background:#a0a0a0"></div>
<div class="abs dt" style="left:424.6px;top:316.8px;color:#808080">seed</div>
<div class="abs dt" style="left:435.8px;top:325.6px;color:#808080">min_score</div>
<div class="abs dt" style="left:490.6px;top:325.6px;color:#1a1a1a">0.8</div>
<div class="abs dt" style="left:546.5px;top:325.6px;color:#7a7a7a">float</div>
<div class="abs dt" style="left:590.9px;top:325.6px;color:#7a7a7a">min: 0 max: 1</div>
<div class="abs tb" style="left:414px;top:335.5px"></div>
<div class="abs" style="left:419px;top:338.0px;width:4px;height:1px;background:#a0a0a0"></div>
<div class="abs dt" style="left:424.6px;top:334.3px;color:#808080">feature</div>
<div class="abs dt" style="left:435.8px;top:343.0px;color:#808080">min_score</div>
<div class="abs dt" style="left:490.6px;top:343.0px;color:#1a1a1a">0.7</div>
<div class="abs dt" style="left:546.5px;top:343.0px;color:#7a7a7a">float</div>
<div class="abs dt" style="left:590.9px;top:343.0px;color:#7a7a7a">min: 0 max: 1</div>
<div class="abs dt" style="left:435.8px;top:351.7px;color:#808080">reported_mz</div>
<div class="abs dt" style="left:490.6px;top:351.7px;color:#1a1a1a">monoisotopic</div>
<div class="abs dt" style="left:546.5px;top:351.7px;color:#7a7a7a">string</div>
<div class="abs dt" style="left:590.9px;top:351.7px;color:#7a7a7a">maximum,average,monoisotopic</div>
<div class="abs tb" style="left:414px;top:361.5px"></div>
<div class="abs" style="left:419px;top:364.0px;width:4px;height:1px;background:#a0a0a0"></div>
<div class="abs dt" style="left:424.6px;top:360.4px;color:#808080">user-seed</div>
<div class="abs dt" style="left:435.8px;top:369.2px;color:#808080">rt_tolerance</div>
<div class="abs dt" style="left:490.6px;top:369.2px;color:#1a1a1a">5</div>
<div class="abs dt" style="left:546.5px;top:369.2px;color:#7a7a7a">float</div>
<div class="abs dt" style="left:590.9px;top:369.2px;color:#7a7a7a">min: 0</div>
<div class="abs dt" style="left:435.8px;top:377.9px;color:#808080">mz_tolerance</div>
<div class="abs dt" style="left:490.6px;top:377.9px;color:#1a1a1a">1.1</div>
<div class="abs dt" style="left:546.5px;top:377.9px;color:#7a7a7a">float</div>
<div class="abs dt" style="left:590.9px;top:377.9px;color:#7a7a7a">min: 0</div>
<div class="abs dt" style="left:435.8px;top:386.6px;color:#808080">min_score</div>
<div class="abs dt" style="left:490.6px;top:386.6px;color:#1a1a1a">0.5</div>
<div class="abs dt" style="left:546.5px;top:386.6px;color:#7a7a7a">float</div>
<div class="abs dt" style="left:590.9px;top:386.6px;color:#7a7a7a">min: 0 max: 1</div>
<div class="abs" style="left:398.5px;top:403px;width:317.5px;height:42.5px;background:#fff;border:1px solid #8c8c8c"></div>
<div class="abs" style="left:600.5px;top:451.5px;width:7.5px;height:7.5px;background:#f6f6f6;border:1px solid #8a8a8a;border-radius:1px"></div>
<div class="abs dt" style="left:611.3px;top:450.6px">Show advanced parameters</div>
<div class="abs btn" style="left:392.7px;top:471.8px;width:43.5px;height:14px"><span><u>L</u>oad</span></div>
<div class="abs btn" style="left:441.7px;top:471.8px;width:44px;height:14px"><span><u>S</u>tore</span></div>
<div class="abs btn" style="left:628.2px;top:471.8px;width:43.0px;height:14px"><span><u>O</u>k</span></div>
<div class="abs btn" style="left:677.7px;top:471.8px;width:43.5px;height:14px"><span><u>C</u>ancel</span></div>
<svg class="abs" style="left:717px;top:481px" width="10" height="10"><path d="M9 1 L1 9 M9 4 L4 9 M9 7 L7 9" stroke="#9a9a9a" stroke-width="1"/></svg>
</body></html>
